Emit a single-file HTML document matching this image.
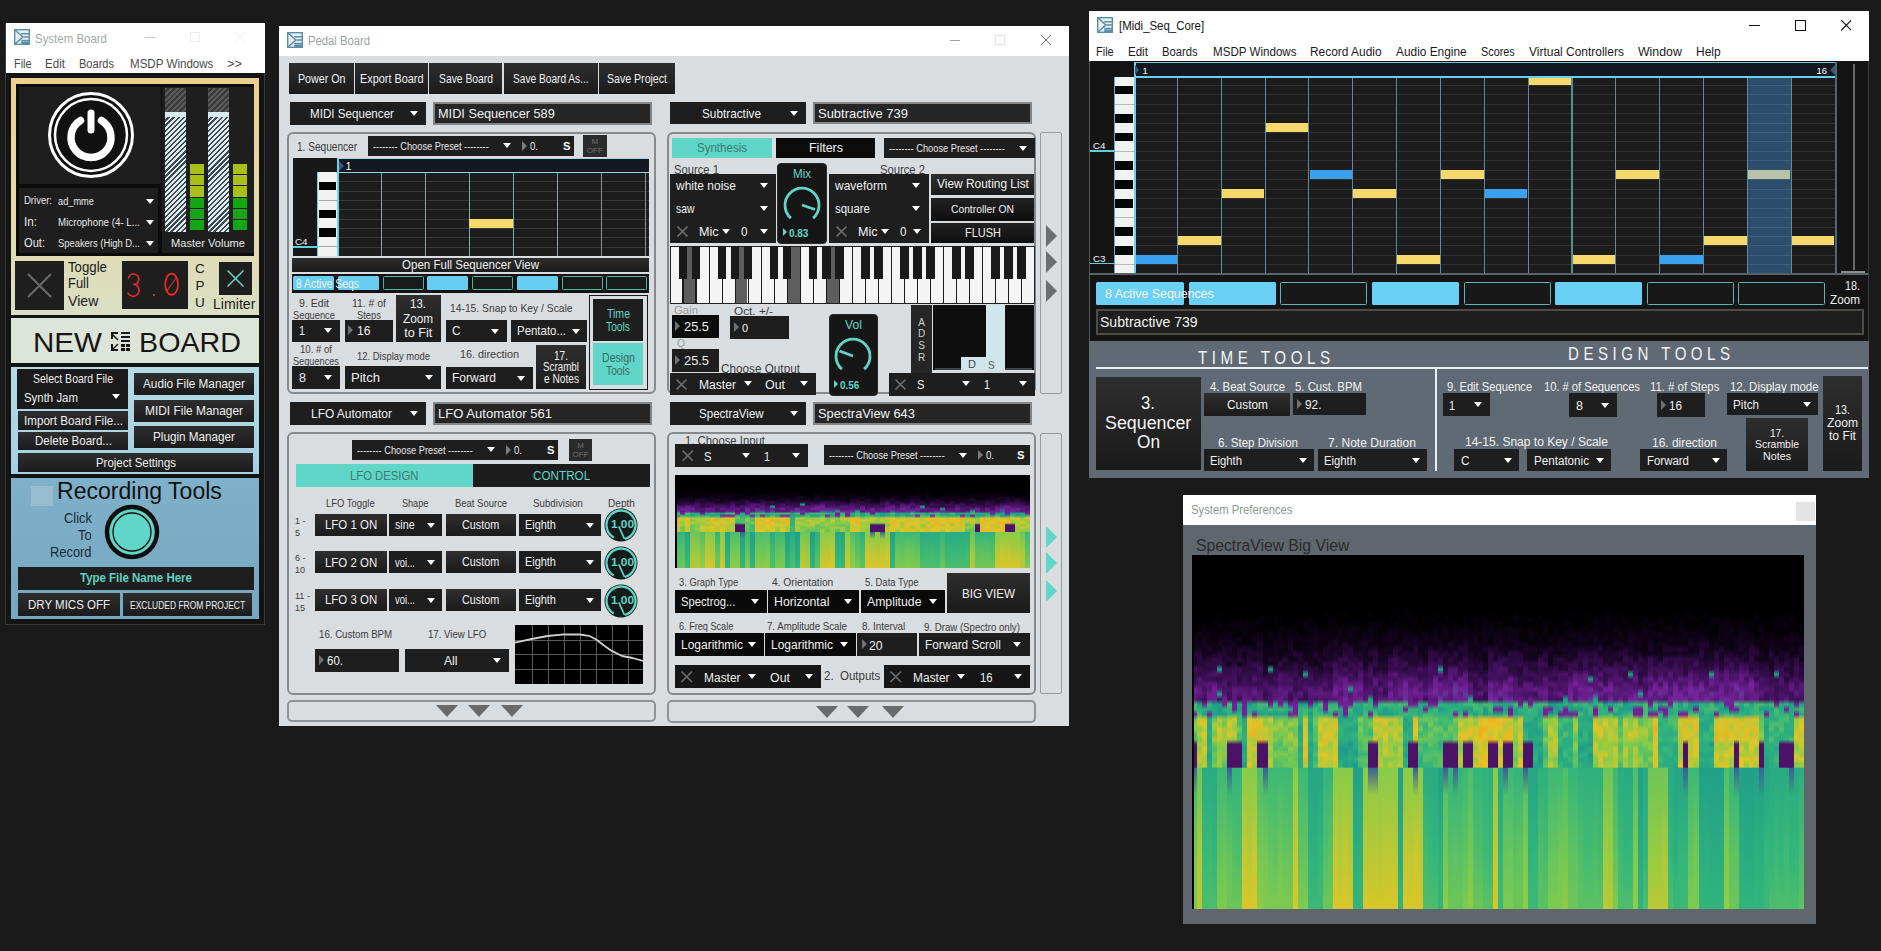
<!DOCTYPE html>
<html><head><meta charset="utf-8"><title>MSDP</title>
<style>
html,body{margin:0;padding:0;}
body{width:1881px;height:951px;overflow:hidden;background:#1a1a1a;position:relative;font-family:"Liberation Sans",sans-serif;}
div{position:absolute;box-sizing:border-box;}
svg{position:absolute;}
</style></head><body>
<div style="left:5px;top:22.5px;width:260px;height:602.5px;background:#141414;border:1px solid #3a3a3a;"></div>
<div style="left:5.5px;top:23px;width:259.0px;height:50px;background:#ffffff;"></div>
<svg style="position:absolute;left:14px;top:29px" width="16" height="16" viewBox="0 0 16 16"><rect x="0.7" y="0.7" width="14.6" height="14.6" fill="#e8f2f6" stroke="#5b8fa8" stroke-width="1.4"/><path d="M1 1 L8.8 8.0 L1 15" fill="none" stroke="#5b8fa8" stroke-width="1.6"/><path d="M7.2 4.8 H15 M9.6 8.0 H15 M7.2 11.52 H15" stroke="#5b8fa8" stroke-width="1.5"/><rect x="7.2" y="12.48" width="7.800000000000001" height="3.2" fill="#5b8fa8"/></svg>
<div style="left:35.0px;top:31.2px;font-size:13.12px;line-height:15.7px;color:#a3aba5;white-space:pre;transform:scaleX(0.874);transform-origin:0 0;">System Board</div>
<div style="left:145px;top:37px;width:10px;height:1px;background:#c8c8c8;"></div>
<div style="left:190px;top:32px;width:10px;height:10px;border:1px solid #ececec;"></div>
<svg style="position:absolute;left:235px;top:32px" width="10" height="10" viewBox="0 0 10 10"><path d="M0 0L10 10M10 0L0 10" stroke="#eeeeee" stroke-width="1"/></svg>
<div style="left:13.5px;top:56.0px;font-size:13.12px;line-height:15.7px;color:#4a4a4a;white-space:pre;transform:scaleX(0.828);transform-origin:0 0;">File</div>
<div style="left:45.0px;top:56.0px;font-size:13.12px;line-height:15.7px;color:#4a4a4a;white-space:pre;transform:scaleX(0.885);transform-origin:0 0;">Edit</div>
<div style="left:79.0px;top:56.0px;font-size:13.12px;line-height:15.7px;color:#4a4a4a;white-space:pre;transform:scaleX(0.842);transform-origin:0 0;">Boards</div>
<div style="left:129.5px;top:56.0px;font-size:13.12px;line-height:15.7px;color:#4a4a4a;white-space:pre;transform:scaleX(0.883);transform-origin:0 0;">MSDP Windows</div>
<div style="left:227.0px;top:56.0px;font-size:13.12px;line-height:15.7px;color:#4a4a4a;white-space:pre;transform:scaleX(0.979);transform-origin:0 0;">&gt;&gt;</div>
<div style="left:11px;top:78px;width:248px;height:237px;background:linear-gradient(180deg,#edcf8c 0%,#e6d8a8 50%,#d9dfc4 100%);"></div>
<div style="left:16px;top:84px;width:238px;height:172px;background:#0c0c0c;"></div>
<div style="left:19px;top:87px;width:142px;height:97px;background:#1e1e1e;"></div>
<svg style="position:absolute;left:47px;top:92px" width="88" height="88" viewBox="0 0 88 88"><circle cx="44" cy="43" r="41.5" fill="#111" stroke="#fff" stroke-width="3"/><circle cx="44" cy="43" r="36" fill="none" stroke="#fff" stroke-width="2.5"/><path d="M33.5 28.5 A20 20 0 1 0 54.5 28.5" fill="none" stroke="#fff" stroke-width="7.5" stroke-linecap="round"/><line x1="44" y1="21" x2="44" y2="38" stroke="#fff" stroke-width="7" stroke-linecap="round"/></svg>
<div style="left:19px;top:188px;width:139px;height:65px;background:#1e1e1e;"></div>
<div style="left:24.0px;top:194.4px;font-size:11.03px;line-height:13.2px;color:#e8e8e8;white-space:pre;transform:scaleX(0.862);transform-origin:0 0;">Driver:</div>
<div style="left:58.0px;top:194.9px;font-size:11.03px;line-height:13.2px;color:#e8e8e8;white-space:pre;transform:scaleX(0.839);transform-origin:0 0;">ad_mme</div>
<div style="left:24.0px;top:215.3px;font-size:12.08px;line-height:14.5px;color:#e8e8e8;white-space:pre;transform:scaleX(0.968);transform-origin:0 0;">In:</div>
<div style="left:58.0px;top:215.9px;font-size:11.03px;line-height:13.2px;color:#e8e8e8;white-space:pre;transform:scaleX(0.886);transform-origin:0 0;">Microphone (4- L...</div>
<div style="left:24.0px;top:236.3px;font-size:12.08px;line-height:14.5px;color:#e8e8e8;white-space:pre;transform:scaleX(0.920);transform-origin:0 0;">Out:</div>
<div style="left:58.0px;top:236.9px;font-size:11.03px;line-height:13.2px;color:#e8e8e8;white-space:pre;transform:scaleX(0.852);transform-origin:0 0;">Speakers (High D...</div>
<div style="left:146.0px;top:198.5px;width:0;height:0;border-left:4.0px solid transparent;border-right:4.0px solid transparent;border-top:5px solid #fff;"></div>
<div style="left:146.0px;top:219.5px;width:0;height:0;border-left:4.0px solid transparent;border-right:4.0px solid transparent;border-top:5px solid #fff;"></div>
<div style="left:146.0px;top:240.5px;width:0;height:0;border-left:4.0px solid transparent;border-right:4.0px solid transparent;border-top:5px solid #fff;"></div>
<div style="left:162px;top:87px;width:92px;height:166px;background:#1e1e1e;"></div>
<div style="left:165px;top:87.5px;width:20.5px;height:24.5px;background:repeating-linear-gradient(135deg,#5a5a5a 0 2px,#3a3a3a 2px 4px);"></div>
<div style="left:165px;top:112px;width:20.5px;height:5px;background:#d8eaf0;"></div>
<div style="left:165px;top:117px;width:20.5px;height:114.5px;background:repeating-linear-gradient(135deg,#dfeef4 0 2px,#3e4a50 2px 3.6px);"></div>
<div style="left:208px;top:87.5px;width:20.5px;height:24.5px;background:repeating-linear-gradient(135deg,#5a5a5a 0 2px,#3a3a3a 2px 4px);"></div>
<div style="left:208px;top:112px;width:20.5px;height:5px;background:#d8eaf0;"></div>
<div style="left:208px;top:117px;width:20.5px;height:114.5px;background:repeating-linear-gradient(135deg,#dfeef4 0 2px,#3e4a50 2px 3.6px);"></div>
<div style="left:190px;top:164.0px;width:14px;height:10.2px;background:#a8bf1a;"></div>
<div style="left:190px;top:175.2px;width:14px;height:10.2px;background:#a8bf1a;"></div>
<div style="left:190px;top:186.4px;width:14px;height:10.2px;background:#a8bf1a;"></div>
<div style="left:190px;top:197.6px;width:14px;height:10.2px;background:#14a514;"></div>
<div style="left:190px;top:208.8px;width:14px;height:10.2px;background:#14a514;"></div>
<div style="left:190px;top:220.0px;width:14px;height:10.2px;background:#14a514;"></div>
<div style="left:233px;top:164.0px;width:14px;height:10.2px;background:#a8bf1a;"></div>
<div style="left:233px;top:175.2px;width:14px;height:10.2px;background:#a8bf1a;"></div>
<div style="left:233px;top:186.4px;width:14px;height:10.2px;background:#a8bf1a;"></div>
<div style="left:233px;top:197.6px;width:14px;height:10.2px;background:#14a514;"></div>
<div style="left:233px;top:208.8px;width:14px;height:10.2px;background:#14a514;"></div>
<div style="left:233px;top:220.0px;width:14px;height:10.2px;background:#14a514;"></div>
<div style="left:170.5px;top:236.6px;font-size:11.55px;line-height:13.9px;color:#e8e8e8;white-space:pre;transform:scaleX(0.961);transform-origin:0 0;">Master Volume</div>
<div style="left:15px;top:261px;width:49px;height:49px;background:#1e1e1e;"></div>
<svg style="position:absolute;left:27px;top:273px" width="25" height="25" viewBox="0 0 25 25"><path d="M1 1L24 24M24 1L1 24" stroke="#6a6a6a" stroke-width="2"/></svg>
<div style="left:68.0px;top:258.5px;font-size:14.7px;line-height:17.6px;color:#1a1a1a;white-space:pre;transform:scaleX(0.900);transform-origin:0 0;">Toggle</div>
<div style="left:68.0px;top:275.4px;font-size:14.7px;line-height:17.6px;color:#1a1a1a;white-space:pre;transform:scaleX(0.878);transform-origin:0 0;">Full</div>
<div style="left:68.0px;top:292.5px;font-size:14.7px;line-height:17.6px;color:#1a1a1a;white-space:pre;transform:scaleX(0.962);transform-origin:0 0;">View</div>
<div style="left:122px;top:261px;width:66px;height:48px;background:#1e1e1e;"></div>
<svg style="position:absolute;left:126px;top:273px" width="16" height="25" viewBox="0 0 16 25"><path d="M2.4 5.6 A5.2 5.2 0 1 1 7.4 11.4 M7.4 11.4 A5.9 5.9 0 1 1 1.8 19.6" fill="none" stroke="#ec2a20" stroke-width="1.7"/></svg>
<div style="left:152.5px;top:293.5px;width:2.5px;height:2.5px;background:#9a4a40;"></div>
<svg style="position:absolute;left:162.5px;top:272px" width="18" height="26" viewBox="0 0 18 26"><ellipse cx="8.6" cy="12.2" rx="6.4" ry="10.6" fill="none" stroke="#ec2a20" stroke-width="1.7"/><path d="M3.5 19 L13.5 5.5" stroke="#ec2a20" stroke-width="1.1"/></svg>
<div style="left:195.1px;top:260.7px;font-size:13.5px;line-height:16.2px;color:#1a1a1a;white-space:pre;">C</div>
<div style="left:195.5px;top:278.1px;font-size:13.5px;line-height:16.2px;color:#1a1a1a;white-space:pre;">P</div>
<div style="left:195.1px;top:294.5px;font-size:13.5px;line-height:16.2px;color:#1a1a1a;white-space:pre;">U</div>
<div style="left:219px;top:262px;width:33px;height:33px;background:#1e1e1e;"></div>
<svg style="position:absolute;left:227px;top:270px" width="17" height="17" viewBox="0 0 17 17"><path d="M0.5 0.5L16.5 16.5M16.5 0.5L0.5 16.5" stroke="#5fd6c8" stroke-width="1.5"/></svg>
<div style="left:212.8px;top:295.9px;font-size:14.7px;line-height:17.6px;color:#1a1a1a;white-space:pre;transform:scaleX(0.961);transform-origin:0 0;">Limiter</div>
<div style="left:11px;top:318px;width:248px;height:45px;background:#dde5d8;"></div>
<div style="left:33.0px;top:325.2px;font-size:28.35px;line-height:34.0px;color:#161616;white-space:pre;transform:scaleX(1.043);transform-origin:0 0;">NEW</div>
<svg style="position:absolute;left:110px;top:331px" width="21" height="21" viewBox="0 0 21 21"><g fill="#161616"><path d="M1 1h7v2H3v5H1z" /><path d="M2 3l6 6" stroke="#161616" stroke-width="1.5"/><rect x="11" y="1" width="9" height="2"/><rect x="11" y="5" width="9" height="2"/><rect x="11" y="9" width="9" height="2"/><rect x="1" y="13" width="2" height="7"/><rect x="1" y="18" width="7" height="2"/><path d="M2 19l6-6" stroke="#161616" stroke-width="1.5"/><rect x="11" y="13" width="4" height="3"/><rect x="16" y="13" width="4" height="3"/><rect x="11" y="17" width="4" height="3"/><rect x="16" y="17" width="4" height="3"/></g></svg>
<div style="left:139.0px;top:325.2px;font-size:28.35px;line-height:34.0px;color:#161616;white-space:pre;transform:scaleX(1.012);transform-origin:0 0;">BOARD</div>
<div style="left:11px;top:367px;width:248px;height:107px;background:linear-gradient(180deg,#b6dbe6,#a3d0e2);"></div>
<div style="left:17px;top:369px;width:111px;height:39.5px;background:#1a1a1a;"></div>
<div style="left:32.5px;top:372.3px;font-size:12.08px;line-height:14.5px;color:#eee;white-space:pre;transform:scaleX(0.870);transform-origin:0 0;">Select Board File</div>
<div style="left:24.0px;top:390.5px;font-size:12.6px;line-height:15.1px;color:#eee;white-space:pre;transform:scaleX(0.907);transform-origin:0 0;">Synth Jam</div>
<div style="left:111.5px;top:394.0px;width:0;height:0;border-left:4.5px solid transparent;border-right:4.5px solid transparent;border-top:5px solid #fff;"></div>
<div style="left:18px;top:411px;width:110px;height:19px;background:linear-gradient(#2e2e2e,#1b1b1b);"></div>
<div style="left:23.5px;top:413.5px;font-size:12.6px;line-height:15.1px;color:#eee;white-space:pre;transform:scaleX(0.924);transform-origin:0 0;">Import Board File...</div>
<div style="left:18px;top:432px;width:110px;height:18px;background:linear-gradient(#2e2e2e,#1b1b1b);"></div>
<div style="left:34.5px;top:434.0px;font-size:12.6px;line-height:15.1px;color:#eee;white-space:pre;transform:scaleX(0.916);transform-origin:0 0;">Delete Board...</div>
<div style="left:134px;top:373px;width:119.5px;height:22px;background:linear-gradient(#2e2e2e,#1b1b1b);"></div>
<div style="left:142.8px;top:377.0px;font-size:12.6px;line-height:15.1px;color:#eee;white-space:pre;transform:scaleX(0.934);transform-origin:0 0;">Audio File Manager</div>
<div style="left:134px;top:400px;width:119.5px;height:22px;background:linear-gradient(#2e2e2e,#1b1b1b);"></div>
<div style="left:144.8px;top:404.0px;font-size:12.6px;line-height:15.1px;color:#eee;white-space:pre;transform:scaleX(0.946);transform-origin:0 0;">MIDI File Manager</div>
<div style="left:134px;top:426px;width:119.5px;height:22px;background:linear-gradient(#2e2e2e,#1b1b1b);"></div>
<div style="left:152.8px;top:430.0px;font-size:12.6px;line-height:15.1px;color:#eee;white-space:pre;transform:scaleX(0.929);transform-origin:0 0;">Plugin Manager</div>
<div style="left:18px;top:453px;width:235px;height:19px;background:linear-gradient(#2e2e2e,#1b1b1b);"></div>
<div style="left:95.5px;top:455.5px;font-size:12.6px;line-height:15.1px;color:#eee;white-space:pre;transform:scaleX(0.907);transform-origin:0 0;">Project Settings</div>
<div style="left:11px;top:477.5px;width:248px;height:141.5px;background:linear-gradient(180deg,#7fb0c9,#77a8c2);"></div>
<div style="left:31px;top:486px;width:22px;height:20px;background:#c9d6dc;opacity:0.35;"></div>
<div style="left:57.0px;top:475.7px;font-size:24.15px;line-height:29.0px;color:#111;white-space:pre;transform:scaleX(0.955);transform-origin:0 0;">Recording Tools</div>
<div style="left:63.6px;top:510.2px;font-size:14px;line-height:16.8px;color:#1a2a38;white-space:pre;transform:scaleX(0.920);transform-origin:0 0;">Click</div>
<div style="left:77.9px;top:527.2px;font-size:14px;line-height:16.8px;color:#1a2a38;white-space:pre;transform:scaleX(0.920);transform-origin:0 0;">To</div>
<div style="left:50.0px;top:544.2px;font-size:14px;line-height:16.8px;color:#1a2a38;white-space:pre;transform:scaleX(0.920);transform-origin:0 0;">Record</div>
<svg style="position:absolute;left:104px;top:504px" width="56" height="56" viewBox="0 0 56 56"><circle cx="28" cy="28" r="25" fill="#5fd6c8" stroke="#0e0e0e" stroke-width="4.5"/><circle cx="28" cy="28" r="19" fill="none" stroke="#0e0e0e" stroke-width="1.3"/></svg>
<div style="left:18px;top:567px;width:236px;height:23px;background:#1e1e1e;"></div>
<div style="left:80.0px;top:570.5px;font-size:12.6px;line-height:15.1px;color:#5fd3c3;white-space:pre;font-weight:bold;transform:scaleX(0.910);transform-origin:0 0;">Type File Name Here</div>
<div style="left:18px;top:593px;width:102px;height:23px;background:linear-gradient(#2e2e2e,#1b1b1b);"></div>
<div style="left:28.0px;top:597.5px;font-size:12.6px;line-height:15.1px;color:#eee;white-space:pre;transform:scaleX(0.913);transform-origin:0 0;">DRY MICS OFF</div>
<div style="left:122.5px;top:593px;width:129.0px;height:23px;background:linear-gradient(#2e2e2e,#1b1b1b);"></div>
<div style="left:129.5px;top:598.7px;font-size:10.5px;line-height:12.6px;color:#eee;white-space:pre;transform:scaleX(0.805);transform-origin:0 0;">EXCLUDED FROM PROJECT</div>
<div style="left:278.8px;top:26px;width:790.5px;height:700.3px;background:#dadde0;"></div>
<div style="left:278.8px;top:26px;width:790.5px;height:30px;background:#ffffff;"></div>
<svg style="position:absolute;left:287px;top:32px" width="16" height="16" viewBox="0 0 16 16"><rect x="0.7" y="0.7" width="14.6" height="14.6" fill="#e8f2f6" stroke="#5b8fa8" stroke-width="1.4"/><path d="M1 1 L8.8 8.0 L1 15" fill="none" stroke="#5b8fa8" stroke-width="1.6"/><path d="M7.2 4.8 H15 M9.6 8.0 H15 M7.2 11.52 H15" stroke="#5b8fa8" stroke-width="1.5"/><rect x="7.2" y="12.48" width="7.800000000000001" height="3.2" fill="#5b8fa8"/></svg>
<div style="left:308.4px;top:33.2px;font-size:13.12px;line-height:15.7px;color:#9aa39c;white-space:pre;transform:scaleX(0.859);transform-origin:0 0;">Pedal Board</div>
<div style="left:949.5px;top:40px;width:10px;height:1px;background:#a0a0a0;"></div>
<div style="left:995px;top:35px;width:10px;height:10px;border:1px solid #e6e6e6;"></div>
<svg style="position:absolute;left:1041px;top:35px" width="10" height="10" viewBox="0 0 10 10"><path d="M0 0L10 10M10 0L0 10" stroke="#707070" stroke-width="1"/></svg>
<div style="left:289px;top:63px;width:64.8px;height:30.7px;background:linear-gradient(#2e2e2e,#1b1b1b);"></div>
<div style="left:297.6px;top:72.1px;font-size:12.08px;line-height:14.5px;color:#f0f0f0;white-space:pre;transform:scaleX(0.884);transform-origin:0 0;">Power On</div>
<div style="left:355px;top:63px;width:72.7px;height:30.7px;background:linear-gradient(#2e2e2e,#1b1b1b);"></div>
<div style="left:359.6px;top:72.1px;font-size:12.08px;line-height:14.5px;color:#f0f0f0;white-space:pre;transform:scaleX(0.901);transform-origin:0 0;">Export Board</div>
<div style="left:429px;top:63px;width:73.2px;height:30.7px;background:linear-gradient(#2e2e2e,#1b1b1b);"></div>
<div style="left:438.6px;top:72.1px;font-size:12.08px;line-height:14.5px;color:#f0f0f0;white-space:pre;transform:scaleX(0.855);transform-origin:0 0;">Save Board</div>
<div style="left:503.5px;top:63px;width:94.5px;height:30.7px;background:linear-gradient(#2e2e2e,#1b1b1b);"></div>
<div style="left:512.9px;top:72.1px;font-size:12.08px;line-height:14.5px;color:#f0f0f0;white-space:pre;transform:scaleX(0.841);transform-origin:0 0;">Save Board As...</div>
<div style="left:599px;top:63px;width:76px;height:30.7px;background:linear-gradient(#2e2e2e,#1b1b1b);"></div>
<div style="left:607.0px;top:72.1px;font-size:12.08px;line-height:14.5px;color:#f0f0f0;white-space:pre;transform:scaleX(0.876);transform-origin:0 0;">Save Project</div>
<div style="left:290px;top:102px;width:135.7px;height:22.7px;background:#1e1e1e;"></div>
<div style="left:309.6px;top:105.7px;font-size:13.65px;line-height:16.4px;color:#f2f2f2;white-space:pre;transform:scaleX(0.852);transform-origin:0 0;">MIDI Sequencer</div>
<div style="left:409.9px;top:110.8px;width:0;height:0;border-left:4.5px solid transparent;border-right:4.5px solid transparent;border-top:5px solid #fff;"></div>
<div style="left:433px;top:102.3px;width:218.5px;height:22.5px;background:#262626;border:2px solid #858585;"></div>
<div style="left:437.5px;top:105.9px;font-size:13.65px;line-height:16.4px;color:#f2f2f2;white-space:pre;transform:scaleX(0.933);transform-origin:0 0;">MIDI Sequencer 589</div>
<div style="left:670px;top:102px;width:135.6px;height:22.2px;background:#1e1e1e;"></div>
<div style="left:702.0px;top:105.5px;font-size:13.65px;line-height:16.4px;color:#f2f2f2;white-space:pre;transform:scaleX(0.864);transform-origin:0 0;">Subtractive</div>
<div style="left:789.5px;top:110.6px;width:0;height:0;border-left:4.5px solid transparent;border-right:4.5px solid transparent;border-top:5px solid #fff;"></div>
<div style="left:813.2px;top:102px;width:218.6px;height:22.4px;background:#262626;border:2px solid #858585;"></div>
<div style="left:817.7px;top:105.6px;font-size:13.65px;line-height:16.4px;color:#f2f2f2;white-space:pre;transform:scaleX(0.949);transform-origin:0 0;">Subtractive 739</div>
<div style="left:286.8px;top:131.5px;width:368.9px;height:262.0px;border:2px solid #868a8d;border-radius:6px;"></div>
<div style="left:297.0px;top:139.6px;font-size:12.08px;line-height:14.5px;color:#3a3a3a;white-space:pre;transform:scaleX(0.835);transform-origin:0 0;">1. Sequencer</div>
<div style="left:368px;top:136px;width:205.7px;height:19.6px;background:#1e1e1e;"></div>
<div style="left:373.0px;top:140.0px;font-size:11.03px;line-height:13.2px;color:#e8e8e8;white-space:pre;transform:scaleX(0.841);transform-origin:0 0;">-------- Choose Preset --------</div>
<div style="left:503.3px;top:143.3px;width:0;height:0;border-left:4.5px solid transparent;border-right:4.5px solid transparent;border-top:5px solid #fff;"></div>
<div style="left:522.3px;top:140.8px;width:0;height:0;border-top:5.0px solid transparent;border-bottom:5.0px solid transparent;border-left:5px solid #7a7a7a;"></div>
<div style="left:529.8px;top:140.2px;font-size:11.03px;line-height:13.2px;color:#e8e8e8;white-space:pre;transform:scaleX(0.870);transform-origin:0 0;">0.</div>
<div style="left:563.2px;top:140.2px;font-size:11.03px;line-height:13.2px;color:#fff;white-space:pre;font-weight:bold;transform:scaleX(1.019);transform-origin:0 0;">S</div>
<div style="left:583px;top:135px;width:23.6px;height:21.6px;background:#2b2b2b;"></div>
<div style="left:591.5px;top:136.7px;font-size:8px;line-height:9.6px;color:#707070;white-space:pre;">M</div>
<div style="left:586.8px;top:146.2px;font-size:8px;line-height:9.6px;color:#707070;white-space:pre;">OFF</div>
<div style="left:293px;top:158px;width:356px;height:98px;background:#181818;"></div>
<div style="left:337px;top:158px;width:312px;height:14.5px;background:#141820;border-top:1.5px solid #9fd8f0;border-left:2px solid #6ad0ec;"></div>
<div style="left:338.5px;top:160.5px;width:0;height:0;border-top:5.0px solid transparent;border-bottom:5.0px solid transparent;border-left:5px solid #3a5a70;"></div>
<div style="left:345.7px;top:160.5px;font-size:10px;line-height:12.0px;color:#fff;white-space:pre;">1</div>
<div style="left:337px;top:172px;width:312px;height:84px;background:#1d1d1d;border-left:2px solid #6ad0ec;border-top:1.5px solid #8fd4ec;"></div>
<div style="left:339px;top:181.3px;width:310px;height:1px;background:rgba(255,255,255,0.12);"></div>
<div style="left:339px;top:190.7px;width:310px;height:1px;background:rgba(255,255,255,0.12);"></div>
<div style="left:339px;top:200.0px;width:310px;height:1px;background:rgba(255,255,255,0.12);"></div>
<div style="left:339px;top:209.3px;width:310px;height:1px;background:rgba(255,255,255,0.12);"></div>
<div style="left:339px;top:218.7px;width:310px;height:1px;background:rgba(255,255,255,0.12);"></div>
<div style="left:339px;top:228.0px;width:310px;height:1px;background:rgba(255,255,255,0.12);"></div>
<div style="left:339px;top:237.3px;width:310px;height:1px;background:rgba(255,255,255,0.12);"></div>
<div style="left:339px;top:246.7px;width:310px;height:1px;background:rgba(255,255,255,0.12);"></div>
<div style="left:380.6px;top:173px;width:1.2px;height:83px;background:#7fa9ad;"></div>
<div style="left:424.7px;top:173px;width:1.2px;height:83px;background:#7fa9ad;"></div>
<div style="left:468.8px;top:173px;width:1.2px;height:83px;background:#7fa9ad;"></div>
<div style="left:512.9px;top:173px;width:1.2px;height:83px;background:#7fa9ad;"></div>
<div style="left:557.0px;top:173px;width:1.2px;height:83px;background:#7fa9ad;"></div>
<div style="left:601.1px;top:173px;width:1.2px;height:83px;background:#8a8f90;"></div>
<div style="left:645.2px;top:173px;width:1.2px;height:83px;background:#8a8f90;"></div>
<div style="left:468.5px;top:219px;width:44.0px;height:9.4px;background:#f7d96b;"></div>
<div style="left:317px;top:172px;width:20px;height:84px;background:#f2f2f2;border-left:1.5px solid #5ad0e0;"></div>
<div style="left:318.5px;top:181.7px;width:17.5px;height:8.5px;background:#050505;"></div>
<div style="left:318.5px;top:199.5px;width:18px;height:1px;background:#a8a8a8;"></div>
<div style="left:318.5px;top:209.7px;width:17.5px;height:8.5px;background:#050505;"></div>
<div style="left:318.5px;top:228.4px;width:17.5px;height:8.5px;background:#050505;"></div>
<div style="left:318.5px;top:246.2px;width:18px;height:1px;background:#a8a8a8;"></div>
<div style="left:295.0px;top:236.0px;font-size:9.97px;line-height:12.0px;color:#f0f0f0;white-space:pre;transform:scaleX(0.989);transform-origin:0 0;">C4</div>
<div style="left:293px;top:246px;width:24px;height:1.5px;background:#5ad0e0;"></div>
<div style="left:292px;top:258px;width:357px;height:13.5px;background:linear-gradient(#2e2e2e,#1b1b1b);"></div>
<div style="left:402.0px;top:258.0px;font-size:12.08px;line-height:14.5px;color:#f0f0f0;white-space:pre;transform:scaleX(0.955);transform-origin:0 0;">Open Full Sequencer View</div>
<div style="left:292px;top:273.8px;width:357px;height:18.9px;background:#121212;"></div>
<div style="left:293px;top:276px;width:41px;height:14px;background:#67cdf2;border-radius:1.5px;"></div>
<div style="left:337.8px;top:276px;width:41.2px;height:14px;background:#67cdf2;border-radius:1.5px;"></div>
<div style="left:382.8px;top:276px;width:41.2px;height:14px;background:#1a1a1a;border:1.3px solid #4fb5a5;border-radius:1.5px;"></div>
<div style="left:427px;top:276px;width:41px;height:14px;background:#67cdf2;border-radius:1.5px;"></div>
<div style="left:471.7px;top:276px;width:41.1px;height:14px;background:#1a1a1a;border:1.3px solid #4fb5a5;border-radius:1.5px;"></div>
<div style="left:517px;top:276px;width:41px;height:14px;background:#67cdf2;border-radius:1.5px;"></div>
<div style="left:562px;top:276px;width:40.7px;height:14px;background:#1a1a1a;border:1.3px solid #4fb5a5;border-radius:1.5px;"></div>
<div style="left:606px;top:276px;width:41px;height:14px;background:#1a1a1a;border:1.3px solid #4fb5a5;border-radius:1.5px;"></div>
<div style="left:296.0px;top:276.6px;font-size:12.08px;line-height:14.5px;color:#f4f4f4;white-space:pre;transform:scaleX(0.861);transform-origin:0 0;">8 Active Seqs</div>
<div style="left:299.0px;top:296.9px;font-size:11.03px;line-height:13.2px;color:#3a3a3a;white-space:pre;transform:scaleX(0.959);transform-origin:0 0;">9. Edit</div>
<div style="left:293.0px;top:308.6px;font-size:11.03px;line-height:13.2px;color:#3a3a3a;white-space:pre;transform:scaleX(0.845);transform-origin:0 0;">Sequence</div>
<div style="left:292px;top:319.5px;width:47.7px;height:22.5px;background:#1e1e1e;"></div>
<div style="left:299.0px;top:323.1px;font-size:13.65px;line-height:16.4px;color:#f0f0f0;white-space:pre;transform:scaleX(0.790);transform-origin:0 0;">1</div>
<div style="left:323.5px;top:328.2px;width:0;height:0;border-left:4.5px solid transparent;border-right:4.5px solid transparent;border-top:5px solid #fff;"></div>
<div style="left:352.0px;top:296.9px;font-size:11.03px;line-height:13.2px;color:#3a3a3a;white-space:pre;transform:scaleX(0.945);transform-origin:0 0;">11. # of</div>
<div style="left:357.0px;top:308.6px;font-size:11.03px;line-height:13.2px;color:#3a3a3a;white-space:pre;transform:scaleX(0.851);transform-origin:0 0;">Steps</div>
<div style="left:345.3px;top:319.5px;width:47.7px;height:22.5px;background:#1e1e1e;"></div>
<div style="left:348.0px;top:325.0px;width:0;height:0;border-top:5.5px solid transparent;border-bottom:5.5px solid transparent;border-left:5px solid #707070;"></div>
<div style="left:357.0px;top:323.4px;font-size:13.65px;line-height:16.4px;color:#f0f0f0;white-space:pre;transform:scaleX(0.889);transform-origin:0 0;">16</div>
<div style="left:396px;top:295px;width:44.7px;height:47px;background:linear-gradient(#2e2e2e,#1d1d1d);"></div>
<div style="left:410.3px;top:297.0px;font-size:12.6px;line-height:15.1px;color:#f0f0f0;white-space:pre;transform:scaleX(0.913);transform-origin:0 0;">13.</div>
<div style="left:403.3px;top:312.0px;font-size:12.6px;line-height:15.1px;color:#f0f0f0;white-space:pre;transform:scaleX(0.931);transform-origin:0 0;">Zoom</div>
<div style="left:404.3px;top:326.0px;font-size:12.6px;line-height:15.1px;color:#f0f0f0;white-space:pre;">to Fit</div>
<div style="left:450.4px;top:301.6px;font-size:11.55px;line-height:13.9px;color:#3a3a3a;white-space:pre;transform:scaleX(0.892);transform-origin:0 0;">14-15. Snap to Key / Scale</div>
<div style="left:446px;top:320px;width:60.6px;height:22px;background:#1e1e1e;"></div>
<div style="left:452.0px;top:323.4px;font-size:13.65px;line-height:16.4px;color:#f0f0f0;white-space:pre;transform:scaleX(0.862);transform-origin:0 0;">C</div>
<div style="left:490.5px;top:328.5px;width:0;height:0;border-left:4.5px solid transparent;border-right:4.5px solid transparent;border-top:5px solid #fff;"></div>
<div style="left:511px;top:320px;width:75.5px;height:22px;background:#1e1e1e;"></div>
<div style="left:517.0px;top:323.4px;font-size:13.65px;line-height:16.4px;color:#f0f0f0;white-space:pre;transform:scaleX(0.839);transform-origin:0 0;">Pentato...</div>
<div style="left:571.5px;top:328.5px;width:0;height:0;border-left:4.5px solid transparent;border-right:4.5px solid transparent;border-top:5px solid #fff;"></div>
<div style="left:589px;top:295px;width:59px;height:95px;border:1.5px solid #1a1a1a;"></div>
<div style="left:593px;top:299px;width:50px;height:41.6px;background:#1e1e1e;"></div>
<div style="left:606.5px;top:306.8px;font-size:12.08px;line-height:14.5px;color:#5fd6c8;white-space:pre;transform:scaleX(0.871);transform-origin:0 0;">Time</div>
<div style="left:606.0px;top:319.8px;font-size:12.08px;line-height:14.5px;color:#5fd6c8;white-space:pre;transform:scaleX(0.851);transform-origin:0 0;">Tools</div>
<div style="left:593px;top:343px;width:50px;height:42px;background:#5fd6c8;"></div>
<div style="left:601.5px;top:350.8px;font-size:12.08px;line-height:14.5px;color:#3a6a66;white-space:pre;transform:scaleX(0.878);transform-origin:0 0;">Design</div>
<div style="left:606.0px;top:363.8px;font-size:12.08px;line-height:14.5px;color:#3a6a66;white-space:pre;transform:scaleX(0.851);transform-origin:0 0;">Tools</div>
<div style="left:300.0px;top:343.4px;font-size:11.03px;line-height:13.2px;color:#3a3a3a;white-space:pre;transform:scaleX(0.870);transform-origin:0 0;">10. # of</div>
<div style="left:293.0px;top:355.4px;font-size:11.03px;line-height:13.2px;color:#3a3a3a;white-space:pre;transform:scaleX(0.833);transform-origin:0 0;">Sequences</div>
<div style="left:292px;top:366px;width:47.7px;height:23px;background:#1e1e1e;"></div>
<div style="left:299.0px;top:369.9px;font-size:13.65px;line-height:16.4px;color:#f0f0f0;white-space:pre;transform:scaleX(0.922);transform-origin:0 0;">8</div>
<div style="left:323.5px;top:375.0px;width:0;height:0;border-left:4.5px solid transparent;border-right:4.5px solid transparent;border-top:5px solid #fff;"></div>
<div style="left:357.1px;top:349.6px;font-size:11.03px;line-height:13.2px;color:#3a3a3a;white-space:pre;transform:scaleX(0.857);transform-origin:0 0;">12. Display mode</div>
<div style="left:345px;top:366px;width:95.7px;height:23px;background:#1e1e1e;"></div>
<div style="left:351.0px;top:369.9px;font-size:13.65px;line-height:16.4px;color:#f0f0f0;white-space:pre;transform:scaleX(0.956);transform-origin:0 0;">Pitch</div>
<div style="left:424.5px;top:375.0px;width:0;height:0;border-left:4.5px solid transparent;border-right:4.5px solid transparent;border-top:5px solid #fff;"></div>
<div style="left:459.9px;top:347.6px;font-size:11.55px;line-height:13.9px;color:#3a3a3a;white-space:pre;transform:scaleX(0.938);transform-origin:0 0;">16. direction</div>
<div style="left:446px;top:367px;width:86.5px;height:22px;background:#1e1e1e;"></div>
<div style="left:452.0px;top:370.4px;font-size:13.65px;line-height:16.4px;color:#f0f0f0;white-space:pre;transform:scaleX(0.879);transform-origin:0 0;">Forward</div>
<div style="left:516.5px;top:375.5px;width:0;height:0;border-left:4.5px solid transparent;border-right:4.5px solid transparent;border-top:5px solid #fff;"></div>
<div style="left:536px;top:345px;width:49.8px;height:44px;background:linear-gradient(#2e2e2e,#1d1d1d);"></div>
<div style="left:554.0px;top:348.5px;font-size:12.6px;line-height:15.1px;color:#f0f0f0;white-space:pre;transform:scaleX(0.799);transform-origin:0 0;">17.</div>
<div style="left:543.0px;top:360.0px;font-size:12.6px;line-height:15.1px;color:#f0f0f0;white-space:pre;transform:scaleX(0.779);transform-origin:0 0;">Scrambl</div>
<div style="left:543.5px;top:372.0px;font-size:12.6px;line-height:15.1px;color:#f0f0f0;white-space:pre;transform:scaleX(0.806);transform-origin:0 0;">e Notes</div>
<div style="left:667px;top:131.8px;width:368.7px;height:262.7px;border:2px solid #868a8d;border-radius:6px;"></div>
<div style="left:671.9px;top:137.9px;width:99.9px;height:20.1px;background:#5fd6c8;"></div>
<div style="left:696.8px;top:141.2px;font-size:12.6px;line-height:15.1px;color:#3a7a74;white-space:pre;transform:scaleX(0.915);transform-origin:0 0;">Synthesis</div>
<div style="left:775.6px;top:138px;width:99.7px;height:20px;background:#0c0c0c;"></div>
<div style="left:808.5px;top:141.2px;font-size:12.6px;line-height:15.1px;color:#f2f2f2;white-space:pre;transform:scaleX(0.991);transform-origin:0 0;">Filters</div>
<div style="left:883.9px;top:138px;width:150.9px;height:20px;background:#1e1e1e;"></div>
<div style="left:888.9px;top:142.2px;font-size:11.03px;line-height:13.2px;color:#e8e8e8;white-space:pre;transform:scaleX(0.841);transform-origin:0 0;">-------- Choose Preset --------</div>
<div style="left:1019.0px;top:145.5px;width:0;height:0;border-left:4.5px solid transparent;border-right:4.5px solid transparent;border-top:5px solid #fff;"></div>
<div style="left:674.0px;top:162.6px;font-size:12.08px;line-height:14.5px;color:#3a3a3a;white-space:pre;transform:scaleX(0.931);transform-origin:0 0;">Source 1</div>
<div style="left:879.5px;top:162.6px;font-size:12.08px;line-height:14.5px;color:#3a3a3a;white-space:pre;transform:scaleX(0.931);transform-origin:0 0;">Source 2</div>
<div style="left:670px;top:174px;width:105.6px;height:68.6px;background:#1e1e1e;"></div>
<div style="left:676.0px;top:178.5px;font-size:12.6px;line-height:15.1px;color:#f0f0f0;white-space:pre;transform:scaleX(0.952);transform-origin:0 0;">white noise</div>
<div style="left:759.5px;top:183.0px;width:0;height:0;border-left:4.5px solid transparent;border-right:4.5px solid transparent;border-top:5px solid #fff;"></div>
<div style="left:676.0px;top:201.5px;font-size:12.6px;line-height:15.1px;color:#f0f0f0;white-space:pre;transform:scaleX(0.826);transform-origin:0 0;">saw</div>
<div style="left:759.5px;top:206.0px;width:0;height:0;border-left:4.5px solid transparent;border-right:4.5px solid transparent;border-top:5px solid #fff;"></div>
<svg style="position:absolute;left:677px;top:226px" width="11" height="11" viewBox="0 0 11 11"><path d="M0.5 0.5L10.5 10.5M10.5 0.5L0.5 10.5" stroke="#6a6a6a" stroke-width="1.6"/></svg>
<div style="left:699.0px;top:224.5px;font-size:12.6px;line-height:15.1px;color:#f0f0f0;white-space:pre;">Mic</div>
<div style="left:722.4px;top:228.5px;width:0;height:0;border-left:4.0px solid transparent;border-right:4.0px solid transparent;border-top:5px solid #fff;"></div>
<div style="left:740.5px;top:224.5px;font-size:12.6px;line-height:15.1px;color:#f0f0f0;white-space:pre;transform:scaleX(0.928);transform-origin:0 0;">0</div>
<div style="left:760.1px;top:228.5px;width:0;height:0;border-left:4.0px solid transparent;border-right:4.0px solid transparent;border-top:5px solid #fff;"></div>
<div style="left:829px;top:174px;width:99.8px;height:68.6px;background:#1e1e1e;"></div>
<div style="left:835.0px;top:178.5px;font-size:12.6px;line-height:15.1px;color:#f0f0f0;white-space:pre;transform:scaleX(0.952);transform-origin:0 0;">waveform</div>
<div style="left:911.5px;top:183.0px;width:0;height:0;border-left:4.5px solid transparent;border-right:4.5px solid transparent;border-top:5px solid #fff;"></div>
<div style="left:835.0px;top:201.5px;font-size:12.6px;line-height:15.1px;color:#f0f0f0;white-space:pre;transform:scaleX(0.908);transform-origin:0 0;">square</div>
<div style="left:911.5px;top:206.0px;width:0;height:0;border-left:4.5px solid transparent;border-right:4.5px solid transparent;border-top:5px solid #fff;"></div>
<svg style="position:absolute;left:836px;top:226px" width="11" height="11" viewBox="0 0 11 11"><path d="M0.5 0.5L10.5 10.5M10.5 0.5L0.5 10.5" stroke="#6a6a6a" stroke-width="1.6"/></svg>
<div style="left:858.0px;top:224.5px;font-size:12.6px;line-height:15.1px;color:#f0f0f0;white-space:pre;">Mic</div>
<div style="left:881.4px;top:228.5px;width:0;height:0;border-left:4.0px solid transparent;border-right:4.0px solid transparent;border-top:5px solid #fff;"></div>
<div style="left:899.5px;top:224.5px;font-size:12.6px;line-height:15.1px;color:#f0f0f0;white-space:pre;transform:scaleX(0.928);transform-origin:0 0;">0</div>
<div style="left:913.3px;top:228.5px;width:0;height:0;border-left:4.0px solid transparent;border-right:4.0px solid transparent;border-top:5px solid #fff;"></div>
<div style="left:776.9px;top:163px;width:49.7px;height:81px;background:#161616;border-radius:4px;border:1px solid #2a2a2a;"></div>
<div style="left:792.7px;top:166.8px;font-size:12.08px;line-height:14.5px;color:#5fd6c8;white-space:pre;transform:scaleX(0.958);transform-origin:0 0;">Mix</div>
<svg style="position:absolute;left:782px;top:185px" width="40" height="40" viewBox="0 0 40 40"><path d="M8.9 33.1 A17 17 0 1 1 31.1 33.1" fill="none" stroke="#5fd6c8" stroke-width="2.8"/><line x1="20" y1="20" x2="33" y2="24.5" stroke="#5fd6c8" stroke-width="2.8"/></svg>
<div style="left:783.0px;top:228.0px;width:0;height:0;border-top:4.5px solid transparent;border-bottom:4.5px solid transparent;border-left:4px solid #5fd6c8;"></div>
<div style="left:789.0px;top:227.2px;font-size:10.5px;line-height:12.6px;color:#5fd6c8;white-space:pre;font-weight:bold;transform:scaleX(0.950);transform-origin:0 0;font-family:"Liberation Mono",monospace;">0.83</div>
<div style="left:931.3px;top:174px;width:102.7px;height:20.7px;background:linear-gradient(#2e2e2e,#1b1b1b);"></div>
<div style="left:936.6px;top:177.3px;font-size:12.6px;line-height:15.1px;color:#f0f0f0;white-space:pre;transform:scaleX(0.947);transform-origin:0 0;">View Routing List</div>
<div style="left:931.3px;top:198px;width:102.7px;height:22.7px;background:linear-gradient(#222,#0e0e0e);"></div>
<div style="left:951.2px;top:203.4px;font-size:11.03px;line-height:13.2px;color:#f0f0f0;white-space:pre;transform:scaleX(0.934);transform-origin:0 0;">Controller ON</div>
<div style="left:931.3px;top:223px;width:102.7px;height:19.6px;background:linear-gradient(#222,#0e0e0e);"></div>
<div style="left:964.7px;top:226.0px;font-size:12.6px;line-height:15.1px;color:#f0f0f0;white-space:pre;transform:scaleX(0.871);transform-origin:0 0;">FLUSH</div>
<div style="left:1039.9px;top:132.3px;width:21.9px;height:261.7px;border:1.5px solid #9a9a9a;border-radius:2px;"></div>
<div style="left:1046.0px;top:224.5px;width:0;height:0;border-top:11.0px solid transparent;border-bottom:11.0px solid transparent;border-left:11px solid #6e6e6e;"></div>
<div style="left:1046.0px;top:251.3px;width:0;height:0;border-top:11.0px solid transparent;border-bottom:11.0px solid transparent;border-left:11px solid #6e6e6e;"></div>
<div style="left:1046.0px;top:280.4px;width:0;height:0;border-top:11.0px solid transparent;border-bottom:11.0px solid transparent;border-left:11px solid #6e6e6e;"></div>
<div style="left:670px;top:246.3px;width:364.6px;height:57.3px;background:#f4f4f4;border:1px solid #222;"></div>
<div style="left:683.6px;top:247.3px;width:11.8px;height:55.3px;background:#5e5e5e;"></div>
<div style="left:735.7px;top:247.3px;width:11.8px;height:55.3px;background:#5e5e5e;"></div>
<div style="left:787.8px;top:247.3px;width:11.8px;height:55.3px;background:#5e5e5e;"></div>
<div style="left:826.9px;top:247.3px;width:11.8px;height:55.3px;background:#5e5e5e;"></div>
<div style="left:682.4px;top:246.3px;width:1.2px;height:57.30000000000001px;background:#1a1a1a;"></div>
<div style="left:695.4px;top:246.3px;width:1.2px;height:57.30000000000001px;background:#1a1a1a;"></div>
<div style="left:708.5px;top:246.3px;width:1.2px;height:57.30000000000001px;background:#1a1a1a;"></div>
<div style="left:721.5px;top:246.3px;width:1.2px;height:57.30000000000001px;background:#1a1a1a;"></div>
<div style="left:734.5px;top:246.3px;width:1.2px;height:57.30000000000001px;background:#1a1a1a;"></div>
<div style="left:747.5px;top:246.3px;width:1.2px;height:57.30000000000001px;background:#1a1a1a;"></div>
<div style="left:760.5px;top:246.3px;width:1.2px;height:57.30000000000001px;background:#1a1a1a;"></div>
<div style="left:773.6px;top:246.3px;width:1.2px;height:57.30000000000001px;background:#1a1a1a;"></div>
<div style="left:786.6px;top:246.3px;width:1.2px;height:57.30000000000001px;background:#1a1a1a;"></div>
<div style="left:799.6px;top:246.3px;width:1.2px;height:57.30000000000001px;background:#1a1a1a;"></div>
<div style="left:812.6px;top:246.3px;width:1.2px;height:57.30000000000001px;background:#1a1a1a;"></div>
<div style="left:825.7px;top:246.3px;width:1.2px;height:57.30000000000001px;background:#1a1a1a;"></div>
<div style="left:838.7px;top:246.3px;width:1.2px;height:57.30000000000001px;background:#1a1a1a;"></div>
<div style="left:851.7px;top:246.3px;width:1.2px;height:57.30000000000001px;background:#1a1a1a;"></div>
<div style="left:864.7px;top:246.3px;width:1.2px;height:57.30000000000001px;background:#1a1a1a;"></div>
<div style="left:877.7px;top:246.3px;width:1.2px;height:57.30000000000001px;background:#1a1a1a;"></div>
<div style="left:890.8px;top:246.3px;width:1.2px;height:57.30000000000001px;background:#1a1a1a;"></div>
<div style="left:903.8px;top:246.3px;width:1.2px;height:57.30000000000001px;background:#1a1a1a;"></div>
<div style="left:916.8px;top:246.3px;width:1.2px;height:57.30000000000001px;background:#1a1a1a;"></div>
<div style="left:929.8px;top:246.3px;width:1.2px;height:57.30000000000001px;background:#1a1a1a;"></div>
<div style="left:942.8px;top:246.3px;width:1.2px;height:57.30000000000001px;background:#1a1a1a;"></div>
<div style="left:955.9px;top:246.3px;width:1.2px;height:57.30000000000001px;background:#1a1a1a;"></div>
<div style="left:968.9px;top:246.3px;width:1.2px;height:57.30000000000001px;background:#1a1a1a;"></div>
<div style="left:981.9px;top:246.3px;width:1.2px;height:57.30000000000001px;background:#1a1a1a;"></div>
<div style="left:994.9px;top:246.3px;width:1.2px;height:57.30000000000001px;background:#1a1a1a;"></div>
<div style="left:1008.0px;top:246.3px;width:1.2px;height:57.30000000000001px;background:#1a1a1a;"></div>
<div style="left:1021.0px;top:246.3px;width:1.2px;height:57.30000000000001px;background:#1a1a1a;"></div>
<div style="left:678.7px;top:246.3px;width:8.6px;height:32.9px;background:#1a1a1a;"></div>
<div style="left:691.7px;top:246.3px;width:8.6px;height:32.9px;background:#1a1a1a;"></div>
<div style="left:717.8px;top:246.3px;width:8.6px;height:32.9px;background:#1a1a1a;"></div>
<div style="left:730.8px;top:246.3px;width:8.6px;height:32.9px;background:#1a1a1a;"></div>
<div style="left:743.8px;top:246.3px;width:8.6px;height:32.9px;background:#1a1a1a;"></div>
<div style="left:769.9px;top:246.3px;width:8.6px;height:32.9px;background:#1a1a1a;"></div>
<div style="left:782.9px;top:246.3px;width:8.6px;height:32.9px;background:#1a1a1a;"></div>
<div style="left:808.9px;top:246.3px;width:8.6px;height:32.9px;background:#1a1a1a;"></div>
<div style="left:822.0px;top:246.3px;width:8.6px;height:32.9px;background:#1a1a1a;"></div>
<div style="left:835.0px;top:246.3px;width:8.6px;height:32.9px;background:#1a1a1a;"></div>
<div style="left:861.0px;top:246.3px;width:8.6px;height:32.9px;background:#1a1a1a;"></div>
<div style="left:874.0px;top:246.3px;width:8.6px;height:32.9px;background:#1a1a1a;"></div>
<div style="left:900.1px;top:246.3px;width:8.6px;height:32.9px;background:#1a1a1a;"></div>
<div style="left:913.1px;top:246.3px;width:8.6px;height:32.9px;background:#1a1a1a;"></div>
<div style="left:926.1px;top:246.3px;width:8.6px;height:32.9px;background:#1a1a1a;"></div>
<div style="left:952.2px;top:246.3px;width:8.6px;height:32.9px;background:#1a1a1a;"></div>
<div style="left:965.2px;top:246.3px;width:8.6px;height:32.9px;background:#1a1a1a;"></div>
<div style="left:991.2px;top:246.3px;width:8.6px;height:32.9px;background:#1a1a1a;"></div>
<div style="left:1004.3px;top:246.3px;width:8.6px;height:32.9px;background:#1a1a1a;"></div>
<div style="left:1017.3px;top:246.3px;width:8.6px;height:32.9px;background:#1a1a1a;"></div>
<div style="left:674.0px;top:304.1px;font-size:11.55px;line-height:13.9px;color:#9a9a9a;white-space:pre;transform:scaleX(0.984);transform-origin:0 0;">Gain</div>
<div style="left:672.3px;top:315.2px;width:46.4px;height:22.4px;background:#0c0c0c;"></div>
<div style="left:675.0px;top:320.9px;width:0;height:0;border-top:5.5px solid transparent;border-bottom:5.5px solid transparent;border-left:5px solid #707070;"></div>
<div style="left:684.0px;top:319.2px;font-size:13.65px;line-height:16.4px;color:#f0f0f0;white-space:pre;transform:scaleX(0.941);transform-origin:0 0;">25.5</div>
<div style="left:734.0px;top:305.1px;font-size:11.55px;line-height:13.9px;color:#3a3a3a;white-space:pre;transform:scaleX(1.021);transform-origin:0 0;">Oct. +/-</div>
<div style="left:730.3px;top:316.4px;width:58.5px;height:23.0px;background:#1e1e1e;"></div>
<div style="left:734.0px;top:322.4px;width:0;height:0;border-top:5.5px solid transparent;border-bottom:5.5px solid transparent;border-left:5px solid #707070;"></div>
<div style="left:742.0px;top:322.4px;font-size:11px;line-height:13.2px;color:#f0f0f0;white-space:pre;font-family:"Liberation Mono",monospace;">0</div>
<div style="left:677.0px;top:336.6px;font-size:11.55px;line-height:13.9px;color:#9a9a9a;white-space:pre;transform:scaleX(0.890);transform-origin:0 0;">Q</div>
<div style="left:672.3px;top:349.4px;width:46.4px;height:22.3px;background:#1e1e1e;"></div>
<div style="left:675.0px;top:355.0px;width:0;height:0;border-top:5.5px solid transparent;border-bottom:5.5px solid transparent;border-left:5px solid #707070;"></div>
<div style="left:684.0px;top:353.4px;font-size:13.65px;line-height:16.4px;color:#f0f0f0;white-space:pre;transform:scaleX(0.941);transform-origin:0 0;">25.5</div>
<div style="left:721.4px;top:361.5px;font-size:12.6px;line-height:15.1px;color:#3a3a3a;white-space:pre;transform:scaleX(0.932);transform-origin:0 0;">Choose Output</div>
<div style="left:670px;top:373.3px;width:145.6px;height:21.9px;background:#1e1e1e;"></div>
<svg style="position:absolute;left:675.5px;top:379px" width="11" height="11" viewBox="0 0 11 11"><path d="M0.5 0.5L10.5 10.5M10.5 0.5L0.5 10.5" stroke="#6a6a6a" stroke-width="1.6"/></svg>
<div style="left:699.0px;top:377.2px;font-size:13.12px;line-height:15.7px;color:#f0f0f0;white-space:pre;transform:scaleX(0.923);transform-origin:0 0;">Master</div>
<div style="left:743.5px;top:381.0px;width:0;height:0;border-left:4.0px solid transparent;border-right:4.0px solid transparent;border-top:5px solid #fff;"></div>
<div style="left:765.0px;top:377.2px;font-size:13.12px;line-height:15.7px;color:#f0f0f0;white-space:pre;transform:scaleX(0.946);transform-origin:0 0;">Out</div>
<div style="left:800.0px;top:381.0px;width:0;height:0;border-left:4.0px solid transparent;border-right:4.0px solid transparent;border-top:5px solid #fff;"></div>
<div style="left:828.6px;top:314.3px;width:49.1px;height:81.3px;background:#161616;border-radius:4px;border:1px solid #2a2a2a;"></div>
<div style="left:844.5px;top:317.8px;font-size:12.08px;line-height:14.5px;color:#5fd6c8;white-space:pre;transform:scaleX(1.012);transform-origin:0 0;">Vol</div>
<svg style="position:absolute;left:833px;top:336px" width="40" height="40" viewBox="0 0 40 40"><path d="M8.9 33.1 A17 17 0 1 1 31.1 33.1" fill="none" stroke="#5fd6c8" stroke-width="2.8"/><line x1="20" y1="20" x2="6.5" y2="15" stroke="#5fd6c8" stroke-width="2.8"/></svg>
<div style="left:834.0px;top:379.5px;width:0;height:0;border-top:4.5px solid transparent;border-bottom:4.5px solid transparent;border-left:4px solid #5fd6c8;"></div>
<div style="left:840.0px;top:378.7px;font-size:10.5px;line-height:12.6px;color:#5fd6c8;white-space:pre;font-weight:bold;transform:scaleX(0.950);transform-origin:0 0;font-family:"Liberation Mono",monospace;">0.56</div>
<div style="left:911px;top:305.4px;width:21px;height:67.9px;background:#262626;"></div>
<div style="left:918.2px;top:316.5px;font-size:10px;line-height:12.0px;color:#d0d0d0;white-space:pre;">A</div>
<div style="left:917.9px;top:328.3px;font-size:10px;line-height:12.0px;color:#d0d0d0;white-space:pre;">D</div>
<div style="left:918.2px;top:340.1px;font-size:10px;line-height:12.0px;color:#d0d0d0;white-space:pre;">S</div>
<div style="left:917.9px;top:351.9px;font-size:10px;line-height:12.0px;color:#d0d0d0;white-space:pre;">R</div>
<div style="left:932.8px;top:305.4px;width:101.2px;height:64.6px;background:#0e0e0e;"></div>
<div style="left:986px;top:305.4px;width:19px;height:64.6px;background:#cfe6ec;"></div>
<div style="left:961px;top:357px;width:25px;height:13px;background:#cfe6ec;"></div>
<div style="left:968.0px;top:358.4px;font-size:11px;line-height:13.2px;color:#444;white-space:pre;">D</div>
<div style="left:988.0px;top:359.5px;font-size:10px;line-height:12.0px;color:#555;white-space:pre;">S</div>
<div style="left:935px;top:368px;width:97px;height:2px;background:#cfe6ec;;opacity:0.25"></div>
<div style="left:889.3px;top:373.3px;width:145.7px;height:22.3px;background:#1e1e1e;"></div>
<svg style="position:absolute;left:895px;top:379px" width="11" height="11" viewBox="0 0 11 11"><path d="M0.5 0.5L10.5 10.5M10.5 0.5L0.5 10.5" stroke="#6a6a6a" stroke-width="1.6"/></svg>
<div style="left:917.0px;top:377.2px;font-size:13.12px;line-height:15.7px;color:#f0f0f0;white-space:pre;transform:scaleX(0.857);transform-origin:0 0;">S</div>
<div style="left:962.0px;top:381.0px;width:0;height:0;border-left:4.0px solid transparent;border-right:4.0px solid transparent;border-top:5px solid #fff;"></div>
<div style="left:983.5px;top:377.2px;font-size:13.12px;line-height:15.7px;color:#f0f0f0;white-space:pre;transform:scaleX(0.822);transform-origin:0 0;">1</div>
<div style="left:1019.0px;top:381.0px;width:0;height:0;border-left:4.0px solid transparent;border-right:4.0px solid transparent;border-top:5px solid #fff;"></div>
<div style="left:290px;top:402.3px;width:135.8px;height:22.3px;background:#1e1e1e;"></div>
<div style="left:311.0px;top:405.8px;font-size:13.65px;line-height:16.4px;color:#f2f2f2;white-space:pre;transform:scaleX(0.875);transform-origin:0 0;">LFO Automator</div>
<div style="left:409.9px;top:411.0px;width:0;height:0;border-left:4.5px solid transparent;border-right:4.5px solid transparent;border-top:5px solid #fff;"></div>
<div style="left:433.4px;top:402px;width:218.2px;height:22.6px;background:#262626;border:2px solid #858585;"></div>
<div style="left:437.9px;top:405.7px;font-size:13.65px;line-height:16.4px;color:#f2f2f2;white-space:pre;transform:scaleX(0.957);transform-origin:0 0;">LFO Automator 561</div>
<div style="left:287.3px;top:432px;width:368.7px;height:262.5px;border:2px solid #868a8d;border-radius:6px;"></div>
<div style="left:352px;top:440.2px;width:205.8px;height:19.5px;background:#1e1e1e;"></div>
<div style="left:357.0px;top:444.2px;font-size:11.03px;line-height:13.2px;color:#e8e8e8;white-space:pre;transform:scaleX(0.841);transform-origin:0 0;">-------- Choose Preset --------</div>
<div style="left:487.0px;top:447.4px;width:0;height:0;border-left:4.5px solid transparent;border-right:4.5px solid transparent;border-top:5px solid #fff;"></div>
<div style="left:506.0px;top:444.9px;width:0;height:0;border-top:5.0px solid transparent;border-bottom:5.0px solid transparent;border-left:5px solid #7a7a7a;"></div>
<div style="left:513.5px;top:444.4px;font-size:11.03px;line-height:13.2px;color:#e8e8e8;white-space:pre;transform:scaleX(0.870);transform-origin:0 0;">0.</div>
<div style="left:547.3px;top:444.4px;font-size:11.03px;line-height:13.2px;color:#fff;white-space:pre;font-weight:bold;transform:scaleX(1.019);transform-origin:0 0;">S</div>
<div style="left:569.2px;top:439px;width:22.8px;height:21.7px;background:#2b2b2b;"></div>
<div style="left:577.3px;top:440.7px;font-size:8px;line-height:9.6px;color:#707070;white-space:pre;">M</div>
<div style="left:572.6px;top:450.2px;font-size:8px;line-height:9.6px;color:#707070;white-space:pre;">OFF</div>
<div style="left:296px;top:464px;width:177.4px;height:22.6px;background:#5fd6c8;"></div>
<div style="left:350.1px;top:468.2px;font-size:13.12px;line-height:15.7px;color:#3a7a74;white-space:pre;transform:scaleX(0.861);transform-origin:0 0;">LFO DESIGN</div>
<div style="left:473.4px;top:464px;width:176.3px;height:22.6px;background:#1c1c1c;"></div>
<div style="left:533.4px;top:468.2px;font-size:13.12px;line-height:15.7px;color:#5fd6c8;white-space:pre;transform:scaleX(0.892);transform-origin:0 0;">CONTROL</div>
<div style="left:325.6px;top:496.7px;font-size:11.03px;line-height:13.2px;color:#3a3a3a;white-space:pre;transform:scaleX(0.857);transform-origin:0 0;">LFO Toggle</div>
<div style="left:402.2px;top:496.7px;font-size:11.03px;line-height:13.2px;color:#3a3a3a;white-space:pre;transform:scaleX(0.825);transform-origin:0 0;">Shape</div>
<div style="left:454.6px;top:496.7px;font-size:11.03px;line-height:13.2px;color:#3a3a3a;white-space:pre;transform:scaleX(0.860);transform-origin:0 0;">Beat Source</div>
<div style="left:533.3px;top:496.7px;font-size:11.03px;line-height:13.2px;color:#3a3a3a;white-space:pre;transform:scaleX(0.883);transform-origin:0 0;">Subdivision</div>
<div style="left:608.0px;top:496.7px;font-size:11.03px;line-height:13.2px;color:#3a3a3a;white-space:pre;transform:scaleX(0.917);transform-origin:0 0;">Depth</div>
<div style="left:294.5px;top:514.5px;font-size:9.5px;line-height:11.4px;color:#3a3a3a;white-space:pre;transform:scaleX(0.950);transform-origin:0 0;">1 -</div>
<div style="left:294.5px;top:526.5px;font-size:9.5px;line-height:11.4px;color:#3a3a3a;white-space:pre;transform:scaleX(0.950);transform-origin:0 0;">5</div>
<div style="left:315.2px;top:514.2px;width:71.6px;height:21.5px;background:linear-gradient(#2e2e2e,#1b1b1b);"></div>
<div style="left:324.9px;top:517.3px;font-size:13.65px;line-height:16.4px;color:#f0f0f0;white-space:pre;transform:scaleX(0.839);transform-origin:0 0;">LFO 1 ON</div>
<div style="left:389.3px;top:514.2px;width:52.4px;height:21.5px;background:#1e1e1e;"></div>
<div style="left:394.7px;top:517.3px;font-size:13.65px;line-height:16.4px;color:#f0f0f0;white-space:pre;transform:scaleX(0.787);transform-origin:0 0;">sine</div>
<div style="left:426.5px;top:522.5px;width:0;height:0;border-left:4.5px solid transparent;border-right:4.5px solid transparent;border-top:5px solid #fff;"></div>
<div style="left:445.9px;top:514.2px;width:69.8px;height:21.5px;background:linear-gradient(#2e2e2e,#1b1b1b);"></div>
<div style="left:462.2px;top:517.9px;font-size:12.6px;line-height:15.1px;color:#f0f0f0;white-space:pre;transform:scaleX(0.859);transform-origin:0 0;">Custom</div>
<div style="left:519px;top:514.2px;width:81.8px;height:21.5px;background:#1e1e1e;"></div>
<div style="left:525.3px;top:517.9px;font-size:12.6px;line-height:15.1px;color:#f0f0f0;white-space:pre;transform:scaleX(0.865);transform-origin:0 0;">Eighth</div>
<div style="left:585.9px;top:522.5px;width:0;height:0;border-left:4.5px solid transparent;border-right:4.5px solid transparent;border-top:5px solid #fff;"></div>
<svg style="position:absolute;left:603px;top:507.45000000000005px" width="36" height="36" viewBox="0 0 36 36"><circle cx="18" cy="18" r="16.5" fill="#141c1b"/><path d="M10.75 30.56 A14.5 14.5 0 1 1 21.75 32" fill="none" stroke="#5fd6c8" stroke-width="2.3"/><line x1="16.5" y1="21" x2="21.5" y2="32" stroke="#5fd6c8" stroke-width="1.8"/></svg>
<div style="left:611.0px;top:518.4px;font-size:11px;line-height:13.2px;color:#5fd6c8;white-space:pre;font-weight:bold;transform:scaleX(1.074);transform-origin:0 0;font-family:"Liberation Mono",monospace;">1.00</div>
<div style="left:294.5px;top:551.7px;font-size:9.5px;line-height:11.4px;color:#3a3a3a;white-space:pre;transform:scaleX(0.950);transform-origin:0 0;">6 -</div>
<div style="left:294.5px;top:563.7px;font-size:9.5px;line-height:11.4px;color:#3a3a3a;white-space:pre;transform:scaleX(0.950);transform-origin:0 0;">10</div>
<div style="left:315.2px;top:551.4px;width:71.6px;height:21.5px;background:linear-gradient(#2e2e2e,#1b1b1b);"></div>
<div style="left:324.9px;top:554.5px;font-size:13.65px;line-height:16.4px;color:#f0f0f0;white-space:pre;transform:scaleX(0.839);transform-origin:0 0;">LFO 2 ON</div>
<div style="left:389.3px;top:551.4px;width:52.4px;height:21.5px;background:#1e1e1e;"></div>
<div style="left:394.7px;top:554.5px;font-size:13.65px;line-height:16.4px;color:#f0f0f0;white-space:pre;transform:scaleX(0.694);transform-origin:0 0;">voi...</div>
<div style="left:426.5px;top:559.6px;width:0;height:0;border-left:4.5px solid transparent;border-right:4.5px solid transparent;border-top:5px solid #fff;"></div>
<div style="left:445.9px;top:551.4px;width:69.8px;height:21.5px;background:linear-gradient(#2e2e2e,#1b1b1b);"></div>
<div style="left:462.2px;top:555.1px;font-size:12.6px;line-height:15.1px;color:#f0f0f0;white-space:pre;transform:scaleX(0.859);transform-origin:0 0;">Custom</div>
<div style="left:519px;top:551.4px;width:81.8px;height:21.5px;background:#1e1e1e;"></div>
<div style="left:525.3px;top:555.1px;font-size:12.6px;line-height:15.1px;color:#f0f0f0;white-space:pre;transform:scaleX(0.865);transform-origin:0 0;">Eighth</div>
<div style="left:585.9px;top:559.6px;width:0;height:0;border-left:4.5px solid transparent;border-right:4.5px solid transparent;border-top:5px solid #fff;"></div>
<svg style="position:absolute;left:603px;top:544.65px" width="36" height="36" viewBox="0 0 36 36"><circle cx="18" cy="18" r="16.5" fill="#141c1b"/><path d="M10.75 30.56 A14.5 14.5 0 1 1 21.75 32" fill="none" stroke="#5fd6c8" stroke-width="2.3"/><line x1="16.5" y1="21" x2="21.5" y2="32" stroke="#5fd6c8" stroke-width="1.8"/></svg>
<div style="left:611.0px;top:555.6px;font-size:11px;line-height:13.2px;color:#5fd6c8;white-space:pre;font-weight:bold;transform:scaleX(1.074);transform-origin:0 0;font-family:"Liberation Mono",monospace;">1.00</div>
<div style="left:294.5px;top:589.6px;font-size:9.5px;line-height:11.4px;color:#3a3a3a;white-space:pre;transform:scaleX(0.950);transform-origin:0 0;">11 -</div>
<div style="left:294.5px;top:601.6px;font-size:9.5px;line-height:11.4px;color:#3a3a3a;white-space:pre;transform:scaleX(0.950);transform-origin:0 0;">15</div>
<div style="left:315.2px;top:589.3px;width:71.6px;height:21.5px;background:linear-gradient(#2e2e2e,#1b1b1b);"></div>
<div style="left:324.9px;top:592.4px;font-size:13.65px;line-height:16.4px;color:#f0f0f0;white-space:pre;transform:scaleX(0.839);transform-origin:0 0;">LFO 3 ON</div>
<div style="left:389.3px;top:589.3px;width:52.4px;height:21.5px;background:#1e1e1e;"></div>
<div style="left:394.7px;top:592.4px;font-size:13.65px;line-height:16.4px;color:#f0f0f0;white-space:pre;transform:scaleX(0.694);transform-origin:0 0;">voi...</div>
<div style="left:426.5px;top:597.5px;width:0;height:0;border-left:4.5px solid transparent;border-right:4.5px solid transparent;border-top:5px solid #fff;"></div>
<div style="left:445.9px;top:589.3px;width:69.8px;height:21.5px;background:linear-gradient(#2e2e2e,#1b1b1b);"></div>
<div style="left:462.2px;top:593.0px;font-size:12.6px;line-height:15.1px;color:#f0f0f0;white-space:pre;transform:scaleX(0.859);transform-origin:0 0;">Custom</div>
<div style="left:519px;top:589.3px;width:81.8px;height:21.5px;background:#1e1e1e;"></div>
<div style="left:525.3px;top:593.0px;font-size:12.6px;line-height:15.1px;color:#f0f0f0;white-space:pre;transform:scaleX(0.865);transform-origin:0 0;">Eighth</div>
<div style="left:585.9px;top:597.5px;width:0;height:0;border-left:4.5px solid transparent;border-right:4.5px solid transparent;border-top:5px solid #fff;"></div>
<svg style="position:absolute;left:603px;top:582.55px" width="36" height="36" viewBox="0 0 36 36"><circle cx="18" cy="18" r="16.5" fill="#141c1b"/><path d="M10.75 30.56 A14.5 14.5 0 1 1 21.75 32" fill="none" stroke="#5fd6c8" stroke-width="2.3"/><line x1="16.5" y1="21" x2="21.5" y2="32" stroke="#5fd6c8" stroke-width="1.8"/></svg>
<div style="left:611.0px;top:593.5px;font-size:11px;line-height:13.2px;color:#5fd6c8;white-space:pre;font-weight:bold;transform:scaleX(1.074);transform-origin:0 0;font-family:"Liberation Mono",monospace;">1.00</div>
<div style="left:319.4px;top:628.2px;font-size:11.03px;line-height:13.2px;color:#3a3a3a;white-space:pre;transform:scaleX(0.878);transform-origin:0 0;">16. Custom BPM</div>
<div style="left:315.2px;top:649.3px;width:83.6px;height:22.4px;background:#1e1e1e;"></div>
<div style="left:319.0px;top:655.0px;width:0;height:0;border-top:5.5px solid transparent;border-bottom:5.5px solid transparent;border-left:5px solid #707070;"></div>
<div style="left:327.3px;top:653.4px;font-size:13.65px;line-height:16.4px;color:#f0f0f0;white-space:pre;transform:scaleX(0.843);transform-origin:0 0;">60.</div>
<div style="left:428.0px;top:628.2px;font-size:11.03px;line-height:13.2px;color:#3a3a3a;white-space:pre;transform:scaleX(0.875);transform-origin:0 0;">17. View LFO</div>
<div style="left:405px;top:649.3px;width:104px;height:22.4px;background:#1e1e1e;"></div>
<div style="left:443.9px;top:652.9px;font-size:13.65px;line-height:16.4px;color:#f0f0f0;white-space:pre;transform:scaleX(0.890);transform-origin:0 0;">All</div>
<div style="left:493.2px;top:658.0px;width:0;height:0;border-left:4.5px solid transparent;border-right:4.5px solid transparent;border-top:5px solid #fff;"></div>
<div style="left:515px;top:625px;width:127.8px;height:58.5px;background:#000;"></div>
<div style="left:531.5px;top:625px;width:1px;height:58.5px;background:#5a5a5a;"></div>
<div style="left:547.5px;top:625px;width:1px;height:58.5px;background:#5a5a5a;"></div>
<div style="left:563.6px;top:625px;width:1px;height:58.5px;background:#5a5a5a;"></div>
<div style="left:579.6px;top:625px;width:1px;height:58.5px;background:#5a5a5a;"></div>
<div style="left:595.6px;top:625px;width:1px;height:58.5px;background:#5a5a5a;"></div>
<div style="left:611.7px;top:625px;width:1px;height:58.5px;background:#5a5a5a;"></div>
<div style="left:627.7px;top:625px;width:1px;height:58.5px;background:#5a5a5a;"></div>
<div style="left:515px;top:639.5px;width:127.8px;height:1px;background:#5a5a5a;"></div>
<div style="left:515px;top:654px;width:127.8px;height:1px;background:#5a5a5a;"></div>
<div style="left:515px;top:668.5px;width:127.8px;height:1px;background:#5a5a5a;"></div>
<svg style="position:absolute;left:515px;top:625px" width="128" height="59" viewBox="0 0 128 59"><polyline points="0,17.6 16.6,14 32.5,11 49,9.3 64.7,9.5 74,10.8 81.3,14.5 88.6,20.3 96.8,25.9 107,31 117.5,33 128,36" fill="none" stroke="#cfcfcf" stroke-width="1.8" stroke-linejoin="round"/></svg>
<div style="left:287.3px;top:699.7px;width:369.0px;height:22.8px;border:2px solid #8f9396;border-radius:5px;"></div>
<div style="left:435.6px;top:705.3px;width:0;height:0;border-left:11.4px solid transparent;border-right:11.4px solid transparent;border-top:12px solid #6a6a6a;"></div>
<div style="left:467.6px;top:705.3px;width:0;height:0;border-left:11.4px solid transparent;border-right:11.4px solid transparent;border-top:12px solid #6a6a6a;"></div>
<div style="left:501.4px;top:705.3px;width:0;height:0;border-left:11.4px solid transparent;border-right:11.4px solid transparent;border-top:12px solid #6a6a6a;"></div>
<div style="left:670px;top:402.4px;width:135.8px;height:22.3px;background:#1e1e1e;"></div>
<div style="left:699.0px;top:405.9px;font-size:13.65px;line-height:16.4px;color:#f2f2f2;white-space:pre;transform:scaleX(0.848);transform-origin:0 0;">SpectraView</div>
<div style="left:789.9px;top:411.0px;width:0;height:0;border-left:4.5px solid transparent;border-right:4.5px solid transparent;border-top:5px solid #fff;"></div>
<div style="left:813.4px;top:402.2px;width:218.3px;height:22.5px;background:#262626;border:2px solid #858585;"></div>
<div style="left:817.9px;top:405.8px;font-size:13.65px;line-height:16.4px;color:#f2f2f2;white-space:pre;transform:scaleX(0.942);transform-origin:0 0;">SpectraView 643</div>
<div style="left:666.7px;top:431.8px;width:369.3px;height:263.2px;border:2px solid #868a8d;border-radius:6px;"></div>
<div style="left:1040.2px;top:432.5px;width:21.7px;height:261.5px;border:1.5px solid #9a9a9a;border-radius:2px;"></div>
<div style="left:1046.0px;top:525.8px;width:0;height:0;border-top:11.0px solid transparent;border-bottom:11.0px solid transparent;border-left:11px solid #5fd6c8;"></div>
<div style="left:1046.0px;top:551.5px;width:0;height:0;border-top:11.0px solid transparent;border-bottom:11.0px solid transparent;border-left:11px solid #5fd6c8;"></div>
<div style="left:1046.0px;top:580.0px;width:0;height:0;border-top:11.0px solid transparent;border-bottom:11.0px solid transparent;border-left:11px solid #5fd6c8;"></div>
<div style="left:684.6px;top:434.3px;font-size:12.08px;line-height:14.5px;color:#3a3a3a;white-space:pre;transform:scaleX(0.938);transform-origin:0 0;">1. Choose Input</div>
<div style="left:675px;top:444px;width:132.8px;height:22.9px;background:#1e1e1e;"></div>
<svg style="position:absolute;left:681.5px;top:449.5px" width="11.5" height="11.5" viewBox="0 0 11.5 11.5"><path d="M0.5 0.5L11.0 11.0M11.0 0.5L0.5 11.0" stroke="#6a6a6a" stroke-width="1.6"/></svg>
<div style="left:704.2px;top:448.5px;font-size:13.12px;line-height:15.7px;color:#f0f0f0;white-space:pre;transform:scaleX(0.857);transform-origin:0 0;">S</div>
<div style="left:742.4px;top:452.5px;width:0;height:0;border-left:4.0px solid transparent;border-right:4.0px solid transparent;border-top:5px solid #fff;"></div>
<div style="left:763.8px;top:448.5px;font-size:13.12px;line-height:15.7px;color:#f0f0f0;white-space:pre;transform:scaleX(0.822);transform-origin:0 0;">1</div>
<div style="left:792.2px;top:452.5px;width:0;height:0;border-left:4.0px solid transparent;border-right:4.0px solid transparent;border-top:5px solid #fff;"></div>
<div style="left:824px;top:445.2px;width:206px;height:19.7px;background:#1e1e1e;"></div>
<div style="left:829.0px;top:449.2px;font-size:11.03px;line-height:13.2px;color:#e8e8e8;white-space:pre;transform:scaleX(0.841);transform-origin:0 0;">-------- Choose Preset --------</div>
<div style="left:959.1px;top:452.5px;width:0;height:0;border-left:4.5px solid transparent;border-right:4.5px solid transparent;border-top:5px solid #fff;"></div>
<div style="left:978.0px;top:450.0px;width:0;height:0;border-top:5.0px solid transparent;border-bottom:5.0px solid transparent;border-left:5px solid #7a7a7a;"></div>
<div style="left:985.5px;top:449.4px;font-size:11.03px;line-height:13.2px;color:#e8e8e8;white-space:pre;transform:scaleX(0.870);transform-origin:0 0;">0.</div>
<div style="left:1016.8px;top:449.4px;font-size:11.03px;line-height:13.2px;color:#fff;white-space:pre;font-weight:bold;transform:scaleX(1.019);transform-origin:0 0;">S</div>
<div style="left:675px;top:475px;width:355px;height:92.8px;background:#000;"></div>
<div style="left:675.0px;top:475px;width:5.4px;height:92.79999999999995px;background:linear-gradient(#000 0.0%,#000 18.0%,#000000 19.2%,#07010b 21.7%,#07010b 24.2%,#13041e 26.7%,#170523 29.2%,#29093c 31.6%,#5e1a7e 34.1%,#5a187a 36.6%,#5e3b98 39.1%,#44ba70 41.5%,#1f9e89 44.0%,#f2a921 46.5%,#c8c730 49.0%,#efae22 51.5%,#cac730 53.9%,#bcc835 56.4%,#bac836 58.9%,#bac836 61.0%,#32b47c 61.1%,#54bf67 85.0%,#6dc558 100.0%)"></div><div style="left:680.0px;top:475px;width:5.4px;height:92.79999999999995px;background:linear-gradient(#000 0.0%,#000 18.0%,#000000 19.2%,#010002 21.7%,#0a020f 24.2%,#1a0628 26.7%,#230833 29.2%,#310c46 31.6%,#4b1368 34.1%,#73259a 36.6%,#621b82 39.1%,#722095 41.5%,#44ba70 44.0%,#c1c833 46.5%,#b2c939 49.0%,#85cc4b 51.5%,#adc93b 53.9%,#66c35d 56.4%,#7cc950 58.9%,#7cc950 61.0%,#32b47c 61.1%,#5fc261 85.0%,#6dc558 100.0%)"></div><div style="left:685.0px;top:475px;width:5.4px;height:92.79999999999995px;background:linear-gradient(#000 0.0%,#000 18.0%,#06010a 19.2%,#050107 21.7%,#100319 24.2%,#170523 26.7%,#28093b 29.2%,#360d4d 31.6%,#641c85 34.1%,#712095 36.6%,#71279a 39.1%,#44ba70 41.5%,#30b17d 44.0%,#e5c025 46.5%,#e9b924 49.0%,#c8c730 51.5%,#e3c326 53.9%,#b1c939 56.4%,#c8c730 58.9%,#c8c730 61.0%,#25a584 61.1%,#31b27c 85.0%,#3cb875 100.0%)"></div><div style="left:690.0px;top:475px;width:5.4px;height:92.79999999999995px;background:linear-gradient(#000 0.0%,#000 18.0%,#010002 19.2%,#030104 21.7%,#0c0213 24.2%,#11031a 26.7%,#190526 29.2%,#350d4c 31.6%,#581877 34.1%,#722196 36.6%,#611b82 39.1%,#27a883 41.5%,#27a883 44.0%,#abc93c 46.5%,#6ec658 49.0%,#bcc835 51.5%,#6ac55a 53.9%,#72c756 56.4%,#68c45c 58.9%,#68c45c 61.0%,#6dc558 61.1%,#a1ca40 85.0%,#b9c836 100.0%)"></div><div style="left:695.0px;top:475px;width:5.4px;height:92.79999999999995px;background:linear-gradient(#000 0.0%,#000 18.0%,#030105 19.2%,#0a020f 21.7%,#08020c 24.2%,#220832 26.7%,#2f0b44 29.2%,#451162 31.6%,#471264 34.1%,#541673 36.6%,#581878 39.1%,#27a883 41.5%,#44ba70 44.0%,#a1ca40 46.5%,#b3c938 49.0%,#96cb44 51.5%,#7eca4f 53.9%,#8acc49 56.4%,#85cc4a 58.9%,#85cc4a 61.0%,#6dc558 61.1%,#9bca42 85.0%,#b9c836 100.0%)"></div><div style="left:700.0px;top:475px;width:5.4px;height:92.79999999999995px;background:linear-gradient(#000 0.0%,#000 18.0%,#000000 19.2%,#020003 21.7%,#11031b 24.2%,#220832 26.7%,#20072f 29.2%,#310c47 31.6%,#350d4c 34.1%,#51156f 36.6%,#51156f 39.1%,#722095 41.5%,#30b17d 44.0%,#9fca40 46.5%,#c8c730 49.0%,#93cb45 51.5%,#acc93b 53.9%,#d6c62b 56.4%,#cbc72f 58.9%,#cbc72f 61.0%,#4dbd6c 61.1%,#7fca4e 85.0%,#90cb46 100.0%)"></div><div style="left:705.0px;top:475px;width:5.4px;height:92.79999999999995px;background:linear-gradient(#000 0.0%,#000 18.0%,#020003 19.2%,#07010a 21.7%,#0e0316 24.2%,#150420 26.7%,#2b0a3e 29.2%,#3a0e54 31.6%,#3a0e52 34.1%,#6d1f8f 36.6%,#621b83 39.1%,#1f9e89 41.5%,#30b17d 44.0%,#c0c833 46.5%,#a4ca3e 49.0%,#cec72e 51.5%,#9bca42 53.9%,#c6c731 56.4%,#bec834 58.9%,#bec834 61.0%,#86cc4a 61.1%,#bac836 85.0%,#d8c62a 100.0%)"></div><div style="left:710.0px;top:475px;width:5.4px;height:92.79999999999995px;background:linear-gradient(#000 0.0%,#000 18.0%,#030104 19.2%,#0c0212 21.7%,#11031a 24.2%,#12041c 26.7%,#250937 29.2%,#3b0e54 31.6%,#491266 34.1%,#691e8b 36.6%,#5f1a80 39.1%,#30b17d 41.5%,#1f9e89 44.0%,#e7bd25 46.5%,#ebb624 49.0%,#cdc72e 51.5%,#b5c838 53.9%,#e3c326 56.4%,#d3c62c 58.9%,#d3c62c 61.0%,#86cc4a 61.1%,#b4c838 85.0%,#d8c62a 100.0%)"></div><div style="left:715.0px;top:475px;width:5.4px;height:92.79999999999995px;background:linear-gradient(#000 0.0%,#000 18.0%,#030104 19.2%,#08020c 21.7%,#0c0213 24.2%,#1f072e 26.7%,#14041f 29.2%,#320c48 31.6%,#50156f 34.1%,#461162 36.6%,#4d146b 39.1%,#27a883 41.5%,#27a883 44.0%,#a8c93d 46.5%,#bac835 49.0%,#d8c62a 51.5%,#d6c62b 53.9%,#aec93a 56.4%,#c2c732 58.9%,#c2c732 61.0%,#32b47c 61.1%,#61c260 85.0%,#6dc558 100.0%)"></div><div style="left:720.0px;top:475px;width:5.4px;height:92.79999999999995px;background:linear-gradient(#000 0.0%,#000 18.0%,#010002 19.2%,#0b0211 21.7%,#11031b 24.2%,#0e0315 26.7%,#14041f 29.2%,#310c47 31.6%,#4f156d 34.1%,#691d8b 36.6%,#4e146b 39.1%,#1f9e89 41.5%,#722095 44.0%,#abc93c 46.5%,#e4c225 49.0%,#dbc629 51.5%,#bdc835 53.9%,#d8c62a 56.4%,#e1c526 58.9%,#e1c526 61.0%,#86cc4a 61.1%,#b1c939 85.0%,#d8c62a 100.0%)"></div><div style="left:725.0px;top:475px;width:5.4px;height:92.79999999999995px;background:linear-gradient(#000 0.0%,#000 18.0%,#050107 19.2%,#0c0213 21.7%,#0c0212 24.2%,#14041f 26.7%,#200730 29.2%,#310c47 31.6%,#400f5b 34.1%,#591879 36.6%,#6b1e8d 39.1%,#30b17d 41.5%,#722095 44.0%,#e9b924 46.5%,#b9c836 49.0%,#d2c62c 51.5%,#b7c837 53.9%,#b4c838 56.4%,#adc93b 58.9%,#adc93b 61.0%,#21a088 61.1%,#2eaf7e 85.0%,#32b47b 100.0%)"></div><div style="left:730.0px;top:475px;width:5.4px;height:92.79999999999995px;background:linear-gradient(#000 0.0%,#000 18.0%,#000000 19.2%,#09020f 21.7%,#0f0317 24.2%,#0e0315 26.7%,#2d0b42 29.2%,#41105c 31.6%,#581878 34.1%,#5a187a 36.6%,#712095 39.1%,#44ba70 41.5%,#722095 44.0%,#cec72e 46.5%,#d0c62d 49.0%,#c9c730 51.5%,#99cb43 53.9%,#b2c939 56.4%,#afc93a 58.9%,#afc93a 61.0%,#4dbd6c 61.1%,#79c852 85.0%,#90cb46 100.0%)"></div><div style="left:735.0px;top:475px;width:5.4px;height:92.79999999999995px;background:linear-gradient(#000 0.0%,#000 18.0%,#07010c 19.2%,#010002 21.7%,#09020e 24.2%,#0c0213 26.7%,#2a0a3d 29.2%,#29093b 31.6%,#3f0f59 34.1%,#6b1e8d 36.6%,#4e146c 39.1%,#722095 41.5%,#44ba70 44.0%,#76c854 46.5%,#44ba71 49.0%,#41b972 51.5%,#4b1368 53.9%,#4b1368 56.4%,#4b1368 58.9%,#4b1368 61.0%,#4dbd6c 61.1%,#78c852 85.0%,#90cb46 100.0%)"></div><div style="left:740.0px;top:475px;width:5.4px;height:92.79999999999995px;background:linear-gradient(#000 0.0%,#000 18.0%,#000000 19.2%,#0b0212 21.7%,#07010a 24.2%,#1c062b 26.7%,#1e072d 29.2%,#2b0a3e 31.6%,#571776 34.1%,#471264 36.6%,#531671 39.1%,#27a883 41.5%,#30b17d 44.0%,#40b973 46.5%,#4dbd6c 49.0%,#56bf66 51.5%,#4b1368 53.9%,#4b1368 56.4%,#4b1368 58.9%,#4b1368 61.0%,#3b5f96 61.1%,#25a584 69.0%,#2eaf7e 85.0%,#32b47b 100.0%)"></div><div style="left:745.0px;top:475px;width:5.4px;height:92.79999999999995px;background:linear-gradient(#000 0.0%,#000 18.0%,#08020d 19.2%,#020002 21.7%,#08020c 24.2%,#170524 26.7%,#3a0e53 29.2%,#3d0f57 31.6%,#541673 34.1%,#6d2b99 36.6%,#6c2d99 39.1%,#722095 41.5%,#30b17d 44.0%,#75c754 46.5%,#8ecb47 49.0%,#58c065 51.5%,#69c45b 53.9%,#60c260 56.4%,#5bc063 58.9%,#5bc063 61.0%,#3cb875 61.1%,#67c45c 85.0%,#7eca4f 100.0%)"></div><div style="left:750.0px;top:475px;width:5.4px;height:92.79999999999995px;background:linear-gradient(#000 0.0%,#000 18.0%,#000001 19.2%,#010002 21.7%,#100319 24.2%,#13041d 26.7%,#270939 29.2%,#4d146b 31.6%,#5a187a 34.1%,#5c197c 36.6%,#591878 39.1%,#30b17d 41.5%,#722095 44.0%,#57bf66 46.5%,#3fb974 49.0%,#85cc4b 51.5%,#3cb875 53.9%,#39b777 56.4%,#45ba70 58.9%,#45ba70 61.0%,#21a088 61.1%,#2aab81 85.0%,#32b47b 100.0%)"></div><div style="left:755.0px;top:475px;width:5.4px;height:92.79999999999995px;background:linear-gradient(#000 0.0%,#000 18.0%,#030104 19.2%,#06010a 21.7%,#0c0212 24.2%,#1c062a 26.7%,#1c0629 29.2%,#521670 31.6%,#451162 34.1%,#623799 36.6%,#5a3f98 39.1%,#44ba70 41.5%,#27a883 44.0%,#e0c527 46.5%,#e9b824 49.0%,#d2c62c 51.5%,#e8bb24 53.9%,#e5bf25 56.4%,#dec528 58.9%,#dec528 61.0%,#4dbd6c 61.1%,#78c852 85.0%,#90cb46 100.0%)"></div><div style="left:760.0px;top:475px;width:5.4px;height:92.79999999999995px;background:linear-gradient(#000 0.0%,#000 18.0%,#020004 19.2%,#0c0212 21.7%,#08020c 24.2%,#1e072c 26.7%,#340c4b 29.2%,#451162 31.6%,#5f1a7f 34.1%,#5d197d 36.6%,#4a4f97 39.1%,#44ba70 41.5%,#722095 44.0%,#c9c730 46.5%,#c5c731 49.0%,#e7bb24 51.5%,#c5c731 53.9%,#c7c731 56.4%,#d9c62a 58.9%,#d9c62a 61.0%,#4dbd6c 61.1%,#6fc657 85.0%,#90cb46 100.0%)"></div><div style="left:765.0px;top:475px;width:5.4px;height:92.79999999999995px;background:linear-gradient(#000 0.0%,#000 18.0%,#010002 19.2%,#0b0212 21.7%,#12041c 24.2%,#100319 26.7%,#2e0b43 29.2%,#2e0b42 31.6%,#4b1368 34.1%,#521671 36.6%,#631c85 39.1%,#27a883 41.5%,#1f9e89 44.0%,#e9b924 46.5%,#e3c426 49.0%,#eab724 51.5%,#e5c025 53.9%,#e3c326 56.4%,#bbc835 58.9%,#bbc835 61.0%,#4dbd6c 61.1%,#79c951 85.0%,#90cb46 100.0%)"></div><div style="left:770.0px;top:475px;width:5.4px;height:92.79999999999995px;background:linear-gradient(#000 0.0%,#000 18.0%,#020002 19.2%,#07010a 21.7%,#0d0314 24.2%,#0f0317 26.7%,#330c49 29.2%,#2d0a41 31.6%,#1f9e89 34.1%,#661d88 36.6%,#5d3c98 39.1%,#30b17d 41.5%,#44ba70 44.0%,#d9c62a 46.5%,#f1aa22 49.0%,#d9c62a 51.5%,#e3c426 53.9%,#bcc835 56.4%,#dfc527 58.9%,#dfc527 61.0%,#29aa82 61.1%,#43ba71 85.0%,#4dbd6c 100.0%)"></div><div style="left:775.0px;top:475px;width:5.4px;height:92.79999999999995px;background:linear-gradient(#000 0.0%,#000 18.0%,#07010a 19.2%,#07010b 21.7%,#07010b 24.2%,#0d0315 26.7%,#250836 29.2%,#350d4d 31.6%,#3d0f57 34.1%,#5f1a7f 36.6%,#551673 39.1%,#44ba70 41.5%,#1f9e89 44.0%,#eab724 46.5%,#b9c836 49.0%,#a6ca3e 51.5%,#d4c62b 53.9%,#a8c93d 56.4%,#96cb44 58.9%,#96cb44 61.0%,#3cb875 61.1%,#67c45c 85.0%,#7eca4f 100.0%)"></div><div style="left:780.0px;top:475px;width:5.4px;height:92.79999999999995px;background:linear-gradient(#000 0.0%,#000 18.0%,#000000 19.2%,#010002 21.7%,#100318 24.2%,#190525 26.7%,#190526 29.2%,#4a1367 31.6%,#43105f 34.1%,#74249a 36.6%,#561775 39.1%,#44ba70 41.5%,#722095 44.0%,#e3c326 46.5%,#e7bc25 49.0%,#b4c938 51.5%,#dec528 53.9%,#c4c732 56.4%,#e0c527 58.9%,#e0c527 61.0%,#3cb875 61.1%,#6dc559 85.0%,#7eca4f 100.0%)"></div><div style="left:785.0px;top:475px;width:5.4px;height:92.79999999999995px;background:linear-gradient(#000 0.0%,#000 18.0%,#000000 19.2%,#040107 21.7%,#0a0210 24.2%,#1c062a 26.7%,#2b0a3e 29.2%,#340c4b 31.6%,#4c1369 34.1%,#551673 36.6%,#581878 39.1%,#44ba70 41.5%,#722095 44.0%,#c5c731 46.5%,#ebb423 49.0%,#eeb123 51.5%,#c4c732 53.9%,#a7c93d 56.4%,#acc93b 58.9%,#acc93b 61.0%,#21a088 61.1%,#2aab81 85.0%,#32b47b 100.0%)"></div><div style="left:790.0px;top:475px;width:5.4px;height:92.79999999999995px;background:linear-gradient(#000 0.0%,#000 18.0%,#050107 19.2%,#060109 21.7%,#0c0213 24.2%,#150421 26.7%,#220832 29.2%,#320c48 31.6%,#43105f 34.1%,#571776 36.6%,#74249a 39.1%,#27a883 41.5%,#1f9e89 44.0%,#2fb17d 46.5%,#2fb07e 49.0%,#32b47c 51.5%,#2eaf7e 53.9%,#41b972 56.4%,#39b777 58.9%,#39b777 61.0%,#29aa82 61.1%,#41ba72 85.0%,#4dbd6c 100.0%)"></div><div style="left:795.0px;top:475px;width:5.4px;height:92.79999999999995px;background:linear-gradient(#000 0.0%,#000 18.0%,#000000 19.2%,#0d0314 21.7%,#13041e 24.2%,#150421 26.7%,#250836 29.2%,#360d4e 31.6%,#41105c 34.1%,#633699 36.6%,#653499 39.1%,#44ba70 41.5%,#1f9e89 44.0%,#b4c838 46.5%,#81cb4d 49.0%,#ccc72f 51.5%,#7fca4e 53.9%,#bcc835 56.4%,#a3ca3f 58.9%,#a3ca3f 61.0%,#21a088 61.1%,#2bac80 85.0%,#32b47b 100.0%)"></div><div style="left:800.0px;top:475px;width:5.4px;height:92.79999999999995px;background:linear-gradient(#000 0.0%,#000 18.0%,#000000 19.2%,#050107 21.7%,#13041e 24.2%,#100319 26.7%,#1e072c 29.2%,#1f9e89 31.6%,#50156e 34.1%,#5f1a7f 36.6%,#643599 39.1%,#722095 41.5%,#27a883 44.0%,#b4c938 46.5%,#80ca4d 49.0%,#a6ca3e 51.5%,#a3ca3f 53.9%,#71c656 56.4%,#7cc950 58.9%,#7cc950 61.0%,#6dc558 61.1%,#abc93b 85.0%,#b9c836 100.0%)"></div><div style="left:805.0px;top:475px;width:5.4px;height:92.79999999999995px;background:linear-gradient(#000 0.0%,#000 18.0%,#000000 19.2%,#010002 21.7%,#0b0212 24.2%,#13041e 26.7%,#2c0a40 29.2%,#2d0b42 31.6%,#5b197a 34.1%,#5b197b 36.6%,#671d88 39.1%,#27a883 41.5%,#44ba70 44.0%,#80ca4e 46.5%,#b5c838 49.0%,#86cc4a 51.5%,#aac93c 53.9%,#82cb4d 56.4%,#6bc55a 58.9%,#6bc55a 61.0%,#6dc558 61.1%,#97cb43 85.0%,#b9c836 100.0%)"></div><div style="left:810.0px;top:475px;width:5.4px;height:92.79999999999995px;background:linear-gradient(#000 0.0%,#000 18.0%,#08020c 19.2%,#020003 21.7%,#07010b 24.2%,#0d0315 26.7%,#1f072f 29.2%,#42105e 31.6%,#541673 34.1%,#71279a 36.6%,#581878 39.1%,#44ba70 41.5%,#1f9e89 44.0%,#87cc4a 46.5%,#b1c939 49.0%,#bdc834 51.5%,#aec93b 53.9%,#7eca4f 56.4%,#65c35d 58.9%,#65c35d 61.0%,#21a088 61.1%,#2aab81 85.0%,#32b47b 100.0%)"></div><div style="left:815.0px;top:475px;width:5.4px;height:92.79999999999995px;background:linear-gradient(#000 0.0%,#000 18.0%,#000000 19.2%,#0c0213 21.7%,#13041e 24.2%,#170523 26.7%,#1d062b 29.2%,#3f0f5a 31.6%,#722196 34.1%,#742197 36.6%,#691e8b 39.1%,#44ba70 41.5%,#1f9e89 44.0%,#8ecb47 46.5%,#97cb43 49.0%,#b9c836 51.5%,#62c25f 53.9%,#6bc55a 56.4%,#62c25f 58.9%,#62c25f 61.0%,#2eaf7e 61.1%,#4bbc6c 85.0%,#5dc162 100.0%)"></div><div style="left:820.0px;top:475px;width:5.4px;height:92.79999999999995px;background:linear-gradient(#000 0.0%,#000 18.0%,#040107 19.2%,#060109 21.7%,#0c0212 24.2%,#0f0318 26.7%,#350d4c 29.2%,#541673 31.6%,#732197 34.1%,#6d1f90 36.6%,#415996 39.1%,#44ba70 41.5%,#30b17d 44.0%,#c5c731 46.5%,#bbc835 49.0%,#78c852 51.5%,#82cb4d 53.9%,#5ec162 56.4%,#a9c93c 58.9%,#a9c93c 61.0%,#86cc4a 61.1%,#b8c836 85.0%,#d8c62a 100.0%)"></div><div style="left:825.0px;top:475px;width:5.4px;height:92.79999999999995px;background:linear-gradient(#000 0.0%,#000 18.0%,#000000 19.2%,#0c0212 21.7%,#09020e 24.2%,#12041c 26.7%,#350d4c 29.2%,#370d4f 31.6%,#441160 34.1%,#722195 36.6%,#475397 39.1%,#30b17d 41.5%,#722095 44.0%,#74c754 46.5%,#75c854 49.0%,#9aca42 51.5%,#94cb44 53.9%,#7eca4f 56.4%,#6ec658 58.9%,#6ec658 61.0%,#86cc4a 61.1%,#bcc835 85.0%,#d8c62a 100.0%)"></div><div style="left:830.0px;top:475px;width:5.4px;height:92.79999999999995px;background:linear-gradient(#000 0.0%,#000 18.0%,#040106 19.2%,#030105 21.7%,#13041e 24.2%,#13041e 26.7%,#2f0b43 29.2%,#3b0e55 31.6%,#4d146a 34.1%,#6e1f90 36.6%,#465397 39.1%,#30b17d 41.5%,#1f9e89 44.0%,#90cb46 46.5%,#cdc72e 49.0%,#9bca42 51.5%,#6ec658 53.9%,#9dca41 56.4%,#8fcb46 58.9%,#8fcb46 61.0%,#86cc4a 61.1%,#cdc72e 85.0%,#d8c62a 100.0%)"></div><div style="left:835.0px;top:475px;width:5.4px;height:92.79999999999995px;background:linear-gradient(#000 0.0%,#000 18.0%,#06010a 19.2%,#030105 21.7%,#07010b 24.2%,#160522 26.7%,#2f0b44 29.2%,#2b0a3e 31.6%,#4b1368 34.1%,#6a1e8d 36.6%,#1f9e89 39.1%,#722095 41.5%,#722095 44.0%,#8bcc48 46.5%,#70c657 49.0%,#8acc48 51.5%,#60c260 53.9%,#afc93a 56.4%,#60c260 58.9%,#60c260 61.0%,#25a584 61.1%,#32b47b 85.0%,#3cb875 100.0%)"></div><div style="left:840.0px;top:475px;width:5.4px;height:92.79999999999995px;background:linear-gradient(#000 0.0%,#000 18.0%,#000000 19.2%,#09020d 21.7%,#08020c 24.2%,#0d0315 26.7%,#240835 29.2%,#350d4c 31.6%,#591879 34.1%,#531672 36.6%,#732197 39.1%,#30b17d 41.5%,#44ba70 44.0%,#ccc72e 46.5%,#acc93b 49.0%,#92cb45 51.5%,#61c260 53.9%,#97cb43 56.4%,#a4ca3e 58.9%,#a4ca3e 61.0%,#25a584 61.1%,#30b27d 85.0%,#3cb875 100.0%)"></div><div style="left:845.0px;top:475px;width:5.4px;height:92.79999999999995px;background:linear-gradient(#000 0.0%,#000 18.0%,#07010b 19.2%,#06010a 21.7%,#09020d 24.2%,#0e0316 26.7%,#160422 29.2%,#380d51 31.6%,#581877 34.1%,#4e146c 36.6%,#6e2a99 39.1%,#722095 41.5%,#722095 44.0%,#c6c731 46.5%,#b3c939 49.0%,#7bc950 51.5%,#77c853 53.9%,#69c45b 56.4%,#6ac45b 58.9%,#6ac45b 61.0%,#86cc4a 61.1%,#b1c939 85.0%,#d8c62a 100.0%)"></div><div style="left:850.0px;top:475px;width:5.4px;height:92.79999999999995px;background:linear-gradient(#000 0.0%,#000 18.0%,#000000 19.2%,#0d0314 21.7%,#0c0212 24.2%,#210731 26.7%,#28093b 29.2%,#41105c 31.6%,#591878 34.1%,#601a81 36.6%,#6d2c99 39.1%,#27a883 41.5%,#1f9e89 44.0%,#e4c125 46.5%,#e7bc25 49.0%,#e4c225 51.5%,#bac836 53.9%,#c6c731 56.4%,#e6bf25 58.9%,#e6bf25 61.0%,#4dbd6c 61.1%,#83cb4b 85.0%,#90cb46 100.0%)"></div><div style="left:855.0px;top:475px;width:5.4px;height:92.79999999999995px;background:linear-gradient(#000 0.0%,#000 18.0%,#000000 19.2%,#060109 21.7%,#0d0314 24.2%,#1f072e 26.7%,#2e0b42 29.2%,#3b0e54 31.6%,#3f0f59 34.1%,#5e1a7f 36.6%,#1f9e89 39.1%,#44ba70 41.5%,#44ba70 44.0%,#dbc629 46.5%,#edb223 49.0%,#edb123 51.5%,#d9c62a 53.9%,#bfc834 56.4%,#dac629 58.9%,#dac629 61.0%,#3cb875 61.1%,#60c260 85.0%,#7eca4f 100.0%)"></div><div style="left:860.0px;top:475px;width:5.4px;height:92.79999999999995px;background:linear-gradient(#000 0.0%,#000 18.0%,#000000 19.2%,#020003 21.7%,#13041d 24.2%,#11031b 26.7%,#2c0a3f 29.2%,#270939 31.6%,#5e1a7f 34.1%,#742198 36.6%,#551673 39.1%,#1f9e89 41.5%,#27a883 44.0%,#89cc49 46.5%,#d6c62b 49.0%,#99cb42 51.5%,#b2c939 53.9%,#b0c939 56.4%,#a6ca3d 58.9%,#a6ca3d 61.0%,#2eaf7e 61.1%,#4ebd6b 85.0%,#5dc162 100.0%)"></div><div style="left:865.0px;top:475px;width:5.4px;height:92.79999999999995px;background:linear-gradient(#000 0.0%,#000 18.0%,#07010a 19.2%,#06010a 21.7%,#0a020f 24.2%,#210831 26.7%,#210731 29.2%,#360d4e 31.6%,#3b0e55 34.1%,#50156e 36.6%,#6d1f8f 39.1%,#30b17d 41.5%,#44ba70 44.0%,#8dcb47 46.5%,#ccc72f 49.0%,#88cc49 51.5%,#98cb43 53.9%,#a2ca3f 56.4%,#88cc49 58.9%,#88cc49 61.0%,#86cc4a 61.1%,#cac730 85.0%,#d8c62a 100.0%)"></div><div style="left:870.0px;top:475px;width:5.4px;height:92.79999999999995px;background:linear-gradient(#000 0.0%,#000 18.0%,#040107 19.2%,#050108 21.7%,#0b0211 24.2%,#11031b 26.7%,#160422 29.2%,#2d0b41 31.6%,#3b0e54 34.1%,#73259a 36.6%,#671d88 39.1%,#722095 41.5%,#30b17d 44.0%,#c7c731 46.5%,#c8c730 49.0%,#92cb45 51.5%,#4b1368 53.9%,#4b1368 56.4%,#4b1368 58.9%,#4b1368 61.0%,#3b5f96 61.1%,#9aca42 69.0%,#c2c732 85.0%,#d8c62a 100.0%)"></div><div style="left:875.0px;top:475px;width:5.4px;height:92.79999999999995px;background:linear-gradient(#000 0.0%,#000 18.0%,#030105 19.2%,#000000 21.7%,#060109 24.2%,#11031a 26.7%,#14041e 29.2%,#2c0a40 31.6%,#461163 34.1%,#4c146a 36.6%,#601a81 39.1%,#27a883 41.5%,#27a883 44.0%,#aac93c 46.5%,#83cb4c 49.0%,#8bcc48 51.5%,#4b1368 53.9%,#4b1368 56.4%,#4b1368 58.9%,#4b1368 61.0%,#86cc4a 61.1%,#b7c837 85.0%,#d8c62a 100.0%)"></div><div style="left:880.0px;top:475px;width:5.4px;height:92.79999999999995px;background:linear-gradient(#000 0.0%,#000 18.0%,#07010a 19.2%,#09020e 21.7%,#0f0318 24.2%,#1b0629 26.7%,#2b0a3e 29.2%,#3d0f57 31.6%,#3f0f5a 34.1%,#5c197c 36.6%,#6a1e8c 39.1%,#1f9e89 41.5%,#1f9e89 44.0%,#bac835 46.5%,#bfc834 49.0%,#90cb46 51.5%,#4b1368 53.9%,#4b1368 56.4%,#4b1368 58.9%,#4b1368 61.0%,#3b5f96 61.1%,#9aca42 69.0%,#bfc834 85.0%,#d8c62a 100.0%)"></div><div style="left:885.0px;top:475px;width:5.4px;height:92.79999999999995px;background:linear-gradient(#000 0.0%,#000 18.0%,#030105 19.2%,#08020c 21.7%,#09020d 24.2%,#1c062a 26.7%,#3b0e54 29.2%,#461162 31.6%,#591879 34.1%,#712095 36.6%,#651c87 39.1%,#27a883 41.5%,#27a883 44.0%,#e2c526 46.5%,#97cb44 49.0%,#bec834 51.5%,#76c853 53.9%,#b9c836 56.4%,#bcc835 58.9%,#bcc835 61.0%,#86cc4a 61.1%,#ccc72f 85.0%,#d8c62a 100.0%)"></div><div style="left:890.0px;top:475px;width:5.4px;height:92.79999999999995px;background:linear-gradient(#000 0.0%,#000 18.0%,#08020c 19.2%,#050108 21.7%,#14041f 24.2%,#250836 26.7%,#1c0629 29.2%,#3d0f57 31.6%,#6c1f8f 34.1%,#651c87 36.6%,#4d4c97 39.1%,#44ba70 41.5%,#30b17d 44.0%,#e4c125 46.5%,#d6c62b 49.0%,#eab724 51.5%,#e5c025 53.9%,#e6bd25 56.4%,#e3c326 58.9%,#e3c326 61.0%,#21a088 61.1%,#2dae7f 85.0%,#32b47b 100.0%)"></div><div style="left:895.0px;top:475px;width:5.4px;height:92.79999999999995px;background:linear-gradient(#000 0.0%,#000 18.0%,#050107 19.2%,#09020d 21.7%,#0c0212 24.2%,#11031b 26.7%,#2e0b43 29.2%,#2e0b43 31.6%,#451161 34.1%,#601a81 36.6%,#732197 39.1%,#1f9e89 41.5%,#1f9e89 44.0%,#b3c938 46.5%,#e6bd25 49.0%,#e5bf25 51.5%,#dbc629 53.9%,#dec527 56.4%,#a0ca40 58.9%,#a0ca40 61.0%,#3cb875 61.1%,#6cc559 85.0%,#7eca4f 100.0%)"></div><div style="left:900.0px;top:475px;width:5.4px;height:92.79999999999995px;background:linear-gradient(#000 0.0%,#000 18.0%,#07010c 19.2%,#030104 21.7%,#0b0210 24.2%,#100319 26.7%,#1b0628 29.2%,#4e146c 31.6%,#601a81 34.1%,#6b2e99 36.6%,#681d8a 39.1%,#27a883 41.5%,#30b17d 44.0%,#d0c62d 46.5%,#dac629 49.0%,#b1c939 51.5%,#b2c939 53.9%,#b4c838 56.4%,#dcc528 58.9%,#dcc528 61.0%,#3cb875 61.1%,#66c35d 85.0%,#7eca4f 100.0%)"></div><div style="left:905.0px;top:475px;width:5.4px;height:92.79999999999995px;background:linear-gradient(#000 0.0%,#000 18.0%,#000000 19.2%,#08020c 21.7%,#09020e 24.2%,#150421 26.7%,#190526 29.2%,#3e0f58 31.6%,#661c87 34.1%,#671d88 36.6%,#71279a 39.1%,#1f9e89 41.5%,#1f9e89 44.0%,#d2c62c 46.5%,#b9c836 49.0%,#e7bd25 51.5%,#e3c326 53.9%,#e6be25 56.4%,#d1c62d 58.9%,#d1c62d 61.0%,#3cb875 61.1%,#75c754 85.0%,#7eca4f 100.0%)"></div><div style="left:910.0px;top:475px;width:5.4px;height:92.79999999999995px;background:linear-gradient(#000 0.0%,#000 18.0%,#000000 19.2%,#030105 21.7%,#150420 24.2%,#210730 26.7%,#2a0a3c 29.2%,#541672 31.6%,#42105f 34.1%,#5f1a80 36.6%,#504a97 39.1%,#44ba70 41.5%,#1f9e89 44.0%,#d5c62b 46.5%,#cec72e 49.0%,#dbc629 51.5%,#cdc72e 53.9%,#aac93c 56.4%,#e6bd25 58.9%,#e6bd25 61.0%,#3cb875 61.1%,#6dc559 85.0%,#7eca4f 100.0%)"></div><div style="left:915.0px;top:475px;width:5.4px;height:92.79999999999995px;background:linear-gradient(#000 0.0%,#000 18.0%,#000000 19.2%,#0c0213 21.7%,#11031a 24.2%,#20072f 26.7%,#1e072d 29.2%,#3b0e54 31.6%,#5b197b 34.1%,#732196 36.6%,#6d1f90 39.1%,#30b17d 41.5%,#722095 44.0%,#d3c62c 46.5%,#d3c62c 49.0%,#ddc528 51.5%,#cdc72e 53.9%,#dfc527 56.4%,#bec834 58.9%,#bec834 61.0%,#3cb875 61.1%,#65c35d 85.0%,#7eca4f 100.0%)"></div><div style="left:920.0px;top:475px;width:5.4px;height:92.79999999999995px;background:linear-gradient(#000 0.0%,#000 18.0%,#000000 19.2%,#040106 21.7%,#09020e 24.2%,#0d0314 26.7%,#2d0b42 29.2%,#28093a 31.6%,#1f9e89 34.1%,#6b1e8d 36.6%,#50156e 39.1%,#30b17d 41.5%,#44ba70 44.0%,#a7c93d 46.5%,#bfc834 49.0%,#e5bf25 51.5%,#91cb46 53.9%,#a7ca3d 56.4%,#dfc527 58.9%,#dfc527 61.0%,#29aa82 61.1%,#3db875 85.0%,#4dbd6c 100.0%)"></div><div style="left:925.0px;top:475px;width:5.4px;height:92.79999999999995px;background:linear-gradient(#000 0.0%,#000 18.0%,#030105 19.2%,#0c0212 21.7%,#0e0316 24.2%,#13041e 26.7%,#160522 29.2%,#250836 31.6%,#3e0f58 34.1%,#631b84 36.6%,#51156f 39.1%,#27a883 41.5%,#30b17d 44.0%,#e8bb24 46.5%,#d6c62b 49.0%,#a7ca3d 51.5%,#dfc527 53.9%,#c0c833 56.4%,#cdc72e 58.9%,#cdc72e 61.0%,#29aa82 61.1%,#41ba72 85.0%,#4dbd6c 100.0%)"></div><div style="left:930.0px;top:475px;width:5.4px;height:92.79999999999995px;background:linear-gradient(#000 0.0%,#000 18.0%,#07010c 19.2%,#000001 21.7%,#0d0314 24.2%,#0e0315 26.7%,#29093c 29.2%,#3f0f5a 31.6%,#320c49 34.1%,#5b197b 36.6%,#5f1a7f 39.1%,#30b17d 41.5%,#722095 44.0%,#e3c326 46.5%,#ecb323 49.0%,#e6bf25 51.5%,#ebb523 53.9%,#c0c833 56.4%,#dec528 58.9%,#dec528 61.0%,#29aa82 61.1%,#43ba71 85.0%,#4dbd6c 100.0%)"></div><div style="left:935.0px;top:475px;width:5.4px;height:92.79999999999995px;background:linear-gradient(#000 0.0%,#000 18.0%,#000000 19.2%,#010001 21.7%,#07010a 24.2%,#1e072c 26.7%,#240835 29.2%,#360d4d 31.6%,#330c49 34.1%,#531672 36.6%,#75239a 39.1%,#44ba70 41.5%,#44ba70 44.0%,#d9c62a 46.5%,#d1c62d 49.0%,#edb123 51.5%,#e7bc24 53.9%,#e4c226 56.4%,#dac629 58.9%,#dac629 61.0%,#29aa82 61.1%,#3ab877 85.0%,#4dbd6c 100.0%)"></div><div style="left:940.0px;top:475px;width:5.4px;height:92.79999999999995px;background:linear-gradient(#000 0.0%,#000 18.0%,#020003 19.2%,#010002 21.7%,#11031a 24.2%,#100319 26.7%,#2b0a3f 29.2%,#28093a 31.6%,#380d50 34.1%,#1f9e89 36.6%,#6a1e8c 39.1%,#27a883 41.5%,#30b17d 44.0%,#d0c62d 46.5%,#e0c527 49.0%,#e5c025 51.5%,#a2ca3f 53.9%,#e5c125 56.4%,#a8c93d 58.9%,#a8c93d 61.0%,#32b47c 61.1%,#54bf67 85.0%,#6dc558 100.0%)"></div><div style="left:945.0px;top:475px;width:5.4px;height:92.79999999999995px;background:linear-gradient(#000 0.0%,#000 18.0%,#000000 19.2%,#0b0211 21.7%,#0e0316 24.2%,#0c0212 26.7%,#12041c 29.2%,#3f0f5a 31.6%,#380d50 34.1%,#461163 36.6%,#6d1f8f 39.1%,#27a883 41.5%,#27a883 44.0%,#ebb423 46.5%,#e9b924 49.0%,#c0c833 51.5%,#e4c125 53.9%,#d2c62c 56.4%,#e2c526 58.9%,#e2c526 61.0%,#29aa82 61.1%,#3cb875 85.0%,#4dbd6c 100.0%)"></div><div style="left:950.0px;top:475px;width:5.4px;height:92.79999999999995px;background:linear-gradient(#000 0.0%,#000 18.0%,#040106 19.2%,#07010b 21.7%,#0f0318 24.2%,#11031b 26.7%,#2c0a41 29.2%,#310c47 31.6%,#370d4f 34.1%,#581878 36.6%,#5c197d 39.1%,#44ba70 41.5%,#27a883 44.0%,#e2c526 46.5%,#e3c326 49.0%,#eab624 51.5%,#9bca42 53.9%,#e3c326 56.4%,#c5c731 58.9%,#c5c731 61.0%,#29aa82 61.1%,#3ab877 85.0%,#4dbd6c 100.0%)"></div><div style="left:955.0px;top:475px;width:5.4px;height:92.79999999999995px;background:linear-gradient(#000 0.0%,#000 18.0%,#07010b 19.2%,#010001 21.7%,#0e0316 24.2%,#14041f 26.7%,#12041c 29.2%,#330c4a 31.6%,#561775 34.1%,#722095 36.6%,#5d197e 39.1%,#1f9e89 41.5%,#27a883 44.0%,#e7bc25 46.5%,#e5c025 49.0%,#d2c62c 51.5%,#e4c225 53.9%,#bcc835 56.4%,#c6c731 58.9%,#c6c731 61.0%,#29aa82 61.1%,#39b777 85.0%,#4dbd6c 100.0%)"></div><div style="left:960.0px;top:475px;width:5.4px;height:92.79999999999995px;background:linear-gradient(#000 0.0%,#000 18.0%,#000000 19.2%,#040106 21.7%,#0a0210 24.2%,#12041c 26.7%,#1a0527 29.2%,#40105c 31.6%,#3b0e54 34.1%,#581878 36.6%,#4e146c 39.1%,#27a883 41.5%,#722095 44.0%,#edb223 46.5%,#b8c836 49.0%,#eeb123 51.5%,#bfc834 53.9%,#cdc72e 56.4%,#c0c833 58.9%,#c0c833 61.0%,#29aa82 61.1%,#3ab877 85.0%,#4dbd6c 100.0%)"></div><div style="left:965.0px;top:475px;width:5.4px;height:92.79999999999995px;background:linear-gradient(#000 0.0%,#000 18.0%,#050107 19.2%,#010001 21.7%,#0c0213 24.2%,#13041d 26.7%,#1b0629 29.2%,#230834 31.6%,#491266 34.1%,#43105f 36.6%,#651c87 39.1%,#27a883 41.5%,#1f9e89 44.0%,#abc93b 46.5%,#c0c833 49.0%,#92cb45 51.5%,#64c35e 53.9%,#a8c93d 56.4%,#5ec161 58.9%,#5ec161 61.0%,#29aa82 61.1%,#41ba72 85.0%,#4dbd6c 100.0%)"></div><div style="left:970.0px;top:475px;width:5.4px;height:92.79999999999995px;background:linear-gradient(#000 0.0%,#000 18.0%,#000000 19.2%,#060109 21.7%,#0f0317 24.2%,#200730 26.7%,#13041e 29.2%,#350d4c 31.6%,#370d4e 34.1%,#631b84 36.6%,#1f9e89 39.1%,#44ba70 41.5%,#722095 44.0%,#a4ca3e 46.5%,#c7c730 49.0%,#ccc72f 51.5%,#80ca4d 53.9%,#7bc950 56.4%,#65c35e 58.9%,#65c35e 61.0%,#6dc558 61.1%,#a4ca3e 85.0%,#b9c836 100.0%)"></div><div style="left:975.0px;top:475px;width:5.4px;height:92.79999999999995px;background:linear-gradient(#000 0.0%,#000 18.0%,#08020c 19.2%,#0c0212 21.7%,#09020e 24.2%,#0e0315 26.7%,#210730 29.2%,#2b0a3e 31.6%,#42105e 34.1%,#752299 36.6%,#722095 39.1%,#27a883 41.5%,#1f9e89 44.0%,#85cc4a 46.5%,#a0ca40 49.0%,#9aca42 51.5%,#4b1368 53.9%,#4b1368 56.4%,#4b1368 58.9%,#4b1368 61.0%,#32b47c 61.1%,#62c25f 85.0%,#6dc558 100.0%)"></div><div style="left:980.0px;top:475px;width:5.4px;height:92.79999999999995px;background:linear-gradient(#000 0.0%,#000 18.0%,#030105 19.2%,#0a0210 21.7%,#06010a 24.2%,#0f0317 26.7%,#250836 29.2%,#210731 31.6%,#3c0f56 34.1%,#4c136a 36.6%,#551774 39.1%,#27a883 41.5%,#1f9e89 44.0%,#e3c226 46.5%,#eab724 49.0%,#eab724 51.5%,#d5c62b 53.9%,#d2c62c 56.4%,#e7bc25 58.9%,#e7bc25 61.0%,#32b47c 61.1%,#64c35e 85.0%,#6dc558 100.0%)"></div><div style="left:985.0px;top:475px;width:5.4px;height:92.79999999999995px;background:linear-gradient(#000 0.0%,#000 18.0%,#040106 19.2%,#0b0211 21.7%,#0a020f 24.2%,#13041e 26.7%,#2e0b43 29.2%,#390e52 31.6%,#370d4f 34.1%,#691e8b 36.6%,#641c85 39.1%,#27a883 41.5%,#44ba70 44.0%,#e0c527 46.5%,#c4c732 49.0%,#dec527 51.5%,#d6c62b 53.9%,#e3c426 56.4%,#e7bb24 58.9%,#e7bb24 61.0%,#32b47c 61.1%,#62c25f 85.0%,#6dc558 100.0%)"></div><div style="left:990.0px;top:475px;width:5.4px;height:92.79999999999995px;background:linear-gradient(#000 0.0%,#000 18.0%,#000000 19.2%,#0b0211 21.7%,#100319 24.2%,#150420 26.7%,#2c0a40 29.2%,#29093b 31.6%,#400f5b 34.1%,#451162 36.6%,#712094 39.1%,#722095 41.5%,#1f9e89 44.0%,#ebb523 46.5%,#e6be25 49.0%,#d8c62a 51.5%,#c6c731 53.9%,#e6be25 56.4%,#e7bc25 58.9%,#e7bc25 61.0%,#32b47c 61.1%,#58c065 85.0%,#6dc558 100.0%)"></div><div style="left:995.0px;top:475px;width:5.4px;height:92.79999999999995px;background:linear-gradient(#000 0.0%,#000 18.0%,#07010a 19.2%,#08020c 21.7%,#0d0315 24.2%,#180524 26.7%,#1b0629 29.2%,#2d0b42 31.6%,#591879 34.1%,#6e1f91 36.6%,#722195 39.1%,#1f9e89 41.5%,#44ba70 44.0%,#e4c226 46.5%,#cec72e 49.0%,#eab724 51.5%,#e7bc25 53.9%,#bdc834 56.4%,#e3c326 58.9%,#e3c326 61.0%,#86cc4a 61.1%,#b9c836 85.0%,#d8c62a 100.0%)"></div><div style="left:1000.0px;top:475px;width:5.4px;height:92.79999999999995px;background:linear-gradient(#000 0.0%,#000 18.0%,#030104 19.2%,#040106 21.7%,#150420 24.2%,#13041d 26.7%,#1d062b 29.2%,#3c0e56 31.6%,#5f1a7f 34.1%,#5a3f98 36.6%,#445697 39.1%,#1f9e89 41.5%,#1f9e89 44.0%,#c7c731 46.5%,#e4c226 49.0%,#ebb423 51.5%,#dcc528 53.9%,#e8ba24 56.4%,#e9b824 58.9%,#e9b824 61.0%,#86cc4a 61.1%,#c9c730 85.0%,#d8c62a 100.0%)"></div><div style="left:1005.0px;top:475px;width:5.4px;height:92.79999999999995px;background:linear-gradient(#000 0.0%,#000 18.0%,#020004 19.2%,#0a020f 21.7%,#160421 24.2%,#1e072d 26.7%,#270939 29.2%,#3c0e56 31.6%,#712095 34.1%,#681d8a 36.6%,#712094 39.1%,#722095 41.5%,#1f9e89 44.0%,#efaf22 46.5%,#c8c730 49.0%,#edb123 51.5%,#4b1368 53.9%,#4b1368 56.4%,#4b1368 58.9%,#4b1368 61.0%,#86cc4a 61.1%,#c3c732 85.0%,#d8c62a 100.0%)"></div><div style="left:1010.0px;top:475px;width:5.4px;height:92.79999999999995px;background:linear-gradient(#000 0.0%,#000 18.0%,#000000 19.2%,#040106 21.7%,#12041c 24.2%,#1b0629 26.7%,#29093b 29.2%,#441160 31.6%,#521671 34.1%,#702093 36.6%,#6f299a 39.1%,#1f9e89 41.5%,#44ba70 44.0%,#dac629 46.5%,#a4ca3e 49.0%,#94cb45 51.5%,#4b1368 53.9%,#4b1368 56.4%,#4b1368 58.9%,#4b1368 61.0%,#86cc4a 61.1%,#b6c837 85.0%,#d8c62a 100.0%)"></div><div style="left:1015.0px;top:475px;width:5.4px;height:92.79999999999995px;background:linear-gradient(#000 0.0%,#000 18.0%,#000000 19.2%,#07010b 21.7%,#09020e 24.2%,#270939 26.7%,#370d4e 29.2%,#42105e 31.6%,#51156f 34.1%,#76229a 36.6%,#6b1e8d 39.1%,#1f9e89 41.5%,#27a883 44.0%,#d9c629 46.5%,#c9c730 49.0%,#9fca40 51.5%,#ccc72f 53.9%,#94cb44 56.4%,#a2ca3f 58.9%,#a2ca3f 61.0%,#86cc4a 61.1%,#b4c938 85.0%,#d8c62a 100.0%)"></div><div style="left:1020.0px;top:475px;width:5.4px;height:92.79999999999995px;background:linear-gradient(#000 0.0%,#000 18.0%,#010001 19.2%,#020003 21.7%,#0c0213 24.2%,#14041f 26.7%,#29093b 29.2%,#3d0f58 31.6%,#4f156d 34.1%,#641c85 36.6%,#591878 39.1%,#27a883 41.5%,#27a883 44.0%,#9aca42 46.5%,#aec93a 49.0%,#e4c125 51.5%,#82cb4c 53.9%,#bfc834 56.4%,#97cb43 58.9%,#97cb43 61.0%,#6dc558 61.1%,#aec93a 85.0%,#b9c836 100.0%)"></div><div style="left:1025.0px;top:475px;width:5.4px;height:92.79999999999995px;background:linear-gradient(#000 0.0%,#000 18.0%,#07010b 19.2%,#040106 21.7%,#0a0210 24.2%,#0c0212 26.7%,#1b0629 29.2%,#270939 31.6%,#50156e 34.1%,#491266 36.6%,#621b83 39.1%,#722095 41.5%,#44ba70 44.0%,#dec528 46.5%,#a2ca3f 49.0%,#9eca41 51.5%,#b9c836 53.9%,#b6c837 56.4%,#8dcb47 58.9%,#8dcb47 61.0%,#3cb875 61.1%,#65c35e 85.0%,#7eca4f 100.0%)"></div>
<div style="left:675px;top:475px;width:2px;height:92.79999999999995px;background:#000;"></div>
<div style="left:679.4px;top:576.2px;font-size:11.03px;line-height:13.2px;color:#3a3a3a;white-space:pre;transform:scaleX(0.852);transform-origin:0 0;">3. Graph Type</div>
<div style="left:771.6px;top:576.2px;font-size:11.03px;line-height:13.2px;color:#3a3a3a;white-space:pre;transform:scaleX(0.927);transform-origin:0 0;">4. Orientation</div>
<div style="left:865.0px;top:576.2px;font-size:11.03px;line-height:13.2px;color:#3a3a3a;white-space:pre;transform:scaleX(0.860);transform-origin:0 0;">5. Data Type</div>
<div style="left:675px;top:590.1px;width:91.5px;height:22.8px;background:#0a0a0a;"></div>
<div style="left:681.2px;top:594.2px;font-size:13.12px;line-height:15.7px;color:#f0f0f0;white-space:pre;transform:scaleX(0.856);transform-origin:0 0;">Spectrog...</div>
<div style="left:751.1px;top:599.0px;width:0;height:0;border-left:4.5px solid transparent;border-right:4.5px solid transparent;border-top:5px solid #fff;"></div>
<div style="left:767.8px;top:590.1px;width:91.6px;height:22.8px;background:#0a0a0a;"></div>
<div style="left:774.3px;top:594.2px;font-size:13.12px;line-height:15.7px;color:#f0f0f0;white-space:pre;transform:scaleX(0.938);transform-origin:0 0;">Horizontal</div>
<div style="left:844.2px;top:599.0px;width:0;height:0;border-left:4.5px solid transparent;border-right:4.5px solid transparent;border-top:5px solid #fff;"></div>
<div style="left:861px;top:590.1px;width:83.7px;height:22.8px;background:#0a0a0a;"></div>
<div style="left:867.2px;top:594.2px;font-size:13.12px;line-height:15.7px;color:#f0f0f0;white-space:pre;transform:scaleX(0.934);transform-origin:0 0;">Amplitude</div>
<div style="left:929.0px;top:599.0px;width:0;height:0;border-left:4.5px solid transparent;border-right:4.5px solid transparent;border-top:5px solid #fff;"></div>
<div style="left:947.3px;top:573px;width:82.7px;height:39.9px;background:linear-gradient(#2e2e2e,#1b1b1b);"></div>
<div style="left:962.1px;top:586.1px;font-size:13.12px;line-height:15.7px;color:#f0f0f0;white-space:pre;transform:scaleX(0.887);transform-origin:0 0;">BIG VIEW</div>
<div style="left:679.4px;top:619.9px;font-size:11.03px;line-height:13.2px;color:#3a3a3a;white-space:pre;transform:scaleX(0.828);transform-origin:0 0;">6. Freq Scale</div>
<div style="left:766.5px;top:619.9px;font-size:11.03px;line-height:13.2px;color:#3a3a3a;white-space:pre;transform:scaleX(0.876);transform-origin:0 0;">7. Amplitude Scale</div>
<div style="left:861.6px;top:619.9px;font-size:11.03px;line-height:13.2px;color:#3a3a3a;white-space:pre;transform:scaleX(0.894);transform-origin:0 0;">8. Interval</div>
<div style="left:923.5px;top:621.4px;font-size:11.03px;line-height:13.2px;color:#3a3a3a;white-space:pre;transform:scaleX(0.875);transform-origin:0 0;">9. Draw (Spectro only)</div>
<div style="left:675px;top:633.2px;width:88.8px;height:22.8px;background:#0a0a0a;"></div>
<div style="left:681.2px;top:637.3px;font-size:13.12px;line-height:15.7px;color:#f0f0f0;white-space:pre;transform:scaleX(0.914);transform-origin:0 0;">Logarithmic</div>
<div style="left:747.7px;top:642.1px;width:0;height:0;border-left:4.5px solid transparent;border-right:4.5px solid transparent;border-top:5px solid #fff;"></div>
<div style="left:765px;top:633.2px;width:90.8px;height:22.8px;background:#0a0a0a;"></div>
<div style="left:771.2px;top:637.3px;font-size:13.12px;line-height:15.7px;color:#f0f0f0;white-space:pre;transform:scaleX(0.914);transform-origin:0 0;">Logarithmic</div>
<div style="left:839.7px;top:642.1px;width:0;height:0;border-left:4.5px solid transparent;border-right:4.5px solid transparent;border-top:5px solid #fff;"></div>
<div style="left:857px;top:633.2px;width:60.4px;height:22.8px;background:#1e1e1e;"></div>
<div style="left:861.6px;top:639.1px;width:0;height:0;border-top:5.5px solid transparent;border-bottom:5.5px solid transparent;border-left:5px solid #707070;"></div>
<div style="left:869.2px;top:637.7px;font-size:13.12px;line-height:15.7px;color:#f0f0f0;white-space:pre;transform:scaleX(0.932);transform-origin:0 0;">20</div>
<div style="left:919px;top:633.2px;width:111px;height:22.8px;background:#1e1e1e;"></div>
<div style="left:925.2px;top:637.3px;font-size:13.12px;line-height:15.7px;color:#f0f0f0;white-space:pre;transform:scaleX(0.897);transform-origin:0 0;">Forward Scroll</div>
<div style="left:1013.4px;top:642.1px;width:0;height:0;border-left:4.5px solid transparent;border-right:4.5px solid transparent;border-top:5px solid #fff;"></div>
<div style="left:675px;top:665px;width:145.7px;height:23px;background:#161616;"></div>
<svg style="position:absolute;left:681px;top:671px" width="11.5" height="11.5" viewBox="0 0 11.5 11.5"><path d="M0.5 0.5L11.0 11.0M11.0 0.5L0.5 11.0" stroke="#6a6a6a" stroke-width="1.6"/></svg>
<div style="left:704.2px;top:669.7px;font-size:13.12px;line-height:15.7px;color:#f0f0f0;white-space:pre;transform:scaleX(0.913);transform-origin:0 0;">Master</div>
<div style="left:748.2px;top:674.0px;width:0;height:0;border-left:4.0px solid transparent;border-right:4.0px solid transparent;border-top:5px solid #fff;"></div>
<div style="left:770.0px;top:669.7px;font-size:13.12px;line-height:15.7px;color:#f0f0f0;white-space:pre;transform:scaleX(0.946);transform-origin:0 0;">Out</div>
<div style="left:805.1px;top:674.0px;width:0;height:0;border-left:4.0px solid transparent;border-right:4.0px solid transparent;border-top:5px solid #fff;"></div>
<div style="left:823.6px;top:669.0px;font-size:12.6px;line-height:15.1px;color:#3a3a3a;white-space:pre;transform:scaleX(0.913);transform-origin:0 0;">2.  Outputs</div>
<div style="left:884px;top:665px;width:146px;height:23px;background:#161616;"></div>
<svg style="position:absolute;left:890px;top:671px" width="11.5" height="11.5" viewBox="0 0 11.5 11.5"><path d="M0.5 0.5L11.0 11.0M11.0 0.5L0.5 11.0" stroke="#6a6a6a" stroke-width="1.6"/></svg>
<div style="left:913.4px;top:669.7px;font-size:13.12px;line-height:15.7px;color:#f0f0f0;white-space:pre;transform:scaleX(0.913);transform-origin:0 0;">Master</div>
<div style="left:957.4px;top:674.0px;width:0;height:0;border-left:4.0px solid transparent;border-right:4.0px solid transparent;border-top:5px solid #fff;"></div>
<div style="left:979.7px;top:669.7px;font-size:13.12px;line-height:15.7px;color:#f0f0f0;white-space:pre;transform:scaleX(0.857);transform-origin:0 0;">16</div>
<div style="left:1014.3px;top:674.0px;width:0;height:0;border-left:4.0px solid transparent;border-right:4.0px solid transparent;border-top:5px solid #fff;"></div>
<div style="left:667px;top:699.5px;width:369.2px;height:23.0px;border:2px solid #8f9396;border-radius:5px;"></div>
<div style="left:815.6px;top:705.6px;width:0;height:0;border-left:11.4px solid transparent;border-right:11.4px solid transparent;border-top:12px solid #6a6a6a;"></div>
<div style="left:847.3px;top:705.6px;width:0;height:0;border-left:11.4px solid transparent;border-right:11.4px solid transparent;border-top:12px solid #6a6a6a;"></div>
<div style="left:881.5px;top:705.6px;width:0;height:0;border-left:11.4px solid transparent;border-right:11.4px solid transparent;border-top:12px solid #6a6a6a;"></div>
<div style="left:1088.8px;top:11px;width:780.7px;height:467.3px;background:#141414;"></div>
<div style="left:1088.8px;top:11px;width:780.7px;height:50px;background:#ffffff;"></div>
<svg style="position:absolute;left:1097.4px;top:17px" width="16" height="16" viewBox="0 0 16 16"><rect x="0.7" y="0.7" width="14.6" height="14.6" fill="#e8f2f6" stroke="#5b8fa8" stroke-width="1.4"/><path d="M1 1 L8.8 8.0 L1 15" fill="none" stroke="#5b8fa8" stroke-width="1.6"/><path d="M7.2 4.8 H15 M9.6 8.0 H15 M7.2 11.52 H15" stroke="#5b8fa8" stroke-width="1.5"/><rect x="7.2" y="12.48" width="7.800000000000001" height="3.2" fill="#5b8fa8"/></svg>
<div style="left:1118.5px;top:17.9px;font-size:13.65px;line-height:16.4px;color:#141414;white-space:pre;transform:scaleX(0.838);transform-origin:0 0;">[Midi_Seq_Core]</div>
<div style="left:1749px;top:25px;width:11px;height:1.2px;background:#111;"></div>
<div style="left:1795px;top:20px;width:10.5px;height:10.5px;border:1.2px solid #111;"></div>
<svg style="position:absolute;left:1840.7px;top:20px" width="10.5" height="10.5" viewBox="0 0 10.5 10.5"><path d="M0 0L10.5 10.5M10.5 0L0 10.5" stroke="#111" stroke-width="1.2"/></svg>
<div style="left:1096.4px;top:44.2px;font-size:13.12px;line-height:15.7px;color:#1a1a1a;white-space:pre;transform:scaleX(0.837);transform-origin:0 0;">File</div>
<div style="left:1128.0px;top:44.2px;font-size:13.12px;line-height:15.7px;color:#1a1a1a;white-space:pre;transform:scaleX(0.880);transform-origin:0 0;">Edit</div>
<div style="left:1162.0px;top:44.2px;font-size:13.12px;line-height:15.7px;color:#1a1a1a;white-space:pre;transform:scaleX(0.856);transform-origin:0 0;">Boards</div>
<div style="left:1212.5px;top:44.2px;font-size:13.12px;line-height:15.7px;color:#1a1a1a;white-space:pre;transform:scaleX(0.884);transform-origin:0 0;">MSDP Windows</div>
<div style="left:1310.3px;top:44.2px;font-size:13.12px;line-height:15.7px;color:#1a1a1a;white-space:pre;transform:scaleX(0.909);transform-origin:0 0;">Record Audio</div>
<div style="left:1396.4px;top:44.2px;font-size:13.12px;line-height:15.7px;color:#1a1a1a;white-space:pre;transform:scaleX(0.906);transform-origin:0 0;">Audio Engine</div>
<div style="left:1481.0px;top:44.2px;font-size:13.12px;line-height:15.7px;color:#1a1a1a;white-space:pre;transform:scaleX(0.828);transform-origin:0 0;">Scores</div>
<div style="left:1529.0px;top:44.2px;font-size:13.12px;line-height:15.7px;color:#1a1a1a;white-space:pre;transform:scaleX(0.913);transform-origin:0 0;">Virtual Controllers</div>
<div style="left:1638.0px;top:44.2px;font-size:13.12px;line-height:15.7px;color:#1a1a1a;white-space:pre;transform:scaleX(0.939);transform-origin:0 0;">Window</div>
<div style="left:1696.0px;top:44.2px;font-size:13.12px;line-height:15.7px;color:#1a1a1a;white-space:pre;transform:scaleX(0.912);transform-origin:0 0;">Help</div>
<div style="left:1089px;top:61px;width:780px;height:279.6px;background:#141414;"></div>
<div style="left:1133.6px;top:76.7px;width:701.4px;height:196.2px;background:#1c1c1c;"></div>
<div style="left:1747.3px;top:76.7px;width:43.8px;height:196.2px;background:#2c4d6c;"></div>
<div style="left:1133.6px;top:84.8px;width:701.4000000000001px;height:1px;background:rgba(255,255,255,0.09);"></div>
<div style="left:1133.6px;top:94.2px;width:701.4000000000001px;height:1px;background:rgba(255,255,255,0.09);"></div>
<div style="left:1133.6px;top:103.6px;width:701.4000000000001px;height:1px;background:rgba(255,255,255,0.09);"></div>
<div style="left:1133.6px;top:113.1px;width:701.4000000000001px;height:1px;background:rgba(255,255,255,0.09);"></div>
<div style="left:1133.6px;top:122.5px;width:701.4000000000001px;height:1px;background:rgba(255,255,255,0.09);"></div>
<div style="left:1133.6px;top:132.0px;width:701.4000000000001px;height:1px;background:rgba(255,255,255,0.09);"></div>
<div style="left:1133.6px;top:141.4px;width:701.4000000000001px;height:1px;background:rgba(255,255,255,0.09);"></div>
<div style="left:1133.6px;top:150.9px;width:701.4000000000001px;height:1px;background:rgba(255,255,255,0.09);"></div>
<div style="left:1133.6px;top:160.3px;width:701.4000000000001px;height:1px;background:rgba(255,255,255,0.09);"></div>
<div style="left:1133.6px;top:169.8px;width:701.4000000000001px;height:1px;background:rgba(255,255,255,0.09);"></div>
<div style="left:1133.6px;top:179.2px;width:701.4000000000001px;height:1px;background:rgba(255,255,255,0.09);"></div>
<div style="left:1133.6px;top:188.7px;width:701.4000000000001px;height:1px;background:rgba(255,255,255,0.09);"></div>
<div style="left:1133.6px;top:198.1px;width:701.4000000000001px;height:1px;background:rgba(255,255,255,0.09);"></div>
<div style="left:1133.6px;top:207.6px;width:701.4000000000001px;height:1px;background:rgba(255,255,255,0.09);"></div>
<div style="left:1133.6px;top:217.1px;width:701.4000000000001px;height:1px;background:rgba(255,255,255,0.09);"></div>
<div style="left:1133.6px;top:226.5px;width:701.4000000000001px;height:1px;background:rgba(255,255,255,0.09);"></div>
<div style="left:1133.6px;top:235.9px;width:701.4000000000001px;height:1px;background:rgba(255,255,255,0.09);"></div>
<div style="left:1133.6px;top:245.4px;width:701.4000000000001px;height:1px;background:rgba(255,255,255,0.09);"></div>
<div style="left:1133.6px;top:254.8px;width:701.4000000000001px;height:1px;background:rgba(255,255,255,0.09);"></div>
<div style="left:1133.6px;top:264.3px;width:701.4000000000001px;height:1px;background:rgba(255,255,255,0.09);"></div>
<div style="left:75.8px;top:0px;width:0px;height:0px;"></div>
<div style="left:75.8px;top:0px;width:0px;height:0px;"></div>
<div style="left:75.8px;top:0px;width:0px;height:0px;"></div>
<div style="left:75.8px;top:0px;width:0px;height:0px;"></div>
<div style="left:75.8px;top:0px;width:0px;height:0px;"></div>
<div style="left:75.8px;top:0px;width:0px;height:0px;"></div>
<div style="left:75.8px;top:0px;width:0px;height:0px;"></div>
<div style="left:75.8px;top:0px;width:0px;height:0px;"></div>
<div style="left:75.8px;top:0px;width:0px;height:0px;"></div>
<div style="left:75.8px;top:0px;width:0px;height:0px;"></div>
<div style="left:75.8px;top:0px;width:0px;height:0px;"></div>
<div style="left:75.8px;top:0px;width:0px;height:0px;"></div>
<div style="left:75.8px;top:0px;width:0px;height:0px;"></div>
<div style="left:75.8px;top:0px;width:0px;height:0px;"></div>
<div style="left:75.8px;top:0px;width:0px;height:0px;"></div>
<div style="left:75.8px;top:0px;width:0px;height:0px;"></div>
<div style="left:75.8px;top:0px;width:0px;height:0px;"></div>
<div style="left:75.8px;top:0px;width:0px;height:0px;"></div>
<div style="left:75.8px;top:0px;width:0px;height:0px;"></div>
<div style="left:1176.8px;top:76.7px;width:1.2px;height:196.2px;background:#5a8e94;"></div>
<div style="left:1220.7px;top:76.7px;width:1.2px;height:196.2px;background:#5a8e94;"></div>
<div style="left:1264.5px;top:76.7px;width:1.2px;height:196.2px;background:#5a8e94;"></div>
<div style="left:1308.3px;top:76.7px;width:1.2px;height:196.2px;background:#5a8e94;"></div>
<div style="left:1352.2px;top:76.7px;width:1.2px;height:196.2px;background:#5a8e94;"></div>
<div style="left:1396.0px;top:76.7px;width:1.2px;height:196.2px;background:#5a8e94;"></div>
<div style="left:1439.9px;top:76.7px;width:1.2px;height:196.2px;background:#5a8e94;"></div>
<div style="left:1483.7px;top:76.7px;width:1.2px;height:196.2px;background:#5a8e94;"></div>
<div style="left:1527.5px;top:76.7px;width:1.2px;height:196.2px;background:#5a8e94;"></div>
<div style="left:1571.4px;top:76.7px;width:1.2px;height:196.2px;background:#5a8e94;"></div>
<div style="left:1615.2px;top:76.7px;width:1.2px;height:196.2px;background:#5a8e94;"></div>
<div style="left:1659.1px;top:76.7px;width:1.2px;height:196.2px;background:#5a8e94;"></div>
<div style="left:1702.9px;top:76.7px;width:1.2px;height:196.2px;background:#5a8e94;"></div>
<div style="left:1746.7px;top:76.7px;width:1.2px;height:196.2px;background:#5a8e94;"></div>
<div style="left:1790.6px;top:76.7px;width:1.2px;height:196.2px;background:#5a8e94;"></div>
<div style="left:1134.2px;top:255.3px;width:42.6px;height:9.0px;background:#3aa0f0;"></div>
<div style="left:1178.0px;top:236.4px;width:42.6px;height:8.9px;background:#f7d96b;"></div>
<div style="left:1221.9px;top:189.2px;width:42.6px;height:8.9px;background:#f7d96b;"></div>
<div style="left:1265.7px;top:123.0px;width:42.6px;height:9.0px;background:#f7d96b;"></div>
<div style="left:1309.5px;top:170.3px;width:42.6px;height:8.9px;background:#3aa0f0;"></div>
<div style="left:1353.4px;top:189.2px;width:42.6px;height:8.9px;background:#f7d96b;"></div>
<div style="left:1397.2px;top:255.3px;width:42.6px;height:9.0px;background:#f7d96b;"></div>
<div style="left:1441.1px;top:170.3px;width:42.6px;height:8.9px;background:#f7d96b;"></div>
<div style="left:1484.9px;top:189.2px;width:42.6px;height:8.9px;background:#3aa0f0;"></div>
<div style="left:1528.7px;top:78.2px;width:42.6px;height:6.5px;background:#f7d96b;"></div>
<div style="left:1572.6px;top:255.3px;width:42.6px;height:9.0px;background:#f7d96b;"></div>
<div style="left:1616.4px;top:170.3px;width:42.6px;height:8.9px;background:#f7d96b;"></div>
<div style="left:1660.2px;top:255.3px;width:42.6px;height:9.0px;background:#3aa0f0;"></div>
<div style="left:1704.1px;top:236.4px;width:42.6px;height:8.9px;background:#f7d96b;"></div>
<div style="left:1747.9px;top:170.3px;width:42.6px;height:8.9px;background:#b7c2a6;"></div>
<div style="left:1791.8px;top:236.4px;width:42.6px;height:8.9px;background:#f7d96b;"></div>
<div style="left:1133.6px;top:61.5px;width:701.4px;height:15.2px;background:#131722;border-top:1.5px solid #7cc4dc;"></div>
<div style="left:1133.6px;top:62px;width:2px;height:211px;background:#6ad0ec;"></div>
<div style="left:1133.6px;top:75.7px;width:701.4000000000001px;height:2px;background:#6ad0ec;"></div>
<div style="left:1135.1px;top:64.5px;width:0;height:0;border-top:5.0px solid transparent;border-bottom:5.0px solid transparent;border-left:4.5px solid #3a5a70;"></div>
<div style="left:1142.5px;top:65.3px;font-size:9.5px;line-height:11.4px;color:#fff;white-space:pre;">1</div>
<div style="left:1816.4px;top:65.3px;font-size:9.5px;line-height:11.4px;color:#fff;white-space:pre;">16</div>
<div style="left:1830px;top:64.5px;width:0;height:0;border-top:5px solid transparent;border-bottom:5px solid transparent;border-right:5px solid #3a5a70;"></div>
<div style="left:1835px;top:62px;width:1.5px;height:211px;background:#4a6a72;"></div>
<div style="left:1113.8px;top:76.7px;width:19.8px;height:196.2px;background:#f2f2f2;border-left:1px solid #5ab0c0;"></div>
<div style="left:1114.8px;top:85.7px;width:18.0px;height:8.6px;background:#050505;"></div>
<div style="left:1114.5px;top:103.6px;width:19px;height:1px;background:#b8b8b8;"></div>
<div style="left:1114.8px;top:114.0px;width:18.0px;height:8.6px;background:#050505;"></div>
<div style="left:1114.8px;top:132.9px;width:18.0px;height:8.6px;background:#050505;"></div>
<div style="left:1114.5px;top:150.9px;width:19px;height:1px;background:#b8b8b8;"></div>
<div style="left:1114.8px;top:161.2px;width:18.0px;height:8.6px;background:#050505;"></div>
<div style="left:1114.8px;top:180.2px;width:18.0px;height:8.6px;background:#050505;"></div>
<div style="left:1114.8px;top:199.0px;width:18.0px;height:8.6px;background:#050505;"></div>
<div style="left:1114.5px;top:217.0px;width:19px;height:1px;background:#b8b8b8;"></div>
<div style="left:1114.8px;top:227.4px;width:18.0px;height:8.6px;background:#050505;"></div>
<div style="left:1114.8px;top:246.3px;width:18.0px;height:8.6px;background:#050505;"></div>
<div style="left:1114.5px;top:264.3px;width:19px;height:1px;background:#b8b8b8;"></div>
<div style="left:1092.6px;top:139.8px;font-size:9.97px;line-height:12.0px;color:#f0f0f0;white-space:pre;transform:scaleX(0.981);transform-origin:0 0;">C4</div>
<div style="left:1089px;top:150.3px;width:24.8px;height:1.3px;background:#5ad0e0;"></div>
<div style="left:1092.6px;top:252.8px;font-size:9.97px;line-height:12.0px;color:#f0f0f0;white-space:pre;transform:scaleX(0.981);transform-origin:0 0;">C3</div>
<div style="left:1089px;top:263px;width:24.8px;height:1.3px;background:#5ad0e0;"></div>
<div style="left:1853px;top:64px;width:1.5px;height:206px;background:#6a6a6a;"></div>
<div style="left:1841px;top:271px;width:24px;height:2px;background:#8a8a8a;"></div>
<div style="left:1089px;top:273px;width:780px;height:1.8px;background:#5a6266;"></div>
<div style="left:1088.8px;top:61px;width:1.3px;height:279.6px;background:#555a5c;"></div>
<div style="left:1868.2px;top:61px;width:1.3px;height:279.6px;background:#3a3c3e;"></div>
<div style="left:1096.4px;top:282px;width:87.6px;height:22.7px;background:#6bd0f5;border-radius:1.5px;"></div>
<div style="left:1188.8px;top:282px;width:87.4px;height:22.7px;background:#6bd0f5;border-radius:1.5px;"></div>
<div style="left:1280.3px;top:282px;width:86.7px;height:22.7px;background:#181818;border:1.3px solid #5ab8b0;border-radius:1.5px;"></div>
<div style="left:1371.8px;top:282px;width:87.7px;height:22.7px;background:#6bd0f5;border-radius:1.5px;"></div>
<div style="left:1463.5px;top:282px;width:87.9px;height:22.7px;background:#181818;border:1.3px solid #5ab8b0;border-radius:1.5px;"></div>
<div style="left:1555.1px;top:282px;width:87.2px;height:22.7px;background:#6bd0f5;border-radius:1.5px;"></div>
<div style="left:1647px;top:282px;width:87.4px;height:22.7px;background:#181818;border:1.3px solid #5ab8b0;border-radius:1.5px;"></div>
<div style="left:1738.3px;top:282px;width:87.2px;height:22.7px;background:#181818;border:1.3px solid #5ab8b0;border-radius:1.5px;"></div>
<div style="left:1105.4px;top:286.2px;font-size:13.65px;line-height:16.4px;color:#f4f4f4;white-space:pre;transform:scaleX(0.907);transform-origin:0 0;">8 Active Sequences</div>
<div style="left:1844.8px;top:279.2px;font-size:12.6px;line-height:15.1px;color:#f0f0f0;white-space:pre;transform:scaleX(0.856);transform-origin:0 0;">18.</div>
<div style="left:1829.8px;top:293.0px;font-size:12.6px;line-height:15.1px;color:#f0f0f0;white-space:pre;transform:scaleX(0.931);transform-origin:0 0;">Zoom</div>
<div style="left:1096px;top:309.4px;width:768.4px;height:25.9px;background:#1e1e1e;border:2px solid #4e4a46;"></div>
<div style="left:1100.0px;top:312.6px;font-size:15.23px;line-height:18.3px;color:#f2f2f2;white-space:pre;transform:scaleX(0.923);transform-origin:0 0;">Subtractive 739</div>
<div style="left:1088.8px;top:340.6px;width:780.7px;height:137.7px;background:#5f6a74;"></div>
<div style="left:1198.4px;top:347.1px;font-size:18.38px;line-height:22.1px;color:#f4f4f4;white-space:pre;letter-spacing:5.5px;transform:scaleX(0.825);transform-origin:0 0;">TIME TOOLS</div>
<div style="left:1568.3px;top:343.3px;font-size:18.38px;line-height:22.1px;color:#f4f4f4;white-space:pre;letter-spacing:5.5px;transform:scaleX(0.820);transform-origin:0 0;">DESIGN TOOLS</div>
<div style="left:1096px;top:367px;width:772px;height:1.6px;background:#e8eef2;"></div>
<div style="left:1435px;top:367.5px;width:1.5px;height:103px;background:#e8eef2;"></div>
<div style="left:1096px;top:376.5px;width:104.7px;height:93.0px;background:linear-gradient(#2e2e2e,#1a1a1a);"></div>
<div style="left:1141.3px;top:392.9px;font-size:17.85px;line-height:21.4px;color:#f4f4f4;white-space:pre;transform:scaleX(0.940);transform-origin:0 0;">3.</div>
<div style="left:1105.0px;top:413.1px;font-size:17.85px;line-height:21.4px;color:#f4f4f4;white-space:pre;">Sequencer</div>
<div style="left:1136.8px;top:432.4px;font-size:17.85px;line-height:21.4px;color:#f4f4f4;white-space:pre;transform:scaleX(0.966);transform-origin:0 0;">On</div>
<div style="left:1209.5px;top:380.0px;font-size:12.6px;line-height:15.1px;color:#f2f2f2;white-space:pre;transform:scaleX(0.900);transform-origin:0 0;">4. Beat Source</div>
<div style="left:1204.2px;top:393.4px;width:85.7px;height:22.4px;background:linear-gradient(#2e2e2e,#1b1b1b);"></div>
<div style="left:1226.6px;top:397.3px;font-size:13.12px;line-height:15.7px;color:#f0f0f0;white-space:pre;transform:scaleX(0.907);transform-origin:0 0;">Custom</div>
<div style="left:1295.0px;top:380.0px;font-size:12.6px;line-height:15.1px;color:#f2f2f2;white-space:pre;transform:scaleX(0.903);transform-origin:0 0;">5. Cust. BPM</div>
<div style="left:1293.3px;top:393.4px;width:72.5px;height:21.3px;background:#1e1e1e;"></div>
<div style="left:1297.0px;top:398.5px;width:0;height:0;border-top:5.5px solid transparent;border-bottom:5.5px solid transparent;border-left:5px solid #707070;"></div>
<div style="left:1305.0px;top:397.2px;font-size:13.12px;line-height:15.7px;color:#f0f0f0;white-space:pre;transform:scaleX(0.905);transform-origin:0 0;">92.</div>
<div style="left:1217.5px;top:436.0px;font-size:12.6px;line-height:15.1px;color:#f2f2f2;white-space:pre;transform:scaleX(0.914);transform-origin:0 0;">6. Step Division</div>
<div style="left:1204.2px;top:449.4px;width:109.5px;height:21.3px;background:#1e1e1e;"></div>
<div style="left:1210.0px;top:452.7px;font-size:13.12px;line-height:15.7px;color:#f0f0f0;white-space:pre;transform:scaleX(0.860);transform-origin:0 0;">Eighth</div>
<div style="left:1298.5px;top:457.5px;width:0;height:0;border-left:4.5px solid transparent;border-right:4.5px solid transparent;border-top:5px solid #fff;"></div>
<div style="left:1328.0px;top:436.0px;font-size:12.6px;line-height:15.1px;color:#f2f2f2;white-space:pre;transform:scaleX(0.959);transform-origin:0 0;">7. Note Duration</div>
<div style="left:1317.6px;top:449.4px;width:109.3px;height:21.3px;background:#1e1e1e;"></div>
<div style="left:1323.5px;top:452.7px;font-size:13.12px;line-height:15.7px;color:#f0f0f0;white-space:pre;transform:scaleX(0.860);transform-origin:0 0;">Eighth</div>
<div style="left:1411.5px;top:457.5px;width:0;height:0;border-left:4.5px solid transparent;border-right:4.5px solid transparent;border-top:5px solid #fff;"></div>
<div style="left:1447.3px;top:379.8px;font-size:12.6px;line-height:15.1px;color:#f2f2f2;white-space:pre;transform:scaleX(0.888);transform-origin:0 0;">9. Edit Sequence</div>
<div style="left:1442.6px;top:393.4px;width:47.1px;height:23.1px;background:#1e1e1e;"></div>
<div style="left:1449.0px;top:397.6px;font-size:13.12px;line-height:15.7px;color:#f0f0f0;white-space:pre;transform:scaleX(0.822);transform-origin:0 0;">1</div>
<div style="left:1473.5px;top:402.4px;width:0;height:0;border-left:4.5px solid transparent;border-right:4.5px solid transparent;border-top:5px solid #fff;"></div>
<div style="left:1543.6px;top:379.8px;font-size:12.6px;line-height:15.1px;color:#f2f2f2;white-space:pre;transform:scaleX(0.884);transform-origin:0 0;">10. # of Sequences</div>
<div style="left:1569px;top:393.3px;width:47.9px;height:23.6px;background:#1e1e1e;"></div>
<div style="left:1576.0px;top:397.8px;font-size:13.12px;line-height:15.7px;color:#f0f0f0;white-space:pre;transform:scaleX(0.959);transform-origin:0 0;">8</div>
<div style="left:1600.5px;top:402.6px;width:0;height:0;border-left:4.5px solid transparent;border-right:4.5px solid transparent;border-top:5px solid #fff;"></div>
<div style="left:1650.4px;top:379.8px;font-size:12.6px;line-height:15.1px;color:#f2f2f2;white-space:pre;transform:scaleX(0.903);transform-origin:0 0;">11. # of Steps</div>
<div style="left:1656.9px;top:393.3px;width:47.9px;height:23.6px;background:#1e1e1e;"></div>
<div style="left:1660.5px;top:399.5px;width:0;height:0;border-top:5.5px solid transparent;border-bottom:5.5px solid transparent;border-left:5px solid #707070;"></div>
<div style="left:1669.0px;top:398.2px;font-size:13.12px;line-height:15.7px;color:#f0f0f0;white-space:pre;transform:scaleX(0.891);transform-origin:0 0;">16</div>
<div style="left:1730.2px;top:379.8px;font-size:12.6px;line-height:15.1px;color:#f2f2f2;white-space:pre;transform:scaleX(0.910);transform-origin:0 0;">12. Display mode</div>
<div style="left:1726.8px;top:393.3px;width:90.9px;height:21.7px;background:#1e1e1e;"></div>
<div style="left:1733.0px;top:396.8px;font-size:13.12px;line-height:15.7px;color:#f0f0f0;white-space:pre;transform:scaleX(0.891);transform-origin:0 0;">Pitch</div>
<div style="left:1802.5px;top:401.6px;width:0;height:0;border-left:4.5px solid transparent;border-right:4.5px solid transparent;border-top:5px solid #fff;"></div>
<div style="left:1823.2px;top:376.4px;width:38.8px;height:94.4px;background:linear-gradient(#2e2e2e,#1b1b1b);"></div>
<div style="left:1842.6px;top:416.9px;font-size:12px;line-height:14.4px;color:#f0f0f0;white-space:pre;transform:scaleX(0.920);transform-origin:0 0;"></div>
<div style="left:1835.1px;top:402.5px;font-size:12.6px;line-height:15.1px;color:#f0f0f0;white-space:pre;transform:scaleX(0.856);transform-origin:0 0;">13.</div>
<div style="left:1827.1px;top:416.0px;font-size:12.6px;line-height:15.1px;color:#f0f0f0;white-space:pre;transform:scaleX(0.962);transform-origin:0 0;">Zoom</div>
<div style="left:1829.1px;top:429.0px;font-size:12.6px;line-height:15.1px;color:#f0f0f0;white-space:pre;transform:scaleX(0.964);transform-origin:0 0;">to Fit</div>
<div style="left:1464.6px;top:434.6px;font-size:12.6px;line-height:15.1px;color:#f2f2f2;white-space:pre;transform:scaleX(0.954);transform-origin:0 0;">14-15. Snap to Key / Scale</div>
<div style="left:1454.2px;top:449.3px;width:64.4px;height:21.3px;background:#1e1e1e;"></div>
<div style="left:1461.0px;top:452.6px;font-size:13.12px;line-height:15.7px;color:#f0f0f0;white-space:pre;transform:scaleX(0.897);transform-origin:0 0;">C</div>
<div style="left:1503.5px;top:457.5px;width:0;height:0;border-left:4.5px solid transparent;border-right:4.5px solid transparent;border-top:5px solid #fff;"></div>
<div style="left:1527px;top:449.3px;width:83.6px;height:21.3px;background:#1e1e1e;"></div>
<div style="left:1533.5px;top:452.6px;font-size:13.12px;line-height:15.7px;color:#f0f0f0;white-space:pre;transform:scaleX(0.887);transform-origin:0 0;">Pentatonic</div>
<div style="left:1595.5px;top:457.5px;width:0;height:0;border-left:4.5px solid transparent;border-right:4.5px solid transparent;border-top:5px solid #fff;"></div>
<div style="left:1652.2px;top:436.0px;font-size:12.6px;line-height:15.1px;color:#f2f2f2;white-space:pre;transform:scaleX(0.947);transform-origin:0 0;">16. direction</div>
<div style="left:1640px;top:449.3px;width:86.8px;height:21.3px;background:#1e1e1e;"></div>
<div style="left:1646.5px;top:452.6px;font-size:13.12px;line-height:15.7px;color:#f0f0f0;white-space:pre;transform:scaleX(0.873);transform-origin:0 0;">Forward</div>
<div style="left:1711.5px;top:457.5px;width:0;height:0;border-left:4.5px solid transparent;border-right:4.5px solid transparent;border-top:5px solid #fff;"></div>
<div style="left:1746px;top:418px;width:62.2px;height:52.8px;background:linear-gradient(#2e2e2e,#1b1b1b);"></div>
<div style="left:1777.1px;top:437.7px;font-size:12px;line-height:14.4px;color:#f0f0f0;white-space:pre;transform:scaleX(0.920);transform-origin:0 0;"></div>
<div style="left:1770.1px;top:427.1px;font-size:11.55px;line-height:13.9px;color:#f0f0f0;white-space:pre;transform:scaleX(0.872);transform-origin:0 0;">17.</div>
<div style="left:1755.1px;top:437.6px;font-size:11.55px;line-height:13.9px;color:#f0f0f0;white-space:pre;transform:scaleX(0.902);transform-origin:0 0;">Scramble</div>
<div style="left:1763.1px;top:449.6px;font-size:11.55px;line-height:13.9px;color:#f0f0f0;white-space:pre;transform:scaleX(0.928);transform-origin:0 0;">Notes</div>
<div style="left:1183.4px;top:494.9px;width:632.6px;height:429.1px;background:#5f666d;"></div>
<div style="left:1183.4px;top:494.9px;width:632.6px;height:29.7px;background:#ffffff;"></div>
<div style="left:1191.3px;top:502.8px;font-size:12.6px;line-height:15.1px;color:#8a9a90;white-space:pre;transform:scaleX(0.895);transform-origin:0 0;">System Preferences</div>
<div style="left:1796px;top:502px;width:18.5px;height:18.6px;background:#e4e4e4;"></div>
<div style="left:1437.5px;top:-0.2px;font-size:1px;line-height:1.2px;color:#fff;white-space:pre;transform:scaleX(0.920);transform-origin:0 0;"></div>
<div style="left:1195.7px;top:536.0px;font-size:16.8px;line-height:20.2px;color:#2a2c2e;white-space:pre;transform:scaleX(0.937);transform-origin:0 0;">SpectraView Big View</div>
<div style="left:1192.3px;top:555.2px;width:611.4px;height:353.5px;background:#000;"></div>
<div style="left:1192.3px;top:555.2px;width:5.4px;height:353.5px;background:linear-gradient(#000 0.0%,#000 16.0%,#050108 16.7%,#020003 18.1%,#060109 19.5%,#040106 21.0%,#0e0315 22.4%,#0f0316 23.8%,#12041b 25.2%,#13041d 26.6%,#29093b 28.0%,#1b0629 29.4%,#210730 30.9%,#451161 32.3%,#2d0a41 33.7%,#3a0e53 35.1%,#3f0f5a 36.5%,#712094 37.9%,#651c87 39.3%,#5a187a 40.8%,#44ba70 42.2%,#44ba70 43.6%,#722095 45.0%,#61c260 46.4%,#8acc49 47.8%,#84cc4b 49.2%,#44ba71 50.7%,#47bb6f 52.1%,#4b1368 53.5%,#4b1368 54.9%,#4b1368 56.3%,#4b1368 57.7%,#4b1368 59.1%,#4b1368 60.0%,#3b5f96 60.1%,#4dbd6c 68.0%,#75c754 85.0%,#7eca4f 100.0%)"></div><div style="left:1197.3px;top:555.2px;width:5.4px;height:353.5px;background:linear-gradient(#000 0.0%,#000 16.0%,#000001 16.7%,#010002 18.1%,#020003 19.5%,#060109 21.0%,#11031a 22.4%,#08020c 23.8%,#0e0316 25.2%,#180524 26.6%,#230834 28.0%,#2b0a3f 29.4%,#270939 30.9%,#370d4e 32.3%,#300b45 33.7%,#4f156d 35.1%,#491266 36.5%,#5f1a80 37.9%,#5f1a80 39.3%,#4a1367 40.8%,#1f9e89 42.2%,#30b17d 43.6%,#44ba70 45.0%,#cac72f 46.4%,#d5c62b 47.8%,#81cb4d 49.2%,#bbc835 50.7%,#81cb4d 52.1%,#a9c93c 53.5%,#86cc4a 54.9%,#b8c836 56.3%,#c2c733 57.7%,#96cb44 59.1%,#96cb44 60.0%,#6dc558 60.1%,#afc93a 85.0%,#b9c836 100.0%)"></div><div style="left:1202.3px;top:555.2px;width:5.4px;height:353.5px;background:linear-gradient(#000 0.0%,#000 16.0%,#010002 16.7%,#000000 18.1%,#000000 19.5%,#0c0213 21.0%,#07010b 22.4%,#13041d 23.8%,#150421 25.2%,#100319 26.6%,#150420 28.0%,#1e072d 29.4%,#2a0a3d 30.9%,#300b45 32.3%,#380e51 33.7%,#3c0f56 35.1%,#50156e 36.5%,#451161 37.9%,#50156e 39.3%,#3a0e53 40.8%,#722095 42.2%,#30b17d 43.6%,#1f9e89 45.0%,#cbc72f 46.4%,#e1c526 47.8%,#b2c939 49.2%,#e3c426 50.7%,#c7c731 52.1%,#b1c939 53.5%,#e3c426 54.9%,#c8c730 56.3%,#aac93c 57.7%,#bdc834 59.1%,#bdc834 60.0%,#29aa82 60.1%,#3ab876 85.0%,#4dbd6c 100.0%)"></div><div style="left:1207.3px;top:555.2px;width:5.4px;height:353.5px;background:linear-gradient(#000 0.0%,#000 16.0%,#000000 16.7%,#010001 18.1%,#030104 19.5%,#060109 21.0%,#0c0212 22.4%,#0b0211 23.8%,#0f0317 25.2%,#1c062a 26.6%,#100319 28.0%,#240836 29.4%,#320c48 30.9%,#2c0a3f 32.3%,#461163 33.7%,#380d50 35.1%,#591879 36.5%,#51156f 37.9%,#6b1e8e 39.3%,#6d1f8f 40.8%,#30b17d 42.2%,#27a883 43.6%,#722095 45.0%,#2bab81 46.4%,#26a684 47.8%,#24a386 49.2%,#2cad80 50.7%,#25a585 52.1%,#2cad80 53.5%,#2dae7f 54.9%,#20a088 56.3%,#22a287 57.7%,#2cad80 59.1%,#2cad80 60.0%,#29aa82 60.1%,#3cb876 85.0%,#4dbd6c 100.0%)"></div><div style="left:1212.3px;top:555.2px;width:5.4px;height:353.5px;background:linear-gradient(#000 0.0%,#000 16.0%,#050107 16.7%,#020003 18.1%,#07010b 19.5%,#050108 21.0%,#0b0212 22.4%,#07010b 23.8%,#0f0318 25.2%,#0f0318 26.6%,#190526 28.0%,#2e0b42 29.4%,#2e0b43 30.9%,#320c49 32.3%,#50156e 33.7%,#320c49 35.1%,#5c197c 36.5%,#722196 37.9%,#6e1f91 39.3%,#6d1f8f 40.8%,#1f9e89 42.2%,#27a883 43.6%,#1f9e89 45.0%,#60c260 46.4%,#a5ca3e 47.8%,#87cc4a 49.2%,#6dc558 50.7%,#adc93b 52.1%,#6cc559 53.5%,#50be69 54.9%,#70c657 56.3%,#56bf66 57.7%,#72c756 59.1%,#72c756 60.0%,#29aa82 60.1%,#33b57a 85.0%,#4dbd6c 100.0%)"></div><div style="left:1217.4px;top:555.2px;width:5.4px;height:353.5px;background:linear-gradient(#000 0.0%,#000 16.0%,#050107 16.7%,#020003 18.1%,#09020e 19.5%,#060109 21.0%,#07010a 22.4%,#0e0316 23.8%,#160421 25.2%,#0f0317 26.6%,#240835 28.0%,#310b46 29.4%,#350d4c 30.9%,#1f9e89 32.3%,#3f0f5a 33.7%,#330c49 35.1%,#43105f 36.5%,#561775 37.9%,#1f9e89 39.3%,#43105f 40.8%,#1f9e89 42.2%,#1f9e89 43.6%,#1f9e89 45.0%,#c2c733 46.4%,#94cb45 47.8%,#d9c629 49.2%,#c5c731 50.7%,#c2c732 52.1%,#8acc48 53.5%,#83cb4c 54.9%,#9fca40 56.3%,#a0ca40 57.7%,#98cb43 59.1%,#98cb43 60.0%,#3cb875 60.1%,#64c35e 85.0%,#7eca4f 100.0%)"></div><div style="left:1222.4px;top:555.2px;width:5.4px;height:353.5px;background:linear-gradient(#000 0.0%,#000 16.0%,#000000 16.7%,#000000 18.1%,#010001 19.5%,#060109 21.0%,#0c0213 22.4%,#11031b 23.8%,#0f0317 25.2%,#1d062b 26.6%,#1e072d 28.0%,#20072f 29.4%,#260937 30.9%,#320c48 32.3%,#380d50 33.7%,#41105d 35.1%,#51156f 36.5%,#441160 37.9%,#561775 39.3%,#712094 40.8%,#722095 42.2%,#30b17d 43.6%,#1f9e89 45.0%,#83cb4c 46.4%,#67c45c 47.8%,#a6ca3d 49.2%,#97cb44 50.7%,#aec93b 52.1%,#87cc49 53.5%,#7eca4f 54.9%,#83cb4c 56.3%,#76c853 57.7%,#54bf67 59.1%,#54bf67 60.0%,#3cb875 60.1%,#6bc55a 85.0%,#7eca4f 100.0%)"></div><div style="left:1227.4px;top:555.2px;width:5.4px;height:353.5px;background:linear-gradient(#000 0.0%,#000 16.0%,#000000 16.7%,#000000 18.1%,#09020e 19.5%,#020003 21.0%,#0e0316 22.4%,#0e0316 23.8%,#13041e 25.2%,#1d062c 26.6%,#170524 28.0%,#260938 29.4%,#14041f 30.9%,#340c4a 32.3%,#390e52 33.7%,#42105e 35.1%,#320c48 36.5%,#4e146b 37.9%,#3f0f59 39.3%,#3f0f5a 40.8%,#44ba70 42.2%,#30b17d 43.6%,#30b17d 45.0%,#b9c836 46.4%,#dcc528 47.8%,#b5c838 49.2%,#dfc527 50.7%,#a2ca3f 52.1%,#4b1368 53.5%,#4b1368 54.9%,#4b1368 56.3%,#4b1368 57.7%,#4b1368 59.1%,#4b1368 60.0%,#3b5f96 60.1%,#3cb875 68.0%,#63c35e 85.0%,#6dc558 100.0%)"></div><div style="left:1232.4px;top:555.2px;width:5.4px;height:353.5px;background:linear-gradient(#000 0.0%,#000 16.0%,#010001 16.7%,#030105 18.1%,#0a0210 19.5%,#09020f 21.0%,#050108 22.4%,#0b0211 23.8%,#14041f 25.2%,#0d0314 26.6%,#150420 28.0%,#1b0629 29.4%,#2a0a3d 30.9%,#3a0e53 32.3%,#3e0f59 33.7%,#42105e 35.1%,#41105d 36.5%,#5d197d 37.9%,#591878 39.3%,#5d197d 40.8%,#722095 42.2%,#722095 43.6%,#30b17d 45.0%,#d7c62a 46.4%,#9bca42 47.8%,#97cb43 49.2%,#cec72e 50.7%,#90cb46 52.1%,#4b1368 53.5%,#4b1368 54.9%,#4b1368 56.3%,#4b1368 57.7%,#4b1368 59.1%,#4b1368 60.0%,#32b47c 60.1%,#52be68 85.0%,#6dc558 100.0%)"></div><div style="left:1237.4px;top:555.2px;width:5.4px;height:353.5px;background:linear-gradient(#000 0.0%,#000 16.0%,#000000 16.7%,#030105 18.1%,#0a020f 19.5%,#09020e 21.0%,#030105 22.4%,#13041d 23.8%,#09020e 25.2%,#1d062b 26.6%,#1e072d 28.0%,#29093c 29.4%,#14041f 30.9%,#390e51 32.3%,#370d4f 33.7%,#2b0a3e 35.1%,#380e51 36.5%,#591878 37.9%,#51156f 39.3%,#380d50 40.8%,#27a883 42.2%,#1f9e89 43.6%,#30b17d 45.0%,#4bbc6c 46.4%,#44ba71 47.8%,#7eca4f 49.2%,#46bb70 50.7%,#52be69 52.1%,#4b1368 53.5%,#4b1368 54.9%,#4b1368 56.3%,#4b1368 57.7%,#4b1368 59.1%,#4b1368 60.0%,#32b47c 60.1%,#4dbd6b 85.0%,#6dc558 100.0%)"></div><div style="left:1242.4px;top:555.2px;width:5.4px;height:353.5px;background:linear-gradient(#000 0.0%,#000 16.0%,#000000 16.7%,#000000 18.1%,#06010a 19.5%,#0a0210 21.0%,#09020f 22.4%,#07010b 23.8%,#0c0213 25.2%,#1b0628 26.6%,#0f0317 28.0%,#1a0527 29.4%,#210731 30.9%,#2b0a3f 32.3%,#330c49 33.7%,#400f5b 35.1%,#3f0f5a 36.5%,#531672 37.9%,#5b197b 39.3%,#611b82 40.8%,#722095 42.2%,#722095 43.6%,#722095 45.0%,#23a386 46.4%,#2bac80 47.8%,#28a982 49.2%,#30b27d 50.7%,#2fb17d 52.1%,#28a883 53.5%,#20a088 54.9%,#29aa82 56.3%,#29a982 57.7%,#209f88 59.1%,#209f88 60.0%,#86cc4a 60.1%,#cac72f 85.0%,#d8c62a 100.0%)"></div><div style="left:1247.4px;top:555.2px;width:5.4px;height:353.5px;background:linear-gradient(#000 0.0%,#000 16.0%,#010002 16.7%,#030105 18.1%,#07010b 19.5%,#07010b 21.0%,#08020c 22.4%,#09020d 23.8%,#0a0210 25.2%,#180525 26.6%,#210731 28.0%,#210831 29.4%,#300b45 30.9%,#2b0a3e 32.3%,#330c4a 33.7%,#300b45 35.1%,#3f0f59 36.5%,#4d146b 37.9%,#50156e 39.3%,#631b84 40.8%,#1f9e89 42.2%,#27a883 43.6%,#30b17d 45.0%,#e1c526 46.4%,#e4c225 47.8%,#dec527 49.2%,#e9b824 50.7%,#b0c93a 52.1%,#d0c62d 53.5%,#c4c732 54.9%,#cec72e 56.3%,#b4c838 57.7%,#e4c225 59.1%,#e4c225 60.0%,#86cc4a 60.1%,#b3c938 85.0%,#d8c62a 100.0%)"></div><div style="left:1252.4px;top:555.2px;width:5.4px;height:353.5px;background:linear-gradient(#000 0.0%,#000 16.0%,#000000 16.7%,#000000 18.1%,#0a020f 19.5%,#060109 21.0%,#07010c 22.4%,#12041b 23.8%,#0f0317 25.2%,#11031b 26.6%,#230834 28.0%,#1a0527 29.4%,#360d4d 30.9%,#29093c 32.3%,#380e51 33.7%,#531671 35.1%,#370d4f 36.5%,#5c197c 37.9%,#621b83 39.3%,#441160 40.8%,#27a883 42.2%,#27a883 43.6%,#722095 45.0%,#bac836 46.4%,#e7bc25 47.8%,#eab824 49.2%,#eab724 50.7%,#b0c93a 52.1%,#aac93c 53.5%,#cdc72e 54.9%,#9eca41 56.3%,#bbc835 57.7%,#98cb43 59.1%,#98cb43 60.0%,#86cc4a 60.1%,#cbc72f 85.0%,#d8c62a 100.0%)"></div><div style="left:1257.4px;top:555.2px;width:5.4px;height:353.5px;background:linear-gradient(#000 0.0%,#000 16.0%,#000000 16.7%,#07010b 18.1%,#07010b 19.5%,#030104 21.0%,#0f0317 22.4%,#0e0316 23.8%,#180524 25.2%,#180525 26.6%,#210730 28.0%,#1b0628 29.4%,#320c48 30.9%,#3e0f59 32.3%,#350d4d 33.7%,#3f0f5a 35.1%,#380d50 36.5%,#451162 37.9%,#551673 39.3%,#571776 40.8%,#44ba70 42.2%,#30b17d 43.6%,#1f9e89 45.0%,#d4c62b 46.4%,#e6bf25 47.8%,#cec72e 49.2%,#b7c837 50.7%,#e9b924 52.1%,#4b1368 53.5%,#4b1368 54.9%,#4b1368 56.3%,#4b1368 57.7%,#4b1368 59.1%,#4b1368 60.0%,#4dbd6c 60.1%,#76c853 85.0%,#90cb46 100.0%)"></div><div style="left:1262.5px;top:555.2px;width:5.4px;height:353.5px;background:linear-gradient(#000 0.0%,#000 16.0%,#000000 16.7%,#060109 18.1%,#000000 19.5%,#06010a 21.0%,#050108 22.4%,#08020c 23.8%,#0a0210 25.2%,#100318 26.6%,#0f0318 28.0%,#100319 29.4%,#14041f 30.9%,#1d062c 32.3%,#210730 33.7%,#350d4d 35.1%,#471264 36.5%,#42105d 37.9%,#350d4c 39.3%,#3b0e55 40.8%,#44ba70 42.2%,#27a883 43.6%,#27a883 45.0%,#9eca41 46.4%,#88cc49 47.8%,#d9c629 49.2%,#b9c836 50.7%,#cec62e 52.1%,#4b1368 53.5%,#4b1368 54.9%,#4b1368 56.3%,#4b1368 57.7%,#4b1368 59.1%,#4b1368 60.0%,#3b5f96 60.1%,#4dbd6c 68.0%,#75c754 85.0%,#7eca4f 100.0%)"></div><div style="left:1267.5px;top:555.2px;width:5.4px;height:353.5px;background:linear-gradient(#000 0.0%,#000 16.0%,#000000 16.7%,#030104 18.1%,#000000 19.5%,#050107 21.0%,#100319 22.4%,#09020f 23.8%,#09020d 25.2%,#100319 26.6%,#0e0316 28.0%,#1e072d 29.4%,#14041f 30.9%,#1f9e89 32.3%,#300b45 33.7%,#2c0a40 35.1%,#390e51 36.5%,#541673 37.9%,#451162 39.3%,#4f146d 40.8%,#722095 42.2%,#44ba70 43.6%,#1f9e89 45.0%,#ddc528 46.4%,#8fcb47 47.8%,#a6ca3d 49.2%,#b0c93a 50.7%,#b4c938 52.1%,#99cb43 53.5%,#afc93a 54.9%,#8ccc47 56.3%,#b4c838 57.7%,#b7c837 59.1%,#b7c837 60.0%,#3cb875 60.1%,#66c45c 85.0%,#7eca4f 100.0%)"></div><div style="left:1272.5px;top:555.2px;width:5.4px;height:353.5px;background:linear-gradient(#000 0.0%,#000 16.0%,#000000 16.7%,#060109 18.1%,#040106 19.5%,#040106 21.0%,#050108 22.4%,#0f0317 23.8%,#100319 25.2%,#14041f 26.6%,#12041c 28.0%,#1a0627 29.4%,#160421 30.9%,#300b45 32.3%,#2f0b44 33.7%,#3d0f58 35.1%,#350d4d 36.5%,#4e146c 37.9%,#5a1879 39.3%,#5b197b 40.8%,#30b17d 42.2%,#30b17d 43.6%,#1f9e89 45.0%,#63c35f 46.4%,#7eca4f 47.8%,#b5c838 49.2%,#66c35d 50.7%,#8dcb47 52.1%,#55bf67 53.5%,#53be68 54.9%,#7dc950 56.3%,#5ec161 57.7%,#50be69 59.1%,#50be69 60.0%,#3cb875 60.1%,#61c260 85.0%,#7eca4f 100.0%)"></div><div style="left:1277.5px;top:555.2px;width:5.4px;height:353.5px;background:linear-gradient(#000 0.0%,#000 16.0%,#000000 16.7%,#030105 18.1%,#040106 19.5%,#0b0211 21.0%,#0b0212 22.4%,#10031a 23.8%,#100319 25.2%,#0e0316 26.6%,#11031a 28.0%,#12041c 29.4%,#310c47 30.9%,#20072f 32.3%,#471264 33.7%,#4f146d 35.1%,#441161 36.5%,#611b82 37.9%,#581877 39.3%,#641c85 40.8%,#722095 42.2%,#44ba70 43.6%,#1f9e89 45.0%,#75c754 46.4%,#b3c938 47.8%,#81cb4d 49.2%,#7cc950 50.7%,#67c45c 52.1%,#4dbd6b 53.5%,#63c35f 54.9%,#7cc950 56.3%,#66c35d 57.7%,#5bc063 59.1%,#5bc063 60.0%,#3cb875 60.1%,#70c657 85.0%,#7eca4f 100.0%)"></div><div style="left:1282.5px;top:555.2px;width:5.4px;height:353.5px;background:linear-gradient(#000 0.0%,#000 16.0%,#000000 16.7%,#020004 18.1%,#010002 19.5%,#0c0212 21.0%,#040106 22.4%,#09020e 23.8%,#0f0317 25.2%,#0f0317 26.6%,#13041d 28.0%,#270939 29.4%,#1c062a 30.9%,#240835 32.3%,#3d0f57 33.7%,#451162 35.1%,#40105b 36.5%,#571776 37.9%,#651c86 39.3%,#4f146d 40.8%,#1f9e89 42.2%,#30b17d 43.6%,#1f9e89 45.0%,#6cc559 46.4%,#65c35d 47.8%,#9dca41 49.2%,#75c754 50.7%,#88cc49 52.1%,#7cc950 53.5%,#50bd6a 54.9%,#84cb4b 56.3%,#61c260 57.7%,#6dc559 59.1%,#6dc559 60.0%,#3cb875 60.1%,#65c35d 85.0%,#7eca4f 100.0%)"></div><div style="left:1287.5px;top:555.2px;width:5.4px;height:353.5px;background:linear-gradient(#000 0.0%,#000 16.0%,#000000 16.7%,#000000 18.1%,#000000 19.5%,#0a0210 21.0%,#0c0213 22.4%,#13041d 23.8%,#170523 25.2%,#1b0628 26.6%,#13041d 28.0%,#13041d 29.4%,#1d062b 30.9%,#290a3c 32.3%,#340c4a 33.7%,#481265 35.1%,#400f5b 36.5%,#5b197b 37.9%,#3f0f5a 39.3%,#370d4f 40.8%,#722095 42.2%,#27a883 43.6%,#722095 45.0%,#5fc161 46.4%,#b4c838 47.8%,#5dc162 49.2%,#b7c837 50.7%,#a4ca3e 52.1%,#67c45c 53.5%,#97cb43 54.9%,#67c45c 56.3%,#75c854 57.7%,#71c656 59.1%,#71c656 60.0%,#3cb875 60.1%,#63c35f 85.0%,#7eca4f 100.0%)"></div><div style="left:1292.5px;top:555.2px;width:5.4px;height:353.5px;background:linear-gradient(#000 0.0%,#000 16.0%,#000000 16.7%,#000000 18.1%,#07010a 19.5%,#07010b 21.0%,#0d0313 22.4%,#0a0210 23.8%,#09020d 25.2%,#0b0212 26.6%,#260938 28.0%,#13041d 29.4%,#2c0a40 30.9%,#2d0b41 32.3%,#3b0e54 33.7%,#370d4e 35.1%,#3c0e55 36.5%,#370d4f 37.9%,#4a1367 39.3%,#5b197b 40.8%,#722095 42.2%,#722095 43.6%,#722095 45.0%,#7fca4e 46.4%,#88cc49 47.8%,#6bc55a 49.2%,#6cc559 50.7%,#99cb43 52.1%,#9aca42 53.5%,#75c754 54.9%,#6bc55a 56.3%,#67c45c 57.7%,#6ec658 59.1%,#6ec658 60.0%,#86cc4a 60.1%,#c8c730 85.0%,#d8c62a 100.0%)"></div><div style="left:1297.5px;top:555.2px;width:5.4px;height:353.5px;background:linear-gradient(#000 0.0%,#000 16.0%,#000000 16.7%,#010002 18.1%,#060109 19.5%,#040106 21.0%,#07010b 22.4%,#0d0315 23.8%,#09020f 25.2%,#0c0213 26.6%,#1e072c 28.0%,#240835 29.4%,#1a0627 30.9%,#270939 32.3%,#210730 33.7%,#41105c 35.1%,#3e0f58 36.5%,#41105c 37.9%,#5f1a7f 39.3%,#360d4e 40.8%,#1f9e89 42.2%,#30b17d 43.6%,#30b17d 45.0%,#2eaf7e 46.4%,#2dae7f 47.8%,#22a187 49.2%,#2aaa81 50.7%,#2aaa81 52.1%,#2eaf7e 53.5%,#26a684 54.9%,#2fb07e 56.3%,#2bac81 57.7%,#2aab81 59.1%,#2aab81 60.0%,#3cb875 60.1%,#60c260 85.0%,#7eca4f 100.0%)"></div><div style="left:1302.6px;top:555.2px;width:5.4px;height:353.5px;background:linear-gradient(#000 0.0%,#000 16.0%,#020004 16.7%,#010002 18.1%,#0b0211 19.5%,#06010a 21.0%,#07010a 22.4%,#0d0314 23.8%,#0a0210 25.2%,#11031a 26.6%,#100318 28.0%,#12041c 29.4%,#290a3c 30.9%,#300b45 32.3%,#1f9e89 33.7%,#340c4b 35.1%,#451161 36.5%,#50156e 37.9%,#3a0e53 39.3%,#3a0e53 40.8%,#1f9e89 42.2%,#44ba70 43.6%,#44ba70 45.0%,#d6c62b 46.4%,#c6c731 47.8%,#cec72e 49.2%,#cfc62d 50.7%,#e1c526 52.1%,#d2c62c 53.5%,#eab724 54.9%,#e3c326 56.3%,#eab724 57.7%,#b0c93a 59.1%,#b0c93a 60.0%,#3cb875 60.1%,#66c35d 85.0%,#7eca4f 100.0%)"></div><div style="left:1307.6px;top:555.2px;width:5.4px;height:353.5px;background:linear-gradient(#000 0.0%,#000 16.0%,#000000 16.7%,#07010a 18.1%,#040106 19.5%,#0a0210 21.0%,#0a020f 22.4%,#11031a 23.8%,#0e0315 25.2%,#100319 26.6%,#150421 28.0%,#14041f 29.4%,#160522 30.9%,#28093a 32.3%,#3a0e52 33.7%,#41105c 35.1%,#390e51 36.5%,#601a80 37.9%,#5a1879 39.3%,#4d146b 40.8%,#722095 42.2%,#27a883 43.6%,#1f9e89 45.0%,#2dae7f 46.4%,#24a485 47.8%,#24a386 49.2%,#2aaa81 50.7%,#2dae7f 52.1%,#24a485 53.5%,#2aab81 54.9%,#22a287 56.3%,#26a684 57.7%,#28a883 59.1%,#28a883 60.0%,#25a584 60.1%,#30b17d 85.0%,#3cb875 100.0%)"></div><div style="left:1312.6px;top:555.2px;width:5.4px;height:353.5px;background:linear-gradient(#000 0.0%,#000 16.0%,#000000 16.7%,#000000 18.1%,#060109 19.5%,#0d0315 21.0%,#0f0318 22.4%,#11031a 23.8%,#13041e 25.2%,#0e0316 26.6%,#240835 28.0%,#14041e 29.4%,#150421 30.9%,#290a3c 32.3%,#2b0a3f 33.7%,#310b46 35.1%,#3e0f58 36.5%,#4a1367 37.9%,#611b82 39.3%,#451161 40.8%,#1f9e89 42.2%,#44ba70 43.6%,#44ba70 45.0%,#69c45b 46.4%,#6ec658 47.8%,#54bf67 49.2%,#50bd6a 50.7%,#5bc163 52.1%,#3bb876 53.5%,#33b57a 54.9%,#52be69 56.3%,#33b57b 57.7%,#50be69 59.1%,#50be69 60.0%,#25a584 60.1%,#2eb07e 85.0%,#3cb875 100.0%)"></div><div style="left:1317.6px;top:555.2px;width:5.4px;height:353.5px;background:linear-gradient(#000 0.0%,#000 16.0%,#000000 16.7%,#010001 18.1%,#030104 19.5%,#09020e 21.0%,#0e0316 22.4%,#0d0314 23.8%,#0a020f 25.2%,#0e0315 26.6%,#12041c 28.0%,#1f072e 29.4%,#160421 30.9%,#1b0629 32.3%,#290a3c 33.7%,#390e52 35.1%,#41105c 36.5%,#591879 37.9%,#5d1a7e 39.3%,#511570 40.8%,#44ba70 42.2%,#27a883 43.6%,#44ba70 45.0%,#b3c938 46.4%,#c4c732 47.8%,#ddc528 49.2%,#b1c939 50.7%,#b6c837 52.1%,#e1c526 53.5%,#b8c836 54.9%,#d9c629 56.3%,#b3c938 57.7%,#bdc834 59.1%,#bdc834 60.0%,#25a584 60.1%,#34b67a 85.0%,#3cb875 100.0%)"></div><div style="left:1322.6px;top:555.2px;width:5.4px;height:353.5px;background:linear-gradient(#000 0.0%,#000 16.0%,#060109 16.7%,#000000 18.1%,#020002 19.5%,#09020d 21.0%,#0d0314 22.4%,#11031a 23.8%,#09020e 25.2%,#1a0627 26.6%,#1c062a 28.0%,#150420 29.4%,#2e0b43 30.9%,#230834 32.3%,#350d4d 33.7%,#3e0f58 35.1%,#521670 36.5%,#400f5b 37.9%,#601a80 39.3%,#491266 40.8%,#722095 42.2%,#722095 43.6%,#27a883 45.0%,#dfc527 46.4%,#adc93b 47.8%,#bcc835 49.2%,#d5c62b 50.7%,#e8ba24 52.1%,#c2c733 53.5%,#aac93c 54.9%,#e4c225 56.3%,#cdc72e 57.7%,#c1c833 59.1%,#c1c833 60.0%,#32b47c 60.1%,#52be69 85.0%,#6dc558 100.0%)"></div><div style="left:1327.6px;top:555.2px;width:5.4px;height:353.5px;background:linear-gradient(#000 0.0%,#000 16.0%,#000000 16.7%,#07010b 18.1%,#060109 19.5%,#0a020f 21.0%,#0a020f 22.4%,#0b0211 23.8%,#12041b 25.2%,#190526 26.6%,#180525 28.0%,#1b0628 29.4%,#2e0b43 30.9%,#1e072d 32.3%,#2f0b44 33.7%,#380d50 35.1%,#390e52 36.5%,#400f5b 37.9%,#5c197c 39.3%,#541673 40.8%,#30b17d 42.2%,#44ba70 43.6%,#27a883 45.0%,#b7c837 46.4%,#bec834 47.8%,#c0c833 49.2%,#e4c125 50.7%,#c7c730 52.1%,#9aca42 53.5%,#a5ca3e 54.9%,#b9c836 56.3%,#c4c732 57.7%,#a7ca3d 59.1%,#a7ca3d 60.0%,#32b47c 60.1%,#5ec162 85.0%,#6dc558 100.0%)"></div><div style="left:1332.6px;top:555.2px;width:5.4px;height:353.5px;background:linear-gradient(#000 0.0%,#000 16.0%,#010001 16.7%,#040106 18.1%,#07010b 19.5%,#08020c 21.0%,#050109 22.4%,#12041c 23.8%,#1a0628 25.2%,#160422 26.6%,#210731 28.0%,#1f072e 29.4%,#3d0f58 30.9%,#3f0f59 32.3%,#51156f 33.7%,#461162 35.1%,#5a187a 36.5%,#722196 37.9%,#732196 39.3%,#521671 40.8%,#30b17d 42.2%,#44ba70 43.6%,#722095 45.0%,#b4c838 46.4%,#eab824 47.8%,#cbc72f 49.2%,#a9c93c 50.7%,#c8c730 52.1%,#cbc72f 53.5%,#cac730 54.9%,#d1c62d 56.3%,#e4c225 57.7%,#c7c731 59.1%,#c7c731 60.0%,#86cc4a 60.1%,#c1c833 85.0%,#d8c62a 100.0%)"></div><div style="left:1337.6px;top:555.2px;width:5.4px;height:353.5px;background:linear-gradient(#000 0.0%,#000 16.0%,#030105 16.7%,#000000 18.1%,#000000 19.5%,#0b0211 21.0%,#0f0317 22.4%,#0d0313 23.8%,#11031b 25.2%,#190525 26.6%,#160522 28.0%,#2e0b42 29.4%,#320c48 30.9%,#340c4b 32.3%,#431060 33.7%,#5a1879 35.1%,#561775 36.5%,#621b83 37.9%,#521671 39.3%,#661c87 40.8%,#722095 42.2%,#27a883 43.6%,#1f9e89 45.0%,#23a386 46.4%,#2cad7f 47.8%,#36b779 49.2%,#33b57a 50.7%,#2cad80 52.1%,#24a485 53.5%,#219a8a 54.9%,#22a287 56.3%,#23a286 57.7%,#2fb07e 59.1%,#2fb07e 60.0%,#86cc4a 60.1%,#b2c939 85.0%,#d8c62a 100.0%)"></div><div style="left:1342.6px;top:555.2px;width:5.4px;height:353.5px;background:linear-gradient(#000 0.0%,#000 16.0%,#06010a 16.7%,#000000 18.1%,#06010a 19.5%,#09020d 21.0%,#07010b 22.4%,#0b0211 23.8%,#1f072e 25.2%,#200730 26.6%,#270939 28.0%,#350d4c 29.4%,#220832 30.9%,#3f0f5a 32.3%,#380d50 33.7%,#661d88 35.1%,#691d8b 36.5%,#702093 37.9%,#671d89 39.3%,#70289a 40.8%,#722095 42.2%,#722095 43.6%,#722095 45.0%,#2aab81 46.4%,#32b47b 47.8%,#27a784 49.2%,#2dad7f 50.7%,#2dae7f 52.1%,#24a485 53.5%,#21998a 54.9%,#209f88 56.3%,#29a982 57.7%,#21a088 59.1%,#21a088 60.0%,#86cc4a 60.1%,#c6c731 85.0%,#d8c62a 100.0%)"></div><div style="left:1347.7px;top:555.2px;width:5.4px;height:353.5px;background:linear-gradient(#000 0.0%,#000 16.0%,#000000 16.7%,#000000 18.1%,#06010a 19.5%,#0c0212 21.0%,#11031a 22.4%,#0b0210 23.8%,#0d0314 25.2%,#270939 26.6%,#270939 28.0%,#270938 29.4%,#380d50 30.9%,#2c0a40 32.3%,#491366 33.7%,#3e0f59 35.1%,#621b83 36.5%,#1f9e89 37.9%,#511570 39.3%,#611b82 40.8%,#722095 42.2%,#44ba70 43.6%,#30b17d 45.0%,#25a585 46.4%,#32b47b 47.8%,#23a286 49.2%,#2fb17d 50.7%,#2aaa81 52.1%,#23968b 53.5%,#23a386 54.9%,#2bab81 56.3%,#2dae7f 57.7%,#24a386 59.1%,#24a386 60.0%,#86cc4a 60.1%,#b0c939 85.0%,#d8c62a 100.0%)"></div><div style="left:1352.7px;top:555.2px;width:5.4px;height:353.5px;background:linear-gradient(#000 0.0%,#000 16.0%,#000000 16.7%,#000000 18.1%,#050107 19.5%,#0c0213 21.0%,#09020e 22.4%,#0b0211 23.8%,#11031a 25.2%,#0f0318 26.6%,#180525 28.0%,#2a0a3d 29.4%,#310c47 30.9%,#3c0e55 32.3%,#310b46 33.7%,#451162 35.1%,#5f1a7f 36.5%,#742198 37.9%,#6f2092 39.3%,#681d8a 40.8%,#30b17d 42.2%,#1f9e89 43.6%,#27a883 45.0%,#32b37c 46.4%,#2cac80 47.8%,#23a386 49.2%,#36b779 50.7%,#2dae7f 52.1%,#29a982 53.5%,#25a585 54.9%,#1f9e89 56.3%,#30b17d 57.7%,#209f88 59.1%,#209f88 60.0%,#21a088 60.1%,#2cad80 85.0%,#32b47b 100.0%)"></div><div style="left:1357.7px;top:555.2px;width:5.4px;height:353.5px;background:linear-gradient(#000 0.0%,#000 16.0%,#040106 16.7%,#000000 18.1%,#000000 19.5%,#0a0210 21.0%,#060109 22.4%,#0f0317 23.8%,#12041b 25.2%,#0f0317 26.6%,#1a0627 28.0%,#210731 29.4%,#3c0e55 30.9%,#390e52 32.3%,#521670 33.7%,#531672 35.1%,#651c86 36.5%,#732196 37.9%,#571777 39.3%,#76229a 40.8%,#27a883 42.2%,#27a883 43.6%,#1f9e89 45.0%,#8ccc48 46.4%,#55bf67 47.8%,#82cb4c 49.2%,#66c35d 50.7%,#65c35d 52.1%,#47bb6f 53.5%,#51be69 54.9%,#34b57a 56.3%,#5dc162 57.7%,#44ba70 59.1%,#44ba70 60.0%,#21a088 60.1%,#2eb07e 85.0%,#32b47b 100.0%)"></div><div style="left:1362.7px;top:555.2px;width:5.4px;height:353.5px;background:linear-gradient(#000 0.0%,#000 16.0%,#000000 16.7%,#020003 18.1%,#020002 19.5%,#060109 21.0%,#0c0213 22.4%,#100319 23.8%,#190525 25.2%,#12041c 26.6%,#12041b 28.0%,#1a0627 29.4%,#180524 30.9%,#260938 32.3%,#3b0e54 33.7%,#340c4a 35.1%,#3c0e55 36.5%,#471264 37.9%,#571776 39.3%,#50156e 40.8%,#44ba70 42.2%,#30b17d 43.6%,#44ba70 45.0%,#53be68 46.4%,#4ebd6b 47.8%,#4fbd6a 49.2%,#4cbd6c 50.7%,#6ec658 52.1%,#5bc163 53.5%,#62c25f 54.9%,#34b67a 56.3%,#64c35e 57.7%,#4fbd6a 59.1%,#4fbd6a 60.0%,#86cc4a 60.1%,#bac835 85.0%,#d8c62a 100.0%)"></div><div style="left:1367.7px;top:555.2px;width:5.4px;height:353.5px;background:linear-gradient(#000 0.0%,#000 16.0%,#050108 16.7%,#000000 18.1%,#0a020f 19.5%,#0b0212 21.0%,#0d0314 22.4%,#13041e 23.8%,#0b0211 25.2%,#1a0627 26.6%,#260937 28.0%,#13041e 29.4%,#2a0a3e 30.9%,#3e0f59 32.3%,#441160 33.7%,#3c0f56 35.1%,#3d0f57 36.5%,#50156e 37.9%,#51156f 39.3%,#1f9e89 40.8%,#30b17d 42.2%,#30b17d 43.6%,#722095 45.0%,#4bbc6c 46.4%,#7cc950 47.8%,#43ba71 49.2%,#34b67a 50.7%,#75c754 52.1%,#4b1368 53.5%,#4b1368 54.9%,#4b1368 56.3%,#4b1368 57.7%,#4b1368 59.1%,#4b1368 60.0%,#3b5f96 60.1%,#9aca42 68.0%,#b6c837 85.0%,#d8c62a 100.0%)"></div><div style="left:1372.7px;top:555.2px;width:5.4px;height:353.5px;background:linear-gradient(#000 0.0%,#000 16.0%,#000000 16.7%,#000000 18.1%,#050108 19.5%,#08020d 21.0%,#09020e 22.4%,#0d0314 23.8%,#0d0314 25.2%,#1c062a 26.6%,#270939 28.0%,#28093b 29.4%,#320c48 30.9%,#200730 32.3%,#2d0a41 33.7%,#551774 35.1%,#5f1a7f 36.5%,#40105c 37.9%,#3e0f59 39.3%,#471264 40.8%,#722095 42.2%,#27a883 43.6%,#44ba70 45.0%,#e5c025 46.4%,#b0c93a 47.8%,#d4c62b 49.2%,#9bca42 50.7%,#e4c125 52.1%,#4b1368 53.5%,#4b1368 54.9%,#4b1368 56.3%,#4b1368 57.7%,#4b1368 59.1%,#4b1368 60.0%,#3b5f96 60.1%,#9aca42 68.0%,#b9c836 85.0%,#d8c62a 100.0%)"></div><div style="left:1377.7px;top:555.2px;width:5.4px;height:353.5px;background:linear-gradient(#000 0.0%,#000 16.0%,#010001 16.7%,#000000 18.1%,#09020f 19.5%,#050108 21.0%,#050108 22.4%,#0a020f 23.8%,#0a020f 25.2%,#0f0318 26.6%,#170523 28.0%,#190526 29.4%,#1e072d 30.9%,#240835 32.3%,#3c0f56 33.7%,#441161 35.1%,#350d4c 36.5%,#5e1a7e 37.9%,#461162 39.3%,#5e1a7e 40.8%,#30b17d 42.2%,#30b17d 43.6%,#1f9e89 45.0%,#e5bf25 46.4%,#b2c939 47.8%,#cac72f 49.2%,#c7c731 50.7%,#91cb46 52.1%,#83cb4c 53.5%,#98cb43 54.9%,#91cb46 56.3%,#adc93b 57.7%,#b8c836 59.1%,#b8c836 60.0%,#86cc4a 60.1%,#b4c838 85.0%,#d8c62a 100.0%)"></div><div style="left:1382.7px;top:555.2px;width:5.4px;height:353.5px;background:linear-gradient(#000 0.0%,#000 16.0%,#000000 16.7%,#000000 18.1%,#020004 19.5%,#010001 21.0%,#0b0211 22.4%,#13041d 23.8%,#0a0210 25.2%,#14041e 26.6%,#150421 28.0%,#170523 29.4%,#230834 30.9%,#1a0628 32.3%,#300b46 33.7%,#43105f 35.1%,#4f156d 36.5%,#3e0f59 37.9%,#3a0e53 39.3%,#5b197b 40.8%,#44ba70 42.2%,#1f9e89 43.6%,#1f9e89 45.0%,#c4c732 46.4%,#e5bf25 47.8%,#a6ca3d 49.2%,#d8c62a 50.7%,#dcc528 52.1%,#b5c838 53.5%,#c2c732 54.9%,#bcc835 56.3%,#7fca4e 57.7%,#8dcb47 59.1%,#8dcb47 60.0%,#86cc4a 60.1%,#bfc834 85.0%,#d8c62a 100.0%)"></div><div style="left:1387.7px;top:555.2px;width:5.4px;height:353.5px;background:linear-gradient(#000 0.0%,#000 16.0%,#000001 16.7%,#050108 18.1%,#010001 19.5%,#0c0212 21.0%,#100318 22.4%,#14041e 23.8%,#0f0317 25.2%,#12041c 26.6%,#140420 28.0%,#360d4e 29.4%,#2f0b44 30.9%,#360d4e 32.3%,#4e146c 33.7%,#491266 35.1%,#6d1f90 36.5%,#551774 37.9%,#75249a 39.3%,#661c88 40.8%,#44ba70 42.2%,#27a883 43.6%,#1f9e89 45.0%,#bcc835 46.4%,#7eca4e 47.8%,#c7c731 49.2%,#a9c93c 50.7%,#82cb4c 52.1%,#a2ca3f 53.5%,#98cb43 54.9%,#b3c938 56.3%,#80ca4e 57.7%,#b9c836 59.1%,#b9c836 60.0%,#86cc4a 60.1%,#bfc834 85.0%,#d8c62a 100.0%)"></div><div style="left:1392.8px;top:555.2px;width:5.4px;height:353.5px;background:linear-gradient(#000 0.0%,#000 16.0%,#07010a 16.7%,#000000 18.1%,#08020d 19.5%,#0d0314 21.0%,#0f0318 22.4%,#0d0315 23.8%,#0e0315 25.2%,#240834 26.6%,#27093a 28.0%,#390e51 29.4%,#3f0f5b 30.9%,#320c48 32.3%,#5b197a 33.7%,#441160 35.1%,#4b1369 36.5%,#5b197b 37.9%,#561775 39.3%,#611b81 40.8%,#30b17d 42.2%,#30b17d 43.6%,#27a883 45.0%,#bcc835 46.4%,#b8c837 47.8%,#afc93a 49.2%,#d4c62c 50.7%,#b1c939 52.1%,#87cc4a 53.5%,#72c756 54.9%,#9aca42 56.3%,#89cc49 57.7%,#99cb43 59.1%,#99cb43 60.0%,#86cc4a 60.1%,#bac836 85.0%,#d8c62a 100.0%)"></div><div style="left:1397.8px;top:555.2px;width:5.4px;height:353.5px;background:linear-gradient(#000 0.0%,#000 16.0%,#000000 16.7%,#07010b 18.1%,#050108 19.5%,#09020e 21.0%,#0c0213 22.4%,#08020d 23.8%,#13041d 25.2%,#1e072c 26.6%,#1a0627 28.0%,#2b0a3f 29.4%,#340c4a 30.9%,#350d4c 32.3%,#3e0f59 33.7%,#4f156d 35.1%,#5a187a 36.5%,#661c88 37.9%,#732196 39.3%,#551774 40.8%,#44ba70 42.2%,#30b17d 43.6%,#30b17d 45.0%,#88cc49 46.4%,#8ecb47 47.8%,#cdc72e 49.2%,#86cc4a 50.7%,#c8c730 52.1%,#8ccc48 53.5%,#b8c836 54.9%,#adc93b 56.3%,#a7ca3d 57.7%,#b5c838 59.1%,#b5c838 60.0%,#21a088 60.1%,#2aaa81 85.0%,#32b47b 100.0%)"></div><div style="left:1402.8px;top:555.2px;width:5.4px;height:353.5px;background:linear-gradient(#000 0.0%,#000 16.0%,#060109 16.7%,#050108 18.1%,#040106 19.5%,#09020d 21.0%,#0f0317 22.4%,#13041e 23.8%,#100319 25.2%,#13041e 26.6%,#240835 28.0%,#1f072e 29.4%,#3f0f59 30.9%,#29093c 32.3%,#43105f 33.7%,#551774 35.1%,#74249a 36.5%,#702093 37.9%,#683099 39.3%,#6d2b99 40.8%,#44ba70 42.2%,#722095 43.6%,#44ba70 45.0%,#23a386 46.4%,#29a982 47.8%,#23a386 49.2%,#33b57a 50.7%,#2fb07e 52.1%,#24a386 53.5%,#2cad80 54.9%,#22a187 56.3%,#2dae7f 57.7%,#2aab81 59.1%,#2aab81 60.0%,#86cc4a 60.1%,#c3c732 85.0%,#d8c62a 100.0%)"></div><div style="left:1407.8px;top:555.2px;width:5.4px;height:353.5px;background:linear-gradient(#000 0.0%,#000 16.0%,#050108 16.7%,#060109 18.1%,#020003 19.5%,#030105 21.0%,#0d0315 22.4%,#11031b 23.8%,#12041c 25.2%,#0f0317 26.6%,#200730 28.0%,#210731 29.4%,#240834 30.9%,#330c49 32.3%,#3d0f57 33.7%,#581777 35.1%,#4e146c 36.5%,#5d197e 37.9%,#681d89 39.3%,#641c86 40.8%,#722095 42.2%,#30b17d 43.6%,#30b17d 45.0%,#2eaf7e 46.4%,#24a386 47.8%,#2cad80 49.2%,#27a784 50.7%,#37b778 52.1%,#4b1368 53.5%,#4b1368 54.9%,#4b1368 56.3%,#4b1368 57.7%,#4b1368 59.1%,#4b1368 60.0%,#86cc4a 60.1%,#bdc834 85.0%,#d8c62a 100.0%)"></div><div style="left:1412.8px;top:555.2px;width:5.4px;height:353.5px;background:linear-gradient(#000 0.0%,#000 16.0%,#010002 16.7%,#06010a 18.1%,#050108 19.5%,#040106 21.0%,#09020e 22.4%,#160422 23.8%,#14041e 25.2%,#220832 26.6%,#1f072f 28.0%,#230834 29.4%,#210731 30.9%,#330c49 32.3%,#380e51 33.7%,#4f156e 35.1%,#561775 36.5%,#6d1f90 37.9%,#702093 39.3%,#4d146b 40.8%,#722095 42.2%,#30b17d 43.6%,#30b17d 45.0%,#e6bf25 46.4%,#e7bc24 47.8%,#e0c527 49.2%,#e3c426 50.7%,#c6c731 52.1%,#4b1368 53.5%,#4b1368 54.9%,#4b1368 56.3%,#4b1368 57.7%,#4b1368 59.1%,#4b1368 60.0%,#3b5f96 60.1%,#9aca42 68.0%,#cdc72e 85.0%,#d8c62a 100.0%)"></div><div style="left:1417.8px;top:555.2px;width:5.4px;height:353.5px;background:linear-gradient(#000 0.0%,#000 16.0%,#020003 16.7%,#000000 18.1%,#030105 19.5%,#09020d 21.0%,#060109 22.4%,#0d0314 23.8%,#11031b 25.2%,#0e0316 26.6%,#12041c 28.0%,#20072f 29.4%,#2a0a3d 30.9%,#461162 32.3%,#320c48 33.7%,#390e52 35.1%,#611b82 36.5%,#531672 37.9%,#6d1f90 39.3%,#631b84 40.8%,#27a883 42.2%,#27a883 43.6%,#27a883 45.0%,#61c260 46.4%,#43ba71 47.8%,#75c754 49.2%,#33b57b 50.7%,#73c755 52.1%,#49bc6e 53.5%,#58c065 54.9%,#36b679 56.3%,#2fb07e 57.7%,#31b37c 59.1%,#31b37c 60.0%,#86cc4a 60.1%,#c2c732 85.0%,#d8c62a 100.0%)"></div><div style="left:1422.8px;top:555.2px;width:5.4px;height:353.5px;background:linear-gradient(#000 0.0%,#000 16.0%,#000000 16.7%,#08020d 18.1%,#020003 19.5%,#030105 21.0%,#0d0315 22.4%,#12041c 23.8%,#0c0213 25.2%,#11031a 26.6%,#150420 28.0%,#14041e 29.4%,#200730 30.9%,#370d4f 32.3%,#360d4d 33.7%,#3f0f5a 35.1%,#42105f 36.5%,#491367 37.9%,#5f1a80 39.3%,#380d50 40.8%,#27a883 42.2%,#722095 43.6%,#44ba70 45.0%,#73c755 46.4%,#39b777 47.8%,#34b57a 49.2%,#53be68 50.7%,#6ec658 52.1%,#31b37c 53.5%,#34b67a 54.9%,#48bb6e 56.3%,#5ec161 57.7%,#34b67a 59.1%,#34b67a 60.0%,#29aa82 60.1%,#42ba72 85.0%,#4dbd6c 100.0%)"></div><div style="left:1427.8px;top:555.2px;width:5.4px;height:353.5px;background:linear-gradient(#000 0.0%,#000 16.0%,#000000 16.7%,#09020d 18.1%,#030105 19.5%,#030105 21.0%,#09020d 22.4%,#09020d 23.8%,#0f0318 25.2%,#1f072e 26.6%,#310c47 28.0%,#2e0b42 29.4%,#3e0f59 30.9%,#481265 32.3%,#400f5b 33.7%,#41105d 35.1%,#511570 36.5%,#631c84 37.9%,#6f2092 39.3%,#5b197b 40.8%,#722095 42.2%,#27a883 43.6%,#44ba70 45.0%,#63c35f 46.4%,#7bc950 47.8%,#4cbc6c 49.2%,#7bc951 50.7%,#5ec161 52.1%,#61c260 53.5%,#42ba72 54.9%,#53be68 56.3%,#4ebd6b 57.7%,#31b37c 59.1%,#31b37c 60.0%,#29aa82 60.1%,#39b777 85.0%,#4dbd6c 100.0%)"></div><div style="left:1432.9px;top:555.2px;width:5.4px;height:353.5px;background:linear-gradient(#000 0.0%,#000 16.0%,#040106 16.7%,#07010b 18.1%,#010001 19.5%,#0b0212 21.0%,#0d0315 22.4%,#160522 23.8%,#0c0212 25.2%,#11031b 26.6%,#310c47 28.0%,#250836 29.4%,#390e52 30.9%,#3e0f59 32.3%,#42105e 33.7%,#6c1f8e 35.1%,#702093 36.5%,#74259a 37.9%,#71279a 39.3%,#571776 40.8%,#722095 42.2%,#44ba70 43.6%,#30b17d 45.0%,#66c35d 46.4%,#44ba71 47.8%,#7eca4f 49.2%,#51be69 50.7%,#5bc063 52.1%,#48bb6e 53.5%,#3fb974 54.9%,#5bc163 56.3%,#47bb6f 57.7%,#50be69 59.1%,#50be69 60.0%,#29aa82 60.1%,#33b57b 85.0%,#4dbd6c 100.0%)"></div><div style="left:1437.9px;top:555.2px;width:5.4px;height:353.5px;background:linear-gradient(#000 0.0%,#000 16.0%,#040106 16.7%,#000000 18.1%,#07010b 19.5%,#050107 21.0%,#060109 22.4%,#0f0317 23.8%,#12041d 25.2%,#1c062a 26.6%,#1c062a 28.0%,#380d50 29.4%,#3c0e56 30.9%,#1f9e89 32.3%,#5d197d 33.7%,#400f5b 35.1%,#6b1e8d 36.5%,#661c88 37.9%,#651c86 39.3%,#613899 40.8%,#30b17d 42.2%,#1f9e89 43.6%,#30b17d 45.0%,#4abc6d 46.4%,#33b57b 47.8%,#71c656 49.2%,#43ba71 50.7%,#47bb6f 52.1%,#2eaf7e 53.5%,#37b778 54.9%,#50be69 56.3%,#5ec162 57.7%,#5cc162 59.1%,#5cc162 60.0%,#21a088 60.1%,#2fb17d 85.0%,#32b47b 100.0%)"></div><div style="left:1442.9px;top:555.2px;width:5.4px;height:353.5px;background:linear-gradient(#000 0.0%,#000 16.0%,#000000 16.7%,#07010b 18.1%,#030105 19.5%,#0e0316 21.0%,#11031a 22.4%,#0a0210 23.8%,#11031a 25.2%,#11031a 26.6%,#290a3c 28.0%,#1b0629 29.4%,#230834 30.9%,#2e0b42 32.3%,#3b0e55 33.7%,#50156e 35.1%,#5c197c 36.5%,#641c86 37.9%,#683199 39.3%,#5c197c 40.8%,#30b17d 42.2%,#27a883 43.6%,#30b17d 45.0%,#4abc6d 46.4%,#47bb6f 47.8%,#34b67a 49.2%,#73c755 50.7%,#50be6a 52.1%,#4b1368 53.5%,#4b1368 54.9%,#4b1368 56.3%,#4b1368 57.7%,#4b1368 59.1%,#4b1368 60.0%,#3b5f96 60.1%,#5dc162 68.0%,#72c756 85.0%,#90cb46 100.0%)"></div><div style="left:1447.9px;top:555.2px;width:5.4px;height:353.5px;background:linear-gradient(#000 0.0%,#000 16.0%,#000000 16.7%,#000000 18.1%,#000000 19.5%,#030104 21.0%,#07010a 22.4%,#09020e 23.8%,#1c062a 25.2%,#12041c 26.6%,#1a0628 28.0%,#2e0b43 29.4%,#270939 30.9%,#50156e 32.3%,#541673 33.7%,#5d197e 35.1%,#51156f 36.5%,#631c85 37.9%,#5f1a7f 39.3%,#5c197c 40.8%,#27a883 42.2%,#30b17d 43.6%,#30b17d 45.0%,#33b57b 46.4%,#51be69 47.8%,#76c854 49.2%,#47bb6f 50.7%,#45ba70 52.1%,#4b1368 53.5%,#4b1368 54.9%,#4b1368 56.3%,#4b1368 57.7%,#4b1368 59.1%,#4b1368 60.0%,#32b47c 60.1%,#57c065 85.0%,#6dc558 100.0%)"></div><div style="left:1452.9px;top:555.2px;width:5.4px;height:353.5px;background:linear-gradient(#000 0.0%,#000 16.0%,#030104 16.7%,#000000 18.1%,#08020d 19.5%,#0a020f 21.0%,#0c0212 22.4%,#100319 23.8%,#100318 25.2%,#11031b 26.6%,#2f0b44 28.0%,#250836 29.4%,#250836 30.9%,#50156f 32.3%,#4e146c 33.7%,#41105d 35.1%,#722195 36.5%,#643599 37.9%,#653499 39.3%,#6a1e8c 40.8%,#27a883 42.2%,#30b17d 43.6%,#722095 45.0%,#7dc94f 46.4%,#5dc162 47.8%,#56bf66 49.2%,#65c35d 50.7%,#74c755 52.1%,#4b1368 53.5%,#4b1368 54.9%,#4b1368 56.3%,#4b1368 57.7%,#4b1368 59.1%,#4b1368 60.0%,#3b5f96 60.1%,#3cb875 68.0%,#5ec161 85.0%,#6dc558 100.0%)"></div><div style="left:1457.9px;top:555.2px;width:5.4px;height:353.5px;background:linear-gradient(#000 0.0%,#000 16.0%,#000000 16.7%,#000000 18.1%,#000000 19.5%,#08020d 21.0%,#11031a 22.4%,#0c0213 23.8%,#100319 25.2%,#240834 26.6%,#14041f 28.0%,#1b0628 29.4%,#3a0e53 30.9%,#2f0b44 32.3%,#3a0e54 33.7%,#691e8b 35.1%,#591879 36.5%,#6d2b99 37.9%,#641c85 39.3%,#722195 40.8%,#30b17d 42.2%,#27a883 43.6%,#30b17d 45.0%,#92cb45 46.4%,#dcc528 47.8%,#a2ca3f 49.2%,#e1c526 50.7%,#cec62e 52.1%,#83cb4c 53.5%,#7eca4e 54.9%,#a1ca3f 56.3%,#bbc835 57.7%,#acc93b 59.1%,#acc93b 60.0%,#32b47c 60.1%,#58c065 85.0%,#6dc558 100.0%)"></div><div style="left:1462.9px;top:555.2px;width:5.4px;height:353.5px;background:linear-gradient(#000 0.0%,#000 16.0%,#010001 16.7%,#07010b 18.1%,#07010b 19.5%,#0a0210 21.0%,#0e0316 22.4%,#11031b 23.8%,#1a0527 25.2%,#220832 26.6%,#220832 28.0%,#320c48 29.4%,#29093c 30.9%,#380d50 32.3%,#5a187a 33.7%,#591878 35.1%,#6a1e8c 36.5%,#742198 37.9%,#5a3f98 39.3%,#6f1f92 40.8%,#44ba70 42.2%,#1f9e89 43.6%,#722095 45.0%,#adc93b 46.4%,#96cb44 47.8%,#bcc835 49.2%,#e5c125 50.7%,#e5bf25 52.1%,#4b1368 53.5%,#4b1368 54.9%,#4b1368 56.3%,#4b1368 57.7%,#4b1368 59.1%,#4b1368 60.0%,#3cb875 60.1%,#61c260 85.0%,#7eca4f 100.0%)"></div><div style="left:1467.9px;top:555.2px;width:5.4px;height:353.5px;background:linear-gradient(#000 0.0%,#000 16.0%,#010001 16.7%,#030105 18.1%,#010002 19.5%,#08020c 21.0%,#0c0213 22.4%,#0f0316 23.8%,#0d0314 25.2%,#0f0318 26.6%,#1b0628 28.0%,#1e072c 29.4%,#2d0b42 30.9%,#260938 32.3%,#330c4a 33.7%,#310c47 35.1%,#571776 36.5%,#551774 37.9%,#5e1a7f 39.3%,#1f9e89 40.8%,#44ba70 42.2%,#1f9e89 43.6%,#30b17d 45.0%,#cdc72e 46.4%,#b0c93a 47.8%,#e6be25 49.2%,#e5bf25 50.7%,#9eca41 52.1%,#4b1368 53.5%,#4b1368 54.9%,#4b1368 56.3%,#4b1368 57.7%,#4b1368 59.1%,#4b1368 60.0%,#4dbd6c 60.1%,#76c853 85.0%,#90cb46 100.0%)"></div><div style="left:1472.9px;top:555.2px;width:5.4px;height:353.5px;background:linear-gradient(#000 0.0%,#000 16.0%,#020003 16.7%,#08020d 18.1%,#050108 19.5%,#09020e 21.0%,#0b0212 22.4%,#11031a 23.8%,#13041e 25.2%,#0f0317 26.6%,#100319 28.0%,#1c062a 29.4%,#250836 30.9%,#240835 32.3%,#3c0e56 33.7%,#390e51 35.1%,#340c4b 36.5%,#380e51 37.9%,#4e146b 39.3%,#3b0e54 40.8%,#44ba70 42.2%,#44ba70 43.6%,#1f9e89 45.0%,#99cb43 46.4%,#92cb45 47.8%,#d5c62b 49.2%,#bec834 50.7%,#e3c326 52.1%,#acc93b 53.5%,#9dca41 54.9%,#d1c62d 56.3%,#9dca41 57.7%,#c1c833 59.1%,#c1c833 60.0%,#32b47c 60.1%,#51be69 85.0%,#6dc558 100.0%)"></div><div style="left:1478.0px;top:555.2px;width:5.4px;height:353.5px;background:linear-gradient(#000 0.0%,#000 16.0%,#000000 16.7%,#030105 18.1%,#07010b 19.5%,#040107 21.0%,#0d0314 22.4%,#050108 23.8%,#13041e 25.2%,#0f0317 26.6%,#180524 28.0%,#14041f 29.4%,#2a0a3e 30.9%,#250836 32.3%,#2a0a3d 33.7%,#41105d 35.1%,#4b1368 36.5%,#3c0e56 37.9%,#5d197e 39.3%,#390e51 40.8%,#30b17d 42.2%,#44ba70 43.6%,#30b17d 45.0%,#eab624 46.4%,#d1c62d 47.8%,#eeaf23 49.2%,#f0ad22 50.7%,#e5c025 52.1%,#d2c62c 53.5%,#dac629 54.9%,#c5c731 56.3%,#dcc528 57.7%,#e9b924 59.1%,#e9b924 60.0%,#32b47c 60.1%,#4ebd6b 85.0%,#6dc558 100.0%)"></div><div style="left:1483.0px;top:555.2px;width:5.4px;height:353.5px;background:linear-gradient(#000 0.0%,#000 16.0%,#000000 16.7%,#08020c 18.1%,#09020e 19.5%,#0d0315 21.0%,#0e0315 22.4%,#0f0317 23.8%,#12041c 25.2%,#1b0628 26.6%,#13041d 28.0%,#100319 29.4%,#1b0629 30.9%,#180525 32.3%,#330c4a 33.7%,#2f0b44 35.1%,#3a0e53 36.5%,#4c1369 37.9%,#360d4e 39.3%,#370d4f 40.8%,#44ba70 42.2%,#1f9e89 43.6%,#1f9e89 45.0%,#e2c526 46.4%,#e3c426 47.8%,#efae22 49.2%,#e2c426 50.7%,#e9b924 52.1%,#bcc835 53.5%,#d1c62d 54.9%,#e3c326 56.3%,#e8ba24 57.7%,#e0c527 59.1%,#e0c527 60.0%,#2eaf7e 60.1%,#3fb974 85.0%,#5dc162 100.0%)"></div><div style="left:1488.0px;top:555.2px;width:5.4px;height:353.5px;background:linear-gradient(#000 0.0%,#000 16.0%,#040106 16.7%,#000000 18.1%,#0a0210 19.5%,#0e0316 21.0%,#0c0213 22.4%,#08020d 23.8%,#0c0213 25.2%,#20072f 26.6%,#2c0a40 28.0%,#300b45 29.4%,#310c47 30.9%,#3b0e55 32.3%,#481265 33.7%,#42105d 35.1%,#702094 36.5%,#621b83 37.9%,#76229a 39.3%,#6a2e99 40.8%,#44ba70 42.2%,#44ba70 43.6%,#27a883 45.0%,#edb223 46.4%,#e4c125 47.8%,#d8c62a 49.2%,#c3c732 50.7%,#ecb423 52.1%,#4b1368 53.5%,#4b1368 54.9%,#4b1368 56.3%,#4b1368 57.7%,#4b1368 59.1%,#4b1368 60.0%,#2eaf7e 60.1%,#3db875 85.0%,#5dc162 100.0%)"></div><div style="left:1493.0px;top:555.2px;width:5.4px;height:353.5px;background:linear-gradient(#000 0.0%,#000 16.0%,#000000 16.7%,#040106 18.1%,#06010a 19.5%,#07010a 21.0%,#100319 22.4%,#0e0316 23.8%,#12041c 25.2%,#1d062b 26.6%,#1c062a 28.0%,#1d062c 29.4%,#41105c 30.9%,#43105f 32.3%,#43105f 33.7%,#461163 35.1%,#601b81 36.5%,#551774 37.9%,#631c85 39.3%,#73259a 40.8%,#27a883 42.2%,#722095 43.6%,#1f9e89 45.0%,#ebb523 46.4%,#e7bd25 47.8%,#e0c527 49.2%,#dcc528 50.7%,#e6be25 52.1%,#4b1368 53.5%,#4b1368 54.9%,#4b1368 56.3%,#4b1368 57.7%,#4b1368 59.1%,#4b1368 60.0%,#86cc4a 60.1%,#c8c730 85.0%,#d8c62a 100.0%)"></div><div style="left:1498.0px;top:555.2px;width:5.4px;height:353.5px;background:linear-gradient(#000 0.0%,#000 16.0%,#000000 16.7%,#000000 18.1%,#08020c 19.5%,#08020c 21.0%,#11031b 22.4%,#11031a 23.8%,#160421 25.2%,#11031a 26.6%,#210730 28.0%,#300b45 29.4%,#3f0f5a 30.9%,#4b1368 32.3%,#43105f 33.7%,#3e0f58 35.1%,#4e146b 36.5%,#611b82 37.9%,#6e2a99 39.3%,#521671 40.8%,#27a883 42.2%,#722095 43.6%,#1f9e89 45.0%,#e2c426 46.4%,#e8ba24 47.8%,#dcc528 49.2%,#b0c93a 50.7%,#c2c733 52.1%,#e3c326 53.5%,#afc93a 54.9%,#bcc835 56.3%,#e1c527 57.7%,#cfc62d 59.1%,#cfc62d 60.0%,#25a584 60.1%,#33b47b 85.0%,#3cb875 100.0%)"></div><div style="left:1503.0px;top:555.2px;width:5.4px;height:353.5px;background:linear-gradient(#000 0.0%,#000 16.0%,#010001 16.7%,#030105 18.1%,#000000 19.5%,#0a0210 21.0%,#06010a 22.4%,#0d0315 23.8%,#0c0212 25.2%,#160522 26.6%,#14041f 28.0%,#370d50 29.4%,#2c0a40 30.9%,#471264 32.3%,#3d0f57 33.7%,#451161 35.1%,#651c87 36.5%,#752298 37.9%,#681d8a 39.3%,#6c2c99 40.8%,#27a883 42.2%,#1f9e89 43.6%,#30b17d 45.0%,#e7bc25 46.4%,#b9c836 47.8%,#aec93b 49.2%,#e9b824 50.7%,#eab624 52.1%,#4b1368 53.5%,#4b1368 54.9%,#4b1368 56.3%,#4b1368 57.7%,#4b1368 59.1%,#4b1368 60.0%,#3b5f96 60.1%,#4dbd6c 68.0%,#69c45b 85.0%,#7eca4f 100.0%)"></div><div style="left:1508.0px;top:555.2px;width:5.4px;height:353.5px;background:linear-gradient(#000 0.0%,#000 16.0%,#000000 16.7%,#050107 18.1%,#010002 19.5%,#0d0314 21.0%,#0d0314 22.4%,#13041e 23.8%,#0c0212 25.2%,#12041d 26.6%,#2d0a41 28.0%,#2a0a3d 29.4%,#2d0b42 30.9%,#290a3c 32.3%,#3a0e54 33.7%,#6a1e8d 35.1%,#561775 36.5%,#6c1e8e 37.9%,#561775 39.3%,#76229a 40.8%,#27a883 42.2%,#722095 43.6%,#722095 45.0%,#d1c62d 46.4%,#afc93a 47.8%,#e9b924 49.2%,#ebb523 50.7%,#e4c125 52.1%,#4b1368 53.5%,#4b1368 54.9%,#4b1368 56.3%,#4b1368 57.7%,#4b1368 59.1%,#4b1368 60.0%,#3cb875 60.1%,#6bc55a 85.0%,#7eca4f 100.0%)"></div><div style="left:1513.0px;top:555.2px;width:5.4px;height:353.5px;background:linear-gradient(#000 0.0%,#000 16.0%,#060109 16.7%,#09020e 18.1%,#010002 19.5%,#0b0212 21.0%,#11031b 22.4%,#100319 23.8%,#13041d 25.2%,#13041d 26.6%,#2c0a40 28.0%,#2c0a40 29.4%,#2d0a41 30.9%,#2a0a3d 32.3%,#320c48 33.7%,#4b1369 35.1%,#481265 36.5%,#571777 37.9%,#541673 39.3%,#591879 40.8%,#44ba70 42.2%,#1f9e89 43.6%,#1f9e89 45.0%,#74c755 46.4%,#a1ca40 47.8%,#a0ca40 49.2%,#90cb46 50.7%,#8fcb46 52.1%,#77c853 53.5%,#83cb4c 54.9%,#80ca4e 56.3%,#61c260 57.7%,#7dc950 59.1%,#7dc950 60.0%,#32b47c 60.1%,#5ec161 85.0%,#6dc558 100.0%)"></div><div style="left:1518.0px;top:555.2px;width:5.4px;height:353.5px;background:linear-gradient(#000 0.0%,#000 16.0%,#000000 16.7%,#050108 18.1%,#050107 19.5%,#08020c 21.0%,#07010b 22.4%,#08020c 23.8%,#13041d 25.2%,#0e0316 26.6%,#260937 28.0%,#2c0a40 29.4%,#340c4b 30.9%,#220833 32.3%,#290a3c 33.7%,#360d4e 35.1%,#330c4a 36.5%,#591878 37.9%,#4f156d 39.3%,#631b84 40.8%,#722095 42.2%,#30b17d 43.6%,#27a883 45.0%,#e5c025 46.4%,#cdc72e 47.8%,#b8c836 49.2%,#e6bf25 50.7%,#e3c326 52.1%,#b1c939 53.5%,#cec72e 54.9%,#96cb44 56.3%,#d8c62a 57.7%,#e2c526 59.1%,#e2c526 60.0%,#32b47c 60.1%,#64c35e 85.0%,#6dc558 100.0%)"></div><div style="left:1523.1px;top:555.2px;width:5.4px;height:353.5px;background:linear-gradient(#000 0.0%,#000 16.0%,#000000 16.7%,#060109 18.1%,#010001 19.5%,#010001 21.0%,#08020d 22.4%,#07010a 23.8%,#14041f 25.2%,#1b0628 26.6%,#12041d 28.0%,#190525 29.4%,#2e0b43 30.9%,#3d0f57 32.3%,#3b0e55 33.7%,#320c48 35.1%,#5d197d 36.5%,#531672 37.9%,#491266 39.3%,#4d146a 40.8%,#44ba70 42.2%,#30b17d 43.6%,#30b17d 45.0%,#35b67a 46.4%,#22a187 47.8%,#2bac80 49.2%,#33b57b 50.7%,#34b67a 52.1%,#4b1368 53.5%,#4b1368 54.9%,#4b1368 56.3%,#4b1368 57.7%,#4b1368 59.1%,#4b1368 60.0%,#3b5f96 60.1%,#5dc162 68.0%,#7eca4f 85.0%,#90cb46 100.0%)"></div><div style="left:1528.1px;top:555.2px;width:5.4px;height:353.5px;background:linear-gradient(#000 0.0%,#000 16.0%,#010001 16.7%,#09020e 18.1%,#000000 19.5%,#0b0211 21.0%,#100319 22.4%,#0a020f 23.8%,#0b0210 25.2%,#180525 26.6%,#12041d 28.0%,#14041f 29.4%,#29093c 30.9%,#260937 32.3%,#3f0f5a 33.7%,#2e0b42 35.1%,#561775 36.5%,#5b197b 37.9%,#441161 39.3%,#691d8b 40.8%,#722095 42.2%,#44ba70 43.6%,#30b17d 45.0%,#30b27d 46.4%,#23a386 47.8%,#25a585 49.2%,#22a187 50.7%,#2aaa81 52.1%,#4b1368 53.5%,#4b1368 54.9%,#4b1368 56.3%,#4b1368 57.7%,#4b1368 59.1%,#4b1368 60.0%,#25a584 60.1%,#31b37c 85.0%,#3cb875 100.0%)"></div><div style="left:1533.1px;top:555.2px;width:5.4px;height:353.5px;background:linear-gradient(#000 0.0%,#000 16.0%,#000000 16.7%,#000000 18.1%,#050108 19.5%,#040106 21.0%,#0b0211 22.4%,#07010b 23.8%,#0e0316 25.2%,#170523 26.6%,#12041b 28.0%,#13041e 29.4%,#2e0b43 30.9%,#230833 32.3%,#390e51 33.7%,#3e0f58 35.1%,#3c0e56 36.5%,#671d89 37.9%,#3d0f57 39.3%,#521570 40.8%,#30b17d 42.2%,#30b17d 43.6%,#30b17d 45.0%,#24a485 46.4%,#28a883 47.8%,#22a187 49.2%,#24a485 50.7%,#2bac80 52.1%,#25a585 53.5%,#27a783 54.9%,#2eaf7e 56.3%,#30b17d 57.7%,#24a386 59.1%,#24a386 60.0%,#25a584 60.1%,#32b47b 85.0%,#3cb875 100.0%)"></div><div style="left:1538.1px;top:555.2px;width:5.4px;height:353.5px;background:linear-gradient(#000 0.0%,#000 16.0%,#000000 16.7%,#050108 18.1%,#010002 19.5%,#030104 21.0%,#07010a 22.4%,#08020d 23.8%,#0f0317 25.2%,#0f0317 26.6%,#13041d 28.0%,#340c4b 29.4%,#3a0e53 30.9%,#320c48 32.3%,#340c4b 33.7%,#3c0f56 35.1%,#40105c 36.5%,#5d197e 37.9%,#641c85 39.3%,#50156e 40.8%,#44ba70 42.2%,#27a883 43.6%,#1f9e89 45.0%,#2cad7f 46.4%,#3cb875 47.8%,#27a883 49.2%,#22a187 50.7%,#2dae7f 52.1%,#21998a 53.5%,#2aaa81 54.9%,#21a187 56.3%,#22978a 57.7%,#22a187 59.1%,#22a187 60.0%,#2eaf7e 60.1%,#52be68 85.0%,#5dc162 100.0%)"></div><div style="left:1543.1px;top:555.2px;width:5.4px;height:353.5px;background:linear-gradient(#000 0.0%,#000 16.0%,#010002 16.7%,#000000 18.1%,#09020e 19.5%,#0a0210 21.0%,#0a020f 22.4%,#08020d 23.8%,#0d0314 25.2%,#13041d 26.6%,#2b0a3f 28.0%,#240835 29.4%,#3a0e53 30.9%,#2b0a3f 32.3%,#350d4d 33.7%,#591878 35.1%,#4d146b 36.5%,#5f1a80 37.9%,#6c1f8f 39.3%,#5e1a7e 40.8%,#44ba70 42.2%,#722095 43.6%,#722095 45.0%,#8bcc48 46.4%,#6bc55a 47.8%,#65c35e 49.2%,#42ba72 50.7%,#83cb4c 52.1%,#59c064 53.5%,#4abc6d 54.9%,#38b778 56.3%,#4fbd6a 57.7%,#60c260 59.1%,#60c260 60.0%,#2eaf7e 60.1%,#43ba71 85.0%,#5dc162 100.0%)"></div><div style="left:1548.1px;top:555.2px;width:5.4px;height:353.5px;background:linear-gradient(#000 0.0%,#000 16.0%,#030104 16.7%,#000001 18.1%,#000000 19.5%,#030105 21.0%,#050108 22.4%,#100318 23.8%,#0b0211 25.2%,#1e072c 26.6%,#11031b 28.0%,#13041d 29.4%,#13041e 30.9%,#2a0a3d 32.3%,#3b0e54 33.7%,#3a0e53 35.1%,#551774 36.5%,#3e0f58 37.9%,#4e146b 39.3%,#40105c 40.8%,#1f9e89 42.2%,#722095 43.6%,#1f9e89 45.0%,#88cc49 46.4%,#94cb44 47.8%,#c9c730 49.2%,#c4c732 50.7%,#8acc49 52.1%,#c2c732 53.5%,#a9c93c 54.9%,#a9c93c 56.3%,#85cc4b 57.7%,#c0c833 59.1%,#c0c833 60.0%,#3cb875 60.1%,#68c45c 85.0%,#7eca4f 100.0%)"></div><div style="left:1553.1px;top:555.2px;width:5.4px;height:353.5px;background:linear-gradient(#000 0.0%,#000 16.0%,#000000 16.7%,#000000 18.1%,#000000 19.5%,#0c0213 21.0%,#0a020f 22.4%,#0c0212 23.8%,#0d0314 25.2%,#11031b 26.6%,#13041e 28.0%,#230834 29.4%,#20072f 30.9%,#370d4e 32.3%,#3e0f58 33.7%,#2d0b42 35.1%,#51156f 36.5%,#4d146a 37.9%,#5a187a 39.3%,#42105e 40.8%,#1f9e89 42.2%,#1f9e89 43.6%,#27a883 45.0%,#a7c93d 46.4%,#a9c93c 47.8%,#87cc49 49.2%,#a4ca3e 50.7%,#cac72f 52.1%,#b9c836 53.5%,#bcc835 54.9%,#b0c939 56.3%,#73c755 57.7%,#89cc49 59.1%,#89cc49 60.0%,#3cb875 60.1%,#68c45c 85.0%,#7eca4f 100.0%)"></div><div style="left:1558.1px;top:555.2px;width:5.4px;height:353.5px;background:linear-gradient(#000 0.0%,#000 16.0%,#000000 16.7%,#000000 18.1%,#040106 19.5%,#040106 21.0%,#07010b 22.4%,#11031a 23.8%,#13041e 25.2%,#12041b 26.6%,#0f0318 28.0%,#290a3c 29.4%,#20072f 30.9%,#220832 32.3%,#481264 33.7%,#41105d 35.1%,#4c1369 36.5%,#43105f 37.9%,#6a1e8c 39.3%,#451161 40.8%,#27a883 42.2%,#1f9e89 43.6%,#722095 45.0%,#31b37c 46.4%,#44ba71 47.8%,#37b778 49.2%,#2bac80 50.7%,#3ab877 52.1%,#32b37c 53.5%,#26a684 54.9%,#26a684 56.3%,#2aab81 57.7%,#33b57b 59.1%,#33b57b 60.0%,#3cb875 60.1%,#75c754 85.0%,#7eca4f 100.0%)"></div><div style="left:1563.1px;top:555.2px;width:5.4px;height:353.5px;background:linear-gradient(#000 0.0%,#000 16.0%,#000000 16.7%,#020004 18.1%,#08020c 19.5%,#030105 21.0%,#0a020f 22.4%,#0e0315 23.8%,#11031b 25.2%,#190526 26.6%,#13041e 28.0%,#210731 29.4%,#29093b 30.9%,#240835 32.3%,#4e146c 33.7%,#3f0f5a 35.1%,#4c146a 36.5%,#4e146c 37.9%,#531671 39.3%,#1f9e89 40.8%,#30b17d 42.2%,#722095 43.6%,#722095 45.0%,#4ebd6b 46.4%,#30b17d 47.8%,#2bab81 49.2%,#5ac064 50.7%,#2aaa81 52.1%,#2dae7f 53.5%,#2fb07e 54.9%,#43ba71 56.3%,#2cad80 57.7%,#2aaa81 59.1%,#2aaa81 60.0%,#4dbd6c 60.1%,#74c754 85.0%,#90cb46 100.0%)"></div><div style="left:1568.2px;top:555.2px;width:5.4px;height:353.5px;background:linear-gradient(#000 0.0%,#000 16.0%,#040107 16.7%,#000000 18.1%,#07010c 19.5%,#08020c 21.0%,#0d0314 22.4%,#08020d 23.8%,#14041f 25.2%,#160421 26.6%,#190525 28.0%,#190525 29.4%,#330c49 30.9%,#3b0e54 32.3%,#370d4e 33.7%,#4e146c 35.1%,#651c87 36.5%,#6b1e8e 37.9%,#75239a 39.3%,#752299 40.8%,#27a883 42.2%,#1f9e89 43.6%,#722095 45.0%,#3cb875 46.4%,#2eaf7f 47.8%,#2fb07e 49.2%,#32b47b 50.7%,#2cad80 52.1%,#2aaa81 53.5%,#33b57b 54.9%,#2dae7f 56.3%,#37b778 57.7%,#28a982 59.1%,#28a982 60.0%,#32b47c 60.1%,#5fc261 85.0%,#6dc558 100.0%)"></div><div style="left:1573.2px;top:555.2px;width:5.4px;height:353.5px;background:linear-gradient(#000 0.0%,#000 16.0%,#040107 16.7%,#000000 18.1%,#000000 19.5%,#030105 21.0%,#11031a 22.4%,#0c0212 23.8%,#0c0213 25.2%,#190526 26.6%,#13041e 28.0%,#250836 29.4%,#3a0e53 30.9%,#300b45 32.3%,#581878 33.7%,#621b83 35.1%,#752299 36.5%,#561775 37.9%,#551774 39.3%,#50156e 40.8%,#44ba70 42.2%,#1f9e89 43.6%,#722095 45.0%,#88cc49 46.4%,#a5ca3e 47.8%,#a6ca3d 49.2%,#77c853 50.7%,#5ec162 52.1%,#8bcc48 53.5%,#7eca4f 54.9%,#55bf67 56.3%,#66c35d 57.7%,#5cc163 59.1%,#5cc163 60.0%,#32b47c 60.1%,#61c260 85.0%,#6dc558 100.0%)"></div><div style="left:1578.2px;top:555.2px;width:5.4px;height:353.5px;background:linear-gradient(#000 0.0%,#000 16.0%,#010002 16.7%,#000000 18.1%,#000001 19.5%,#07010b 21.0%,#0e0316 22.4%,#11031a 23.8%,#0e0316 25.2%,#1c062a 26.6%,#2b0a3e 28.0%,#2f0b44 29.4%,#250937 30.9%,#290a3c 32.3%,#4d146a 33.7%,#5c197c 35.1%,#631c85 36.5%,#712094 37.9%,#621b83 39.3%,#752299 40.8%,#30b17d 42.2%,#1f9e89 43.6%,#44ba70 45.0%,#26a684 46.4%,#31b37c 47.8%,#29a982 49.2%,#21a187 50.7%,#33b57b 52.1%,#25a585 53.5%,#219a8a 54.9%,#2bac80 56.3%,#26a784 57.7%,#2dae7f 59.1%,#2dae7f 60.0%,#2eaf7e 60.1%,#51be69 85.0%,#5dc162 100.0%)"></div><div style="left:1583.2px;top:555.2px;width:5.4px;height:353.5px;background:linear-gradient(#000 0.0%,#000 16.0%,#000000 16.7%,#050107 18.1%,#020003 19.5%,#0a0210 21.0%,#060109 22.4%,#13041e 23.8%,#0e0315 25.2%,#190526 26.6%,#2b0a3e 28.0%,#330c49 29.4%,#3d0f57 30.9%,#360d4e 32.3%,#5b197b 33.7%,#621b83 35.1%,#5a1879 36.5%,#6b1e8d 37.9%,#6d1f90 39.3%,#6a1e8c 40.8%,#44ba70 42.2%,#27a883 43.6%,#27a883 45.0%,#29a982 46.4%,#2daf7f 47.8%,#28a982 49.2%,#34b67a 50.7%,#32b37c 52.1%,#23a386 53.5%,#25a585 54.9%,#2bac81 56.3%,#27a784 57.7%,#29a982 59.1%,#29a982 60.0%,#2eaf7e 60.1%,#44ba70 85.0%,#5dc162 100.0%)"></div><div style="left:1588.2px;top:555.2px;width:5.4px;height:353.5px;background:linear-gradient(#000 0.0%,#000 16.0%,#040106 16.7%,#000000 18.1%,#030104 19.5%,#050108 21.0%,#11031b 22.4%,#09020e 23.8%,#0f0317 25.2%,#160421 26.6%,#260938 28.0%,#2d0b42 29.4%,#230834 30.9%,#350d4d 32.3%,#360d4d 33.7%,#1f9e89 35.1%,#471264 36.5%,#70289a 37.9%,#651c86 39.3%,#6c2d99 40.8%,#27a883 42.2%,#44ba70 43.6%,#30b17d 45.0%,#24a486 46.4%,#2aab81 47.8%,#2dae7f 49.2%,#22a287 50.7%,#28a883 52.1%,#219a8a 53.5%,#2eaf7e 54.9%,#23968b 56.3%,#209f88 57.7%,#28a982 59.1%,#28a982 60.0%,#2eaf7e 60.1%,#42ba72 85.0%,#5dc162 100.0%)"></div><div style="left:1593.2px;top:555.2px;width:5.4px;height:353.5px;background:linear-gradient(#000 0.0%,#000 16.0%,#000000 16.7%,#06010a 18.1%,#08020d 19.5%,#0b0211 21.0%,#0c0212 22.4%,#150421 23.8%,#10031a 25.2%,#180525 26.6%,#2f0b44 28.0%,#320c48 29.4%,#2f0b45 30.9%,#441160 32.3%,#3b0e54 33.7%,#5d197d 35.1%,#551774 36.5%,#521671 37.9%,#643499 39.3%,#1f9e89 40.8%,#30b17d 42.2%,#722095 43.6%,#722095 45.0%,#b0c939 46.4%,#e5bf25 47.8%,#e6bf25 49.2%,#afc93a 50.7%,#9eca41 52.1%,#d0c62d 53.5%,#c5c731 54.9%,#acc93b 56.3%,#82cb4c 57.7%,#7fca4e 59.1%,#7fca4e 60.0%,#2eaf7e 60.1%,#4dbd6b 85.0%,#5dc162 100.0%)"></div><div style="left:1598.2px;top:555.2px;width:5.4px;height:353.5px;background:linear-gradient(#000 0.0%,#000 16.0%,#000000 16.7%,#020002 18.1%,#07010b 19.5%,#07010b 21.0%,#09020e 22.4%,#0b0211 23.8%,#14041f 25.2%,#260937 26.6%,#14041f 28.0%,#310c47 29.4%,#350d4d 30.9%,#300b45 32.3%,#531672 33.7%,#3e0f58 35.1%,#6d1f90 36.5%,#4f146c 37.9%,#691e8c 39.3%,#561775 40.8%,#44ba70 42.2%,#30b17d 43.6%,#30b17d 45.0%,#a0ca40 46.4%,#9fca40 47.8%,#dec528 49.2%,#e5c025 50.7%,#abc93c 52.1%,#87cc4a 53.5%,#91cb46 54.9%,#cac72f 56.3%,#cfc62d 57.7%,#c3c732 59.1%,#c3c732 60.0%,#2eaf7e 60.1%,#42ba72 85.0%,#5dc162 100.0%)"></div><div style="left:1603.2px;top:555.2px;width:5.4px;height:353.5px;background:linear-gradient(#000 0.0%,#000 16.0%,#040107 16.7%,#09020e 18.1%,#09020e 19.5%,#07010a 21.0%,#0b0210 22.4%,#100318 23.8%,#0c0213 25.2%,#100319 26.6%,#1e072c 28.0%,#1b0628 29.4%,#28093a 30.9%,#41105d 32.3%,#370d4e 33.7%,#3b0e54 35.1%,#3d0f57 36.5%,#722196 37.9%,#571777 39.3%,#51156f 40.8%,#1f9e89 42.2%,#30b17d 43.6%,#30b17d 45.0%,#b7c837 46.4%,#e4c125 47.8%,#aec93a 49.2%,#9aca42 50.7%,#94cb44 52.1%,#afc93a 53.5%,#98cb43 54.9%,#d3c62c 56.3%,#7fca4e 57.7%,#a0ca40 59.1%,#a0ca40 60.0%,#6dc558 60.1%,#a6ca3d 85.0%,#b9c836 100.0%)"></div><div style="left:1608.3px;top:555.2px;width:5.4px;height:353.5px;background:linear-gradient(#000 0.0%,#000 16.0%,#06010a 16.7%,#07010b 18.1%,#07010a 19.5%,#07010a 21.0%,#0b0212 22.4%,#0a0210 23.8%,#0e0315 25.2%,#150420 26.6%,#1a0627 28.0%,#200730 29.4%,#1e072d 30.9%,#471264 32.3%,#3c0f56 33.7%,#4a1368 35.1%,#6b1e8d 36.5%,#76229a 37.9%,#5e1a7e 39.3%,#73259a 40.8%,#27a883 42.2%,#722095 43.6%,#44ba70 45.0%,#a9c93c 46.4%,#97cb43 47.8%,#b6c837 49.2%,#c0c833 50.7%,#bfc834 52.1%,#91cb46 53.5%,#9cca41 54.9%,#96cb44 56.3%,#8ccc48 57.7%,#aac93c 59.1%,#aac93c 60.0%,#6dc558 60.1%,#97cb43 85.0%,#b9c836 100.0%)"></div><div style="left:1613.3px;top:555.2px;width:5.4px;height:353.5px;background:linear-gradient(#000 0.0%,#000 16.0%,#000000 16.7%,#000000 18.1%,#050108 19.5%,#0e0316 21.0%,#050108 22.4%,#0d0315 23.8%,#160522 25.2%,#0d0315 26.6%,#1f072e 28.0%,#1c062a 29.4%,#350d4c 30.9%,#400f5b 32.3%,#491366 33.7%,#50156e 35.1%,#4a1367 36.5%,#5e1a7e 37.9%,#5b197a 39.3%,#511570 40.8%,#27a883 42.2%,#44ba70 43.6%,#1f9e89 45.0%,#b9c836 46.4%,#c1c833 47.8%,#9eca41 49.2%,#a7ca3d 50.7%,#bac836 52.1%,#8dcb47 53.5%,#cac730 54.9%,#bbc835 56.3%,#b6c837 57.7%,#bcc835 59.1%,#bcc835 60.0%,#3cb875 60.1%,#61c260 85.0%,#7eca4f 100.0%)"></div><div style="left:1618.3px;top:555.2px;width:5.4px;height:353.5px;background:linear-gradient(#000 0.0%,#000 16.0%,#050108 16.7%,#040106 18.1%,#050107 19.5%,#08020d 21.0%,#11031a 22.4%,#0b0211 23.8%,#180524 25.2%,#100319 26.6%,#29093b 28.0%,#160522 29.4%,#2f0b44 30.9%,#3a0e52 32.3%,#350d4c 33.7%,#541673 35.1%,#481265 36.5%,#541672 37.9%,#561775 39.3%,#691d8a 40.8%,#44ba70 42.2%,#1f9e89 43.6%,#27a883 45.0%,#41ba72 46.4%,#3db875 47.8%,#66c45c 49.2%,#4fbd6a 50.7%,#7ac951 52.1%,#5ec161 53.5%,#51be69 54.9%,#70c657 56.3%,#73c755 57.7%,#42ba72 59.1%,#42ba72 60.0%,#29aa82 60.1%,#3fb974 85.0%,#4dbd6c 100.0%)"></div><div style="left:1623.3px;top:555.2px;width:5.4px;height:353.5px;background:linear-gradient(#000 0.0%,#000 16.0%,#020003 16.7%,#050108 18.1%,#07010c 19.5%,#07010b 21.0%,#060109 22.4%,#0d0314 23.8%,#0f0317 25.2%,#20072f 26.6%,#2b0a3e 28.0%,#360d4d 29.4%,#28093b 30.9%,#451162 32.3%,#2f0b44 33.7%,#3a0e53 35.1%,#551774 36.5%,#531671 37.9%,#631b84 39.3%,#50156e 40.8%,#1f9e89 42.2%,#1f9e89 43.6%,#30b17d 45.0%,#9dca41 46.4%,#d4c62b 47.8%,#9cca41 49.2%,#a6ca3e 50.7%,#a6ca3d 52.1%,#7fca4e 53.5%,#bcc835 54.9%,#c1c833 56.3%,#93cb45 57.7%,#aec93b 59.1%,#aec93b 60.0%,#29aa82 60.1%,#33b57b 85.0%,#4dbd6c 100.0%)"></div><div style="left:1628.3px;top:555.2px;width:5.4px;height:353.5px;background:linear-gradient(#000 0.0%,#000 16.0%,#000000 16.7%,#020003 18.1%,#040106 19.5%,#0c0213 21.0%,#11031a 22.4%,#14041f 23.8%,#12041c 25.2%,#180524 26.6%,#150420 28.0%,#300b45 29.4%,#2d0a41 30.9%,#28093b 32.3%,#1f9e89 33.7%,#3d0f58 35.1%,#4a1367 36.5%,#5d197d 37.9%,#5d197d 39.3%,#76229a 40.8%,#27a883 42.2%,#1f9e89 43.6%,#44ba70 45.0%,#80ca4e 46.4%,#7fca4e 47.8%,#91cb46 49.2%,#e0c527 50.7%,#b7c837 52.1%,#7eca4f 53.5%,#74c754 54.9%,#6fc658 56.3%,#6ec658 57.7%,#77c853 59.1%,#77c853 60.0%,#29aa82 60.1%,#34b67a 85.0%,#4dbd6c 100.0%)"></div><div style="left:1633.3px;top:555.2px;width:5.4px;height:353.5px;background:linear-gradient(#000 0.0%,#000 16.0%,#020004 16.7%,#040106 18.1%,#020003 19.5%,#09020d 21.0%,#0e0316 22.4%,#11031a 23.8%,#0d0315 25.2%,#100319 26.6%,#170524 28.0%,#150420 29.4%,#360d4d 30.9%,#41105c 32.3%,#481265 33.7%,#641c86 35.1%,#491266 36.5%,#511570 37.9%,#722195 39.3%,#6e2a99 40.8%,#30b17d 42.2%,#722095 43.6%,#722095 45.0%,#9fca40 46.4%,#c6c731 47.8%,#b7c837 49.2%,#d4c62c 50.7%,#9aca42 52.1%,#72c756 53.5%,#b7c837 54.9%,#9dca41 56.3%,#b1c939 57.7%,#acc93b 59.1%,#acc93b 60.0%,#4dbd6c 60.1%,#80ca4d 85.0%,#90cb46 100.0%)"></div><div style="left:1638.3px;top:555.2px;width:5.4px;height:353.5px;background:linear-gradient(#000 0.0%,#000 16.0%,#000000 16.7%,#000000 18.1%,#09020e 19.5%,#030105 21.0%,#0d0314 22.4%,#11031a 23.8%,#11031a 25.2%,#0c0213 26.6%,#1c062a 28.0%,#2f0b44 29.4%,#28093b 30.9%,#370d4f 32.3%,#29093b 33.7%,#350d4c 35.1%,#370d4f 36.5%,#5f1a7f 37.9%,#1f9e89 39.3%,#651c87 40.8%,#30b17d 42.2%,#722095 43.6%,#722095 45.0%,#5fc261 46.4%,#5ec162 47.8%,#a9c93c 49.2%,#a3ca3f 50.7%,#92cb45 52.1%,#6ac55a 53.5%,#5fc161 54.9%,#70c657 56.3%,#92cb45 57.7%,#7bc950 59.1%,#7bc950 60.0%,#21a088 60.1%,#2aaa81 85.0%,#32b47b 100.0%)"></div><div style="left:1643.3px;top:555.2px;width:5.4px;height:353.5px;background:linear-gradient(#000 0.0%,#000 16.0%,#020004 16.7%,#08020d 18.1%,#040106 19.5%,#0c0213 21.0%,#100318 22.4%,#09020e 23.8%,#09020f 25.2%,#0c0213 26.6%,#11031b 28.0%,#1e072d 29.4%,#2d0b41 30.9%,#2b0a3e 32.3%,#300b46 33.7%,#51156f 35.1%,#441161 36.5%,#3f0f5a 37.9%,#551774 39.3%,#661c87 40.8%,#44ba70 42.2%,#44ba70 43.6%,#44ba70 45.0%,#6ec658 46.4%,#7eca4f 47.8%,#a9c93c 49.2%,#afc93a 50.7%,#83cb4c 52.1%,#86cc4a 53.5%,#64c35e 54.9%,#5ac063 56.3%,#50be69 57.7%,#71c656 59.1%,#71c656 60.0%,#29aa82 60.1%,#32b47b 85.0%,#4dbd6c 100.0%)"></div><div style="left:1648.3px;top:555.2px;width:5.4px;height:353.5px;background:linear-gradient(#000 0.0%,#000 16.0%,#000000 16.7%,#000000 18.1%,#0b0212 19.5%,#0a0210 21.0%,#0b0211 22.4%,#0e0316 23.8%,#190526 25.2%,#1a0627 26.6%,#14041f 28.0%,#350d4c 29.4%,#3a0e54 30.9%,#41105c 32.3%,#471264 33.7%,#641c85 35.1%,#471264 36.5%,#601a81 37.9%,#73259a 39.3%,#601a80 40.8%,#722095 42.2%,#1f9e89 43.6%,#722095 45.0%,#8bcc48 46.4%,#87cc4a 47.8%,#78c852 49.2%,#72c756 50.7%,#66c35d 52.1%,#86cc4a 53.5%,#81cb4d 54.9%,#58c065 56.3%,#92cb45 57.7%,#51be69 59.1%,#51be69 60.0%,#6dc558 60.1%,#9bca42 85.0%,#b9c836 100.0%)"></div><div style="left:1653.4px;top:555.2px;width:5.4px;height:353.5px;background:linear-gradient(#000 0.0%,#000 16.0%,#020003 16.7%,#000000 18.1%,#07010b 19.5%,#020004 21.0%,#11031a 22.4%,#08020d 23.8%,#0d0314 25.2%,#12041c 26.6%,#12041d 28.0%,#28093b 29.4%,#290a3c 30.9%,#3e0f58 32.3%,#340c4b 33.7%,#441160 35.1%,#6a1e8c 36.5%,#76229a 37.9%,#5c197c 39.3%,#621b83 40.8%,#44ba70 42.2%,#27a883 43.6%,#722095 45.0%,#dec528 46.4%,#e8bb24 47.8%,#f1ab22 49.2%,#e7bd25 50.7%,#cec72e 52.1%,#dfc527 53.5%,#c9c730 54.9%,#e1c526 56.3%,#d4c62b 57.7%,#e1c526 59.1%,#e1c526 60.0%,#6dc558 60.1%,#97cb43 85.0%,#b9c836 100.0%)"></div><div style="left:1658.4px;top:555.2px;width:5.4px;height:353.5px;background:linear-gradient(#000 0.0%,#000 16.0%,#000000 16.7%,#08020d 18.1%,#08020c 19.5%,#08020c 21.0%,#0f0318 22.4%,#0b0211 23.8%,#12041c 25.2%,#0f0317 26.6%,#14041f 28.0%,#150421 29.4%,#3a0e54 30.9%,#3b0e55 32.3%,#471264 33.7%,#631b84 35.1%,#431160 36.5%,#6c1f8f 37.9%,#70289a 39.3%,#5c197d 40.8%,#1f9e89 42.2%,#722095 43.6%,#30b17d 45.0%,#33b57b 46.4%,#2bac81 47.8%,#32b47b 49.2%,#2eaf7e 50.7%,#39b777 52.1%,#2cad80 53.5%,#2dae7f 54.9%,#2fb07e 56.3%,#42ba72 57.7%,#31b37c 59.1%,#31b37c 60.0%,#6dc558 60.1%,#9aca42 85.0%,#b9c836 100.0%)"></div><div style="left:1663.4px;top:555.2px;width:5.4px;height:353.5px;background:linear-gradient(#000 0.0%,#000 16.0%,#000000 16.7%,#000000 18.1%,#040107 19.5%,#08020c 21.0%,#09020e 22.4%,#0b0211 23.8%,#14041e 25.2%,#210731 26.6%,#13041e 28.0%,#370d4f 29.4%,#300b45 30.9%,#41105d 32.3%,#370d50 33.7%,#4d146a 35.1%,#702093 36.5%,#71279a 37.9%,#691e8b 39.3%,#4c146a 40.8%,#30b17d 42.2%,#722095 43.6%,#722095 45.0%,#2fb07e 46.4%,#37b778 47.8%,#31b37c 49.2%,#2bac80 50.7%,#2fb07e 52.1%,#29a982 53.5%,#3bb876 54.9%,#2eaf7e 56.3%,#2aab81 57.7%,#2dae7f 59.1%,#2dae7f 60.0%,#6dc558 60.1%,#acc93b 85.0%,#b9c836 100.0%)"></div><div style="left:1668.4px;top:555.2px;width:5.4px;height:353.5px;background:linear-gradient(#000 0.0%,#000 16.0%,#000000 16.7%,#020003 18.1%,#050107 19.5%,#0d0315 21.0%,#050108 22.4%,#100319 23.8%,#0c0212 25.2%,#210731 26.6%,#150421 28.0%,#300b46 29.4%,#28093b 30.9%,#3b0e55 32.3%,#561775 33.7%,#4c1369 35.1%,#4b1369 36.5%,#5c197c 37.9%,#551674 39.3%,#72269a 40.8%,#722095 42.2%,#27a883 43.6%,#27a883 45.0%,#54be67 46.4%,#4abc6d 47.8%,#2eaf7e 49.2%,#2bac80 50.7%,#32b47b 52.1%,#2dae7f 53.5%,#2fb07e 54.9%,#33b57b 56.3%,#2aaa81 57.7%,#2aab81 59.1%,#2aab81 60.0%,#29aa82 60.1%,#34b67a 85.0%,#4dbd6c 100.0%)"></div><div style="left:1673.4px;top:555.2px;width:5.4px;height:353.5px;background:linear-gradient(#000 0.0%,#000 16.0%,#040106 16.7%,#06010a 18.1%,#030104 19.5%,#050107 21.0%,#07010b 22.4%,#0b0210 23.8%,#0e0316 25.2%,#1f072e 26.6%,#12041c 28.0%,#340c4b 29.4%,#3a0e54 30.9%,#41105d 32.3%,#3c0e55 33.7%,#441160 35.1%,#6a1e8c 36.5%,#76229a 37.9%,#71279a 39.3%,#71279a 40.8%,#44ba70 42.2%,#30b17d 43.6%,#30b17d 45.0%,#4fbd6a 46.4%,#57bf66 47.8%,#4bbc6d 49.2%,#2daf7f 50.7%,#4ebd6b 52.1%,#27a883 53.5%,#28a982 54.9%,#27a783 56.3%,#2eb07e 57.7%,#28a982 59.1%,#28a982 60.0%,#25a584 60.1%,#2eaf7e 85.0%,#3cb875 100.0%)"></div><div style="left:1678.4px;top:555.2px;width:5.4px;height:353.5px;background:linear-gradient(#000 0.0%,#000 16.0%,#010002 16.7%,#040106 18.1%,#08020c 19.5%,#0c0213 21.0%,#09020e 22.4%,#0c0213 23.8%,#0f0317 25.2%,#230834 26.6%,#190525 28.0%,#350d4d 29.4%,#2f0b44 30.9%,#3b0e55 32.3%,#41105c 33.7%,#5d197d 35.1%,#471263 36.5%,#591879 37.9%,#722196 39.3%,#74249a 40.8%,#1f9e89 42.2%,#27a883 43.6%,#722095 45.0%,#bdc835 46.4%,#d2c62c 47.8%,#c5c731 49.2%,#bbc835 50.7%,#bac836 52.1%,#a8c93d 53.5%,#acc93b 54.9%,#9aca42 56.3%,#adc93b 57.7%,#e3c326 59.1%,#e3c326 60.0%,#25a584 60.1%,#33b57b 85.0%,#3cb875 100.0%)"></div><div style="left:1683.4px;top:555.2px;width:5.4px;height:353.5px;background:linear-gradient(#000 0.0%,#000 16.0%,#07010a 16.7%,#020003 18.1%,#050108 19.5%,#08020d 21.0%,#11031a 22.4%,#0c0213 23.8%,#0c0212 25.2%,#210731 26.6%,#13041d 28.0%,#2f0b44 29.4%,#260938 30.9%,#290a3c 32.3%,#300b46 33.7%,#561775 35.1%,#4e146c 36.5%,#6e1f91 37.9%,#5a1879 39.3%,#70289a 40.8%,#44ba70 42.2%,#27a883 43.6%,#722095 45.0%,#eab724 46.4%,#b8c836 47.8%,#e8ba24 49.2%,#d0c62d 50.7%,#e2c526 52.1%,#4b1368 53.5%,#4b1368 54.9%,#4b1368 56.3%,#4b1368 57.7%,#4b1368 59.1%,#4b1368 60.0%,#3b5f96 60.1%,#29aa82 68.0%,#33b57b 85.0%,#3cb875 100.0%)"></div><div style="left:1688.4px;top:555.2px;width:5.4px;height:353.5px;background:linear-gradient(#000 0.0%,#000 16.0%,#07010a 16.7%,#07010a 18.1%,#010002 19.5%,#0c0213 21.0%,#060109 22.4%,#12041d 23.8%,#1c062a 25.2%,#100318 26.6%,#12041b 28.0%,#310b46 29.4%,#290a3c 30.9%,#3d0f57 32.3%,#551774 33.7%,#5d197d 35.1%,#661d88 36.5%,#71289a 37.9%,#72269a 39.3%,#631b84 40.8%,#1f9e89 42.2%,#1f9e89 43.6%,#44ba70 45.0%,#eab624 46.4%,#b2c939 47.8%,#b2c939 49.2%,#dcc528 50.7%,#b6c837 52.1%,#b6c837 53.5%,#b3c938 54.9%,#c4c732 56.3%,#b3c938 57.7%,#c6c731 59.1%,#c6c731 60.0%,#3cb875 60.1%,#65c35d 85.0%,#7eca4f 100.0%)"></div><div style="left:1693.4px;top:555.2px;width:5.4px;height:353.5px;background:linear-gradient(#000 0.0%,#000 16.0%,#000000 16.7%,#07010b 18.1%,#010001 19.5%,#09020d 21.0%,#0c0213 22.4%,#0c0212 23.8%,#150420 25.2%,#13041d 26.6%,#1a0628 28.0%,#2c0a40 29.4%,#42105e 30.9%,#310c47 32.3%,#471263 33.7%,#521671 35.1%,#4a1367 36.5%,#6d1f90 37.9%,#76229a 39.3%,#732197 40.8%,#1f9e89 42.2%,#722095 43.6%,#44ba70 45.0%,#ccc72f 46.4%,#e8ba24 47.8%,#e8bb24 49.2%,#bbc835 50.7%,#d3c62c 52.1%,#e3c326 53.5%,#e4c125 54.9%,#e3c426 56.3%,#bdc834 57.7%,#9fca40 59.1%,#9fca40 60.0%,#3cb875 60.1%,#73c755 85.0%,#7eca4f 100.0%)"></div><div style="left:1698.5px;top:555.2px;width:5.4px;height:353.5px;background:linear-gradient(#000 0.0%,#000 16.0%,#020004 16.7%,#000000 18.1%,#060109 19.5%,#050107 21.0%,#100318 22.4%,#12041b 23.8%,#1f072e 25.2%,#210730 26.6%,#2d0b42 28.0%,#210731 29.4%,#2c0a40 30.9%,#330c49 32.3%,#3e0f59 33.7%,#451161 35.1%,#6a1e8d 36.5%,#6c2c99 37.9%,#601a80 39.3%,#691d8a 40.8%,#30b17d 42.2%,#30b17d 43.6%,#1f9e89 45.0%,#32b47b 46.4%,#24a386 47.8%,#2bac80 49.2%,#2cad7f 50.7%,#2eb07e 52.1%,#2aab81 53.5%,#2cad80 54.9%,#25a585 56.3%,#2eb07e 57.7%,#25a585 59.1%,#25a585 60.0%,#21a088 60.1%,#2cad80 85.0%,#32b47b 100.0%)"></div><div style="left:1703.5px;top:555.2px;width:5.4px;height:353.5px;background:linear-gradient(#000 0.0%,#000 16.0%,#06010a 16.7%,#040107 18.1%,#020003 19.5%,#0b0212 21.0%,#07010a 22.4%,#11031a 23.8%,#1f072e 25.2%,#150421 26.6%,#13041e 28.0%,#1c062a 29.4%,#260937 30.9%,#2d0b42 32.3%,#43105f 33.7%,#481264 35.1%,#4b1368 36.5%,#5d1a7e 37.9%,#661c87 39.3%,#72269a 40.8%,#27a883 42.2%,#44ba70 43.6%,#30b17d 45.0%,#2bab81 46.4%,#27a783 47.8%,#25a485 49.2%,#36b779 50.7%,#38b778 52.1%,#2bab81 53.5%,#2eb07e 54.9%,#28a883 56.3%,#2bac80 57.7%,#25a585 59.1%,#25a585 60.0%,#21a088 60.1%,#2eaf7f 85.0%,#32b47b 100.0%)"></div><div style="left:1708.5px;top:555.2px;width:5.4px;height:353.5px;background:linear-gradient(#000 0.0%,#000 16.0%,#000000 16.7%,#07010a 18.1%,#0b0211 19.5%,#050108 21.0%,#07010b 22.4%,#08020d 23.8%,#0f0317 25.2%,#11031a 26.6%,#160421 28.0%,#1d062c 29.4%,#2b0a3f 30.9%,#2f0b44 32.3%,#1f9e89 33.7%,#671d89 35.1%,#6c1f8e 36.5%,#521570 37.9%,#653399 39.3%,#681d8a 40.8%,#44ba70 42.2%,#44ba70 43.6%,#27a883 45.0%,#26a684 46.4%,#2cad7f 47.8%,#3bb876 49.2%,#2cad80 50.7%,#38b777 52.1%,#21998a 53.5%,#2eaf7f 54.9%,#24a485 56.3%,#30b17d 57.7%,#2aab81 59.1%,#2aab81 60.0%,#21a088 60.1%,#2bac80 85.0%,#32b47b 100.0%)"></div><div style="left:1713.5px;top:555.2px;width:5.4px;height:353.5px;background:linear-gradient(#000 0.0%,#000 16.0%,#000000 16.7%,#08020d 18.1%,#060109 19.5%,#050108 21.0%,#060109 22.4%,#0c0212 23.8%,#14041f 25.2%,#100318 26.6%,#2d0b41 28.0%,#270939 29.4%,#300b46 30.9%,#4c1369 32.3%,#551774 33.7%,#5a187a 35.1%,#5b197b 36.5%,#541672 37.9%,#702093 39.3%,#591878 40.8%,#1f9e89 42.2%,#44ba70 43.6%,#722095 45.0%,#bdc834 46.4%,#c0c833 47.8%,#e9b824 49.2%,#b5c837 50.7%,#eab624 52.1%,#acc93b 53.5%,#a3ca3e 54.9%,#d3c62c 56.3%,#e2c526 57.7%,#bbc835 59.1%,#bbc835 60.0%,#21a088 60.1%,#2bac80 85.0%,#32b47b 100.0%)"></div><div style="left:1718.5px;top:555.2px;width:5.4px;height:353.5px;background:linear-gradient(#000 0.0%,#000 16.0%,#000000 16.7%,#06010a 18.1%,#09020d 19.5%,#0d0315 21.0%,#0c0212 22.4%,#0d0314 23.8%,#0b0212 25.2%,#220832 26.6%,#190525 28.0%,#180525 29.4%,#250836 30.9%,#2a0a3d 32.3%,#4f146d 33.7%,#451161 35.1%,#601a80 36.5%,#6e1f91 37.9%,#732196 39.3%,#6d1f90 40.8%,#27a883 42.2%,#1f9e89 43.6%,#30b17d 45.0%,#d7c62a 46.4%,#cec72e 47.8%,#e4c226 49.2%,#e9b924 50.7%,#e4c226 52.1%,#96cb44 53.5%,#b1c939 54.9%,#bbc835 56.3%,#9fca40 57.7%,#dfc527 59.1%,#dfc527 60.0%,#21a088 60.1%,#2cad80 85.0%,#32b47b 100.0%)"></div><div style="left:1723.5px;top:555.2px;width:5.4px;height:353.5px;background:linear-gradient(#000 0.0%,#000 16.0%,#000000 16.7%,#08020c 18.1%,#0c0213 19.5%,#0a020f 21.0%,#11031b 22.4%,#0e0315 23.8%,#0e0316 25.2%,#12041b 26.6%,#1d062b 28.0%,#370d4f 29.4%,#2a0a3d 30.9%,#491266 32.3%,#5b197b 33.7%,#5d197d 35.1%,#5b197b 36.5%,#561775 37.9%,#5c197c 39.3%,#6b2d99 40.8%,#722095 42.2%,#1f9e89 43.6%,#44ba70 45.0%,#cfc62e 46.4%,#e8ba24 47.8%,#cfc62d 49.2%,#ebb623 50.7%,#c0c833 52.1%,#bfc834 53.5%,#a0ca40 54.9%,#e0c527 56.3%,#bcc835 57.7%,#dcc528 59.1%,#dcc528 60.0%,#4dbd6c 60.1%,#7eca4e 85.0%,#90cb46 100.0%)"></div><div style="left:1728.5px;top:555.2px;width:5.4px;height:353.5px;background:linear-gradient(#000 0.0%,#000 16.0%,#010002 16.7%,#010001 18.1%,#050108 19.5%,#0f0317 21.0%,#0b0211 22.4%,#100319 23.8%,#0c0213 25.2%,#0f0318 26.6%,#1f072e 28.0%,#260938 29.4%,#40105c 30.9%,#3d0f57 32.3%,#481265 33.7%,#481265 35.1%,#6c1f8f 36.5%,#5b197b 37.9%,#6a1e8c 39.3%,#742198 40.8%,#722095 42.2%,#722095 43.6%,#30b17d 45.0%,#d7c62a 46.4%,#bcc835 47.8%,#bdc834 49.2%,#e5c025 50.7%,#e4c225 52.1%,#9cca41 53.5%,#dec528 54.9%,#d5c62b 56.3%,#9fca40 57.7%,#9dca41 59.1%,#9dca41 60.0%,#32b47c 60.1%,#5fc261 85.0%,#6dc558 100.0%)"></div><div style="left:1733.5px;top:555.2px;width:5.4px;height:353.5px;background:linear-gradient(#000 0.0%,#000 16.0%,#000000 16.7%,#000000 18.1%,#050108 19.5%,#07010c 21.0%,#09020e 22.4%,#14041f 23.8%,#100319 25.2%,#12041c 26.6%,#170524 28.0%,#2e0b43 29.4%,#2b0a3e 30.9%,#350d4d 32.3%,#4f146d 33.7%,#4d146b 35.1%,#712094 36.5%,#643599 37.9%,#641c85 39.3%,#691d8b 40.8%,#44ba70 42.2%,#722095 43.6%,#27a883 45.0%,#ebb624 46.4%,#cdc72e 47.8%,#e5bf25 49.2%,#c6c731 50.7%,#cbc72f 52.1%,#4b1368 53.5%,#4b1368 54.9%,#4b1368 56.3%,#4b1368 57.7%,#4b1368 59.1%,#4b1368 60.0%,#3b5f96 60.1%,#3cb875 68.0%,#62c25f 85.0%,#6dc558 100.0%)"></div><div style="left:1738.6px;top:555.2px;width:5.4px;height:353.5px;background:linear-gradient(#000 0.0%,#000 16.0%,#000000 16.7%,#020002 18.1%,#0c0213 19.5%,#0e0315 21.0%,#0f0317 22.4%,#12041c 23.8%,#14041f 25.2%,#1b0628 26.6%,#13041e 28.0%,#20072f 29.4%,#3b0e54 30.9%,#4a1367 32.3%,#5b197b 33.7%,#621b83 35.1%,#5c197c 36.5%,#702093 37.9%,#603999 39.3%,#74249a 40.8%,#27a883 42.2%,#1f9e89 43.6%,#30b17d 45.0%,#a5ca3e 46.4%,#e6be25 47.8%,#c8c730 49.2%,#cac72f 50.7%,#e5c025 52.1%,#a7c93d 53.5%,#dfc527 54.9%,#a1ca3f 56.3%,#e4c225 57.7%,#e0c527 59.1%,#e0c527 60.0%,#21a088 60.1%,#2dae7f 85.0%,#32b47b 100.0%)"></div><div style="left:1743.6px;top:555.2px;width:5.4px;height:353.5px;background:linear-gradient(#000 0.0%,#000 16.0%,#000000 16.7%,#000000 18.1%,#050108 19.5%,#09020e 21.0%,#10031a 22.4%,#0d0313 23.8%,#13041d 25.2%,#12041c 26.6%,#1e072d 28.0%,#190526 29.4%,#330c49 30.9%,#3e0f59 32.3%,#571776 33.7%,#461162 35.1%,#5a187a 36.5%,#6b1e8e 37.9%,#5f1a7f 39.3%,#551774 40.8%,#44ba70 42.2%,#27a883 43.6%,#27a883 45.0%,#e5c025 46.4%,#bac836 47.8%,#d9c629 49.2%,#e7bc25 50.7%,#dec527 52.1%,#95cb44 53.5%,#98cb43 54.9%,#aec93b 56.3%,#dbc629 57.7%,#9cca41 59.1%,#9cca41 60.0%,#21a088 60.1%,#2aaa81 85.0%,#32b47b 100.0%)"></div><div style="left:1748.6px;top:555.2px;width:5.4px;height:353.5px;background:linear-gradient(#000 0.0%,#000 16.0%,#000000 16.7%,#000000 18.1%,#0a020f 19.5%,#020003 21.0%,#0c0212 22.4%,#0d0314 23.8%,#160522 25.2%,#28093a 26.6%,#260938 28.0%,#2d0b41 29.4%,#2b0a3e 30.9%,#29093c 32.3%,#41105d 33.7%,#5f1a80 35.1%,#74249a 36.5%,#702093 37.9%,#5f1a7f 39.3%,#641c85 40.8%,#27a883 42.2%,#30b17d 43.6%,#30b17d 45.0%,#e8bb24 46.4%,#bcc835 47.8%,#e8ba24 49.2%,#acc93b 50.7%,#d4c62c 52.1%,#d4c62c 53.5%,#e2c526 54.9%,#b0c939 56.3%,#cfc62e 57.7%,#d1c62d 59.1%,#d1c62d 60.0%,#21a088 60.1%,#2aaa81 85.0%,#32b47b 100.0%)"></div><div style="left:1753.6px;top:555.2px;width:5.4px;height:353.5px;background:linear-gradient(#000 0.0%,#000 16.0%,#060109 16.7%,#08020d 18.1%,#010001 19.5%,#060109 21.0%,#050108 22.4%,#07010b 23.8%,#0c0213 25.2%,#20072f 26.6%,#260938 28.0%,#150421 29.4%,#2c0a40 30.9%,#340c4b 32.3%,#441160 33.7%,#370d4f 35.1%,#5f1a7f 36.5%,#521570 37.9%,#671d88 39.3%,#671d89 40.8%,#44ba70 42.2%,#44ba70 43.6%,#44ba70 45.0%,#e7bd25 46.4%,#b3c938 47.8%,#e8bb24 49.2%,#c4c732 50.7%,#d2c62c 52.1%,#e1c527 53.5%,#91cb46 54.9%,#afc93a 56.3%,#dbc629 57.7%,#b5c838 59.1%,#b5c838 60.0%,#21a088 60.1%,#2fb17d 85.0%,#32b47b 100.0%)"></div><div style="left:1758.6px;top:555.2px;width:5.4px;height:353.5px;background:linear-gradient(#000 0.0%,#000 16.0%,#000000 16.7%,#000000 18.1%,#07010b 19.5%,#0d0314 21.0%,#0e0316 22.4%,#0c0212 23.8%,#09020d 25.2%,#0f0317 26.6%,#180524 28.0%,#11031b 29.4%,#220833 30.9%,#2a0a3d 32.3%,#320c48 33.7%,#4a1367 35.1%,#461162 36.5%,#4b1369 37.9%,#5d197d 39.3%,#42105e 40.8%,#44ba70 42.2%,#1f9e89 43.6%,#44ba70 45.0%,#60c260 46.4%,#6bc55a 47.8%,#69c45b 49.2%,#90cb46 50.7%,#78c852 52.1%,#4b1368 53.5%,#4b1368 54.9%,#4b1368 56.3%,#4b1368 57.7%,#4b1368 59.1%,#4b1368 60.0%,#3b5f96 60.1%,#25a584 68.0%,#2dae7f 85.0%,#32b47b 100.0%)"></div><div style="left:1763.6px;top:555.2px;width:5.4px;height:353.5px;background:linear-gradient(#000 0.0%,#000 16.0%,#000000 16.7%,#000000 18.1%,#020004 19.5%,#030104 21.0%,#07010a 22.4%,#0c0212 23.8%,#0e0316 25.2%,#0c0212 26.6%,#0f0317 28.0%,#11031a 29.4%,#220832 30.9%,#300b45 32.3%,#2e0b43 33.7%,#441160 35.1%,#42105e 36.5%,#541672 37.9%,#41105c 39.3%,#3d0f58 40.8%,#30b17d 42.2%,#1f9e89 43.6%,#722095 45.0%,#2dae7f 46.4%,#28a982 47.8%,#23a386 49.2%,#25a585 50.7%,#2bac80 52.1%,#2fb07d 53.5%,#2bab81 54.9%,#26a684 56.3%,#25a585 57.7%,#22a187 59.1%,#22a187 60.0%,#25a584 60.1%,#34b67a 85.0%,#3cb875 100.0%)"></div><div style="left:1768.6px;top:555.2px;width:5.4px;height:353.5px;background:linear-gradient(#000 0.0%,#000 16.0%,#000000 16.7%,#040106 18.1%,#07010b 19.5%,#040106 21.0%,#0b0211 22.4%,#0a0210 23.8%,#11031b 25.2%,#11031a 26.6%,#250836 28.0%,#1b0628 29.4%,#14041f 30.9%,#1c0629 32.3%,#240835 33.7%,#390e52 35.1%,#3e0f58 36.5%,#4c146a 37.9%,#491266 39.3%,#481265 40.8%,#44ba70 42.2%,#1f9e89 43.6%,#30b17d 45.0%,#2bab81 46.4%,#4bbc6d 47.8%,#51be69 49.2%,#2dad7f 50.7%,#54bf67 52.1%,#2dae7f 53.5%,#2eb07e 54.9%,#28a883 56.3%,#2eb07e 57.7%,#2aab81 59.1%,#2aab81 60.0%,#29aa82 60.1%,#32b47b 85.0%,#4dbd6c 100.0%)"></div><div style="left:1773.6px;top:555.2px;width:5.4px;height:353.5px;background:linear-gradient(#000 0.0%,#000 16.0%,#000000 16.7%,#08020d 18.1%,#030105 19.5%,#07010b 21.0%,#060109 22.4%,#09020e 23.8%,#0f0317 25.2%,#100318 26.6%,#100318 28.0%,#260937 29.4%,#2b0a3e 30.9%,#390e51 32.3%,#1f9e89 33.7%,#320c48 35.1%,#41105d 36.5%,#360d4e 37.9%,#42105d 39.3%,#3e0f58 40.8%,#722095 42.2%,#44ba70 43.6%,#44ba70 45.0%,#2bab81 46.4%,#53be68 47.8%,#2aab81 49.2%,#40b973 50.7%,#2dae7f 52.1%,#31b37c 53.5%,#28a883 54.9%,#30b17d 56.3%,#3fb974 57.7%,#30b27d 59.1%,#30b27d 60.0%,#29aa82 60.1%,#3bb876 85.0%,#4dbd6c 100.0%)"></div><div style="left:1778.6px;top:555.2px;width:5.4px;height:353.5px;background:linear-gradient(#000 0.0%,#000 16.0%,#020003 16.7%,#08020d 18.1%,#07010a 19.5%,#050108 21.0%,#040106 22.4%,#08020c 23.8%,#0f0318 25.2%,#0e0316 26.6%,#1a0627 28.0%,#12041c 29.4%,#250836 30.9%,#3b0e54 32.3%,#370d4f 33.7%,#4e146c 35.1%,#481265 36.5%,#3d0f57 37.9%,#4d146b 39.3%,#4d146a 40.8%,#27a883 42.2%,#27a883 43.6%,#30b17d 45.0%,#42ba72 46.4%,#44ba71 47.8%,#54bf67 49.2%,#2eaf7e 50.7%,#2cad80 52.1%,#4b1368 53.5%,#4b1368 54.9%,#4b1368 56.3%,#4b1368 57.7%,#4b1368 59.1%,#4b1368 60.0%,#29aa82 60.1%,#33b57b 85.0%,#4dbd6c 100.0%)"></div><div style="left:1783.7px;top:555.2px;width:5.4px;height:353.5px;background:linear-gradient(#000 0.0%,#000 16.0%,#040106 16.7%,#040106 18.1%,#0a020f 19.5%,#08020c 21.0%,#060109 22.4%,#13041d 23.8%,#0c0212 25.2%,#0c0213 26.6%,#1e072d 28.0%,#210731 29.4%,#300b45 30.9%,#210731 32.3%,#3d0f58 33.7%,#29093b 35.1%,#3d0f56 36.5%,#42105d 37.9%,#41105d 39.3%,#5f1a80 40.8%,#30b17d 42.2%,#722095 43.6%,#30b17d 45.0%,#50bd6a 46.4%,#2dae7f 47.8%,#2cad80 49.2%,#2cad7f 50.7%,#34b67a 52.1%,#4b1368 53.5%,#4b1368 54.9%,#4b1368 56.3%,#4b1368 57.7%,#4b1368 59.1%,#4b1368 60.0%,#29aa82 60.1%,#41ba72 85.0%,#4dbd6c 100.0%)"></div><div style="left:1788.7px;top:555.2px;width:5.4px;height:353.5px;background:linear-gradient(#000 0.0%,#000 16.0%,#020003 16.7%,#09020d 18.1%,#000000 19.5%,#050108 21.0%,#100318 22.4%,#12041c 23.8%,#0d0315 25.2%,#12041c 26.6%,#0f0317 28.0%,#1b0628 29.4%,#20072f 30.9%,#220832 32.3%,#220832 33.7%,#390e51 35.1%,#591879 36.5%,#5f1a7f 37.9%,#3c0e55 39.3%,#3e0f58 40.8%,#1f9e89 42.2%,#27a883 43.6%,#27a883 45.0%,#2dad7f 46.4%,#2cad80 47.8%,#2fb07d 49.2%,#2aaa81 50.7%,#53be68 52.1%,#4b1368 53.5%,#4b1368 54.9%,#4b1368 56.3%,#4b1368 57.7%,#4b1368 59.1%,#4b1368 60.0%,#3b5f96 60.1%,#2eaf7e 68.0%,#32b47b 85.0%,#4dbd6c 100.0%)"></div><div style="left:1793.7px;top:555.2px;width:5.4px;height:353.5px;background:linear-gradient(#000 0.0%,#000 16.0%,#050107 16.7%,#000000 18.1%,#07010c 19.5%,#010002 21.0%,#0b0211 22.4%,#11031a 23.8%,#0a020f 25.2%,#100319 26.6%,#11031a 28.0%,#2b0a3e 29.4%,#310c47 30.9%,#3b0e55 32.3%,#310c47 33.7%,#43105f 35.1%,#41105d 36.5%,#491266 37.9%,#601a81 39.3%,#390e52 40.8%,#722095 42.2%,#30b17d 43.6%,#722095 45.0%,#9bca42 46.4%,#aac93c 47.8%,#b6c837 49.2%,#e4c226 50.7%,#dbc629 52.1%,#90cb46 53.5%,#89cc49 54.9%,#c5c731 56.3%,#ccc72e 57.7%,#7fca4e 59.1%,#7fca4e 60.0%,#29aa82 60.1%,#34b67a 85.0%,#4dbd6c 100.0%)"></div><div style="left:1798.7px;top:555.2px;width:5.4px;height:353.5px;background:linear-gradient(#000 0.0%,#000 16.0%,#040106 16.7%,#020003 18.1%,#050108 19.5%,#050108 21.0%,#040106 22.4%,#11031b 23.8%,#0d0315 25.2%,#180525 26.6%,#1a0627 28.0%,#13041d 29.4%,#230834 30.9%,#2b0a3f 32.3%,#29093c 33.7%,#360d4d 35.1%,#50156f 36.5%,#581777 37.9%,#4b1368 39.3%,#43105f 40.8%,#1f9e89 42.2%,#44ba70 43.6%,#27a883 45.0%,#c2c733 46.4%,#d7c62a 47.8%,#e0c527 49.2%,#b2c939 50.7%,#cec72e 52.1%,#c7c731 53.5%,#b4c838 54.9%,#8fcb46 56.3%,#d7c62a 57.7%,#9bca42 59.1%,#9bca42 60.0%,#2eaf7e 60.1%,#4cbc6c 85.0%,#5dc162 100.0%)"></div>
<div style="left:1192.3px;top:555.2px;width:2px;height:353.5px;background:#000;"></div></body></html>
